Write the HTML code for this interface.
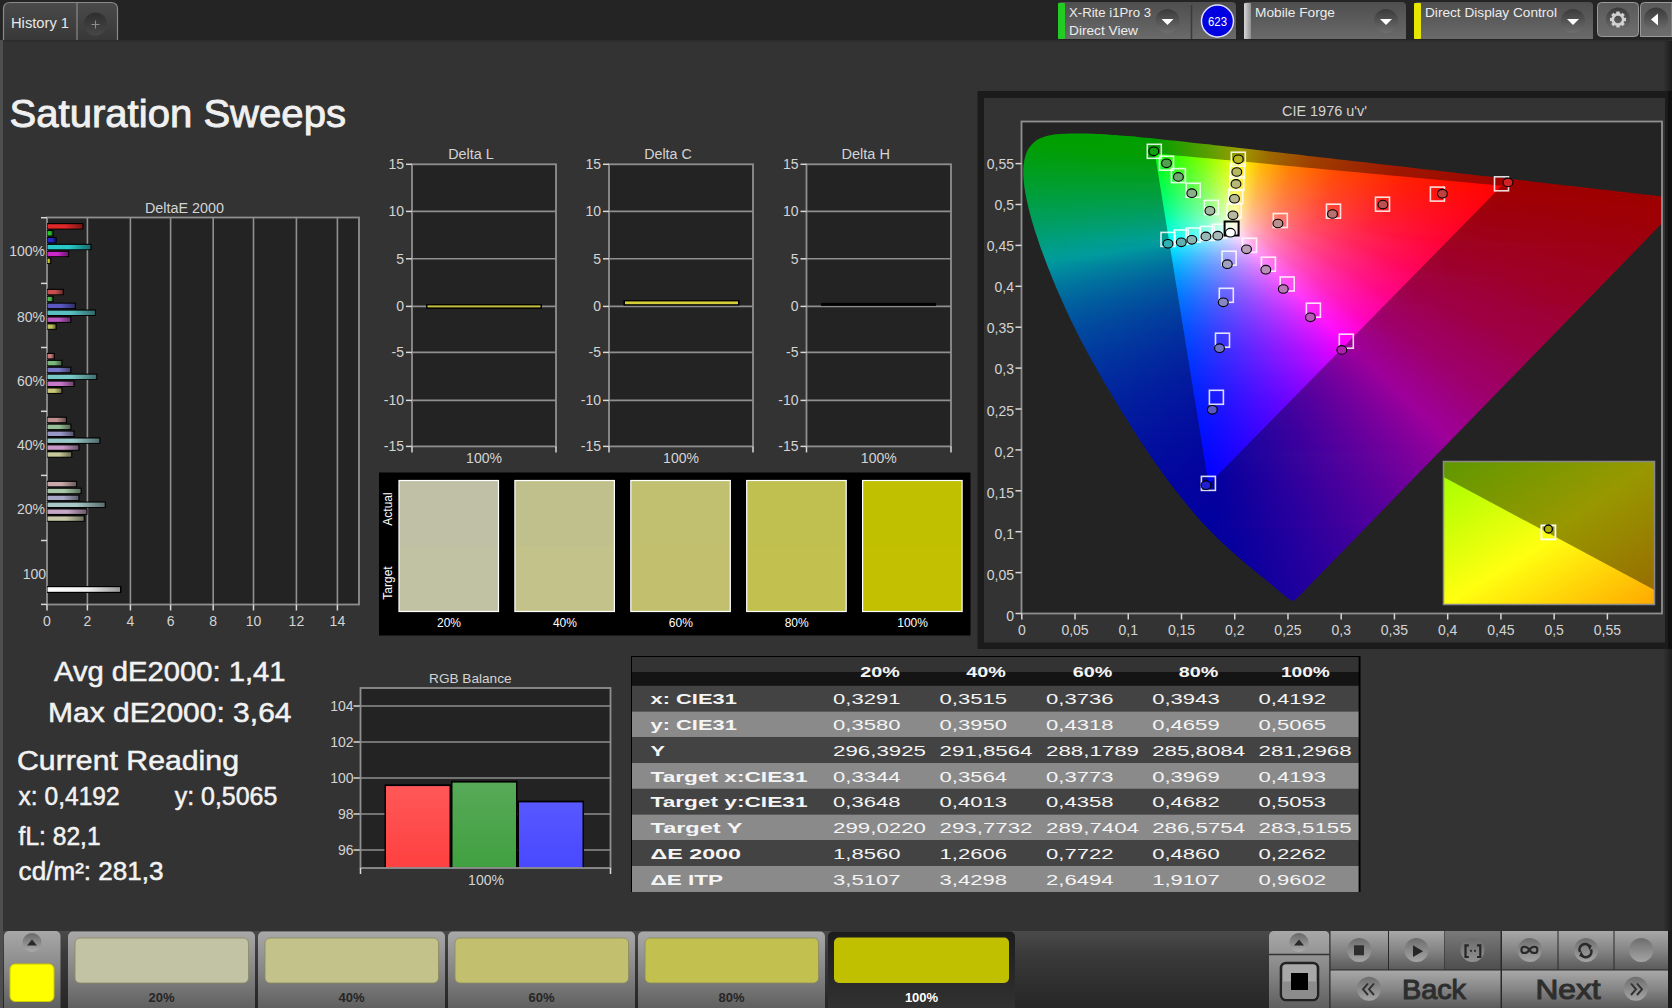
<!DOCTYPE html>
<html><head><meta charset="utf-8"><title>Saturation Sweeps</title>
<style>html,body{margin:0;padding:0;background:#333;overflow:hidden}svg{display:block}text{font-family:"Liberation Sans",sans-serif}</style>
</head><body>
<svg width="1672" height="1008" viewBox="0 0 1672 1008">
<defs><linearGradient id="tabg" x1="0" y1="0" x2="0" y2="1"><stop offset="0" stop-color="#4a4a4a"/><stop offset="1" stop-color="#383838"/></linearGradient><linearGradient id="plusg" x1="0" y1="0" x2="0" y2="1"><stop offset="0" stop-color="#2e2e2e"/><stop offset="1" stop-color="#474747"/></linearGradient><linearGradient id="wg" x1="0" y1="0" x2="0" y2="1"><stop offset="0" stop-color="#4e4e4e"/><stop offset="1" stop-color="#6a6a6a"/></linearGradient><linearGradient id="ddg" x1="0" y1="0" x2="0" y2="1"><stop offset="0" stop-color="#3a3a3a"/><stop offset="1" stop-color="#6e6e6e"/></linearGradient><linearGradient id="wbar" x1="0" y1="0" x2="1" y2="0"><stop offset="0" stop-color="#d8d8d8"/><stop offset="1" stop-color="#909090"/></linearGradient><linearGradient id="btg" x1="0" y1="0" x2="0" y2="1"><stop offset="0" stop-color="#5a5a5a"/><stop offset="1" stop-color="#6e6e6e"/></linearGradient><linearGradient id="db00" x1="0" y1="0" x2="1" y2="0"><stop offset="0" stop-color="#e02828"/><stop offset="0.5" stop-color="#e02828"/><stop offset="1" stop-color="#e02828" stop-opacity="0.55"/></linearGradient><linearGradient id="db01" x1="0" y1="0" x2="1" y2="0"><stop offset="0" stop-color="#28c828"/><stop offset="0.5" stop-color="#28c828"/><stop offset="1" stop-color="#28c828" stop-opacity="0.55"/></linearGradient><linearGradient id="db02" x1="0" y1="0" x2="1" y2="0"><stop offset="0" stop-color="#2828c8"/><stop offset="0.5" stop-color="#2828c8"/><stop offset="1" stop-color="#2828c8" stop-opacity="0.55"/></linearGradient><linearGradient id="db03" x1="0" y1="0" x2="1" y2="0"><stop offset="0" stop-color="#28c8c8"/><stop offset="0.5" stop-color="#28c8c8"/><stop offset="1" stop-color="#28c8c8" stop-opacity="0.55"/></linearGradient><linearGradient id="db04" x1="0" y1="0" x2="1" y2="0"><stop offset="0" stop-color="#c828c8"/><stop offset="0.5" stop-color="#c828c8"/><stop offset="1" stop-color="#c828c8" stop-opacity="0.55"/></linearGradient><linearGradient id="db05" x1="0" y1="0" x2="1" y2="0"><stop offset="0" stop-color="#c8c828"/><stop offset="0.5" stop-color="#c8c828"/><stop offset="1" stop-color="#c8c828" stop-opacity="0.55"/></linearGradient><linearGradient id="db10" x1="0" y1="0" x2="1" y2="0"><stop offset="0" stop-color="#c85050"/><stop offset="0.5" stop-color="#c85050"/><stop offset="1" stop-color="#c85050" stop-opacity="0.55"/></linearGradient><linearGradient id="db11" x1="0" y1="0" x2="1" y2="0"><stop offset="0" stop-color="#50b850"/><stop offset="0.5" stop-color="#50b850"/><stop offset="1" stop-color="#50b850" stop-opacity="0.55"/></linearGradient><linearGradient id="db12" x1="0" y1="0" x2="1" y2="0"><stop offset="0" stop-color="#5858c0"/><stop offset="0.5" stop-color="#5858c0"/><stop offset="1" stop-color="#5858c0" stop-opacity="0.55"/></linearGradient><linearGradient id="db13" x1="0" y1="0" x2="1" y2="0"><stop offset="0" stop-color="#58c0c0"/><stop offset="0.5" stop-color="#58c0c0"/><stop offset="1" stop-color="#58c0c0" stop-opacity="0.55"/></linearGradient><linearGradient id="db14" x1="0" y1="0" x2="1" y2="0"><stop offset="0" stop-color="#b858c0"/><stop offset="0.5" stop-color="#b858c0"/><stop offset="1" stop-color="#b858c0" stop-opacity="0.55"/></linearGradient><linearGradient id="db15" x1="0" y1="0" x2="1" y2="0"><stop offset="0" stop-color="#c0c058"/><stop offset="0.5" stop-color="#c0c058"/><stop offset="1" stop-color="#c0c058" stop-opacity="0.55"/></linearGradient><linearGradient id="db20" x1="0" y1="0" x2="1" y2="0"><stop offset="0" stop-color="#c87878"/><stop offset="0.5" stop-color="#c87878"/><stop offset="1" stop-color="#c87878" stop-opacity="0.55"/></linearGradient><linearGradient id="db21" x1="0" y1="0" x2="1" y2="0"><stop offset="0" stop-color="#78b878"/><stop offset="0.5" stop-color="#78b878"/><stop offset="1" stop-color="#78b878" stop-opacity="0.55"/></linearGradient><linearGradient id="db22" x1="0" y1="0" x2="1" y2="0"><stop offset="0" stop-color="#7878c8"/><stop offset="0.5" stop-color="#7878c8"/><stop offset="1" stop-color="#7878c8" stop-opacity="0.55"/></linearGradient><linearGradient id="db23" x1="0" y1="0" x2="1" y2="0"><stop offset="0" stop-color="#78c8c8"/><stop offset="0.5" stop-color="#78c8c8"/><stop offset="1" stop-color="#78c8c8" stop-opacity="0.55"/></linearGradient><linearGradient id="db24" x1="0" y1="0" x2="1" y2="0"><stop offset="0" stop-color="#c878c8"/><stop offset="0.5" stop-color="#c878c8"/><stop offset="1" stop-color="#c878c8" stop-opacity="0.55"/></linearGradient><linearGradient id="db25" x1="0" y1="0" x2="1" y2="0"><stop offset="0" stop-color="#c8c878"/><stop offset="0.5" stop-color="#c8c878"/><stop offset="1" stop-color="#c8c878" stop-opacity="0.55"/></linearGradient><linearGradient id="db30" x1="0" y1="0" x2="1" y2="0"><stop offset="0" stop-color="#c09090"/><stop offset="0.5" stop-color="#c09090"/><stop offset="1" stop-color="#c09090" stop-opacity="0.55"/></linearGradient><linearGradient id="db31" x1="0" y1="0" x2="1" y2="0"><stop offset="0" stop-color="#98c098"/><stop offset="0.5" stop-color="#98c098"/><stop offset="1" stop-color="#98c098" stop-opacity="0.55"/></linearGradient><linearGradient id="db32" x1="0" y1="0" x2="1" y2="0"><stop offset="0" stop-color="#9898c8"/><stop offset="0.5" stop-color="#9898c8"/><stop offset="1" stop-color="#9898c8" stop-opacity="0.55"/></linearGradient><linearGradient id="db33" x1="0" y1="0" x2="1" y2="0"><stop offset="0" stop-color="#98c8c8"/><stop offset="0.5" stop-color="#98c8c8"/><stop offset="1" stop-color="#98c8c8" stop-opacity="0.55"/></linearGradient><linearGradient id="db34" x1="0" y1="0" x2="1" y2="0"><stop offset="0" stop-color="#c898c8"/><stop offset="0.5" stop-color="#c898c8"/><stop offset="1" stop-color="#c898c8" stop-opacity="0.55"/></linearGradient><linearGradient id="db35" x1="0" y1="0" x2="1" y2="0"><stop offset="0" stop-color="#c8c898"/><stop offset="0.5" stop-color="#c8c898"/><stop offset="1" stop-color="#c8c898" stop-opacity="0.55"/></linearGradient><linearGradient id="db40" x1="0" y1="0" x2="1" y2="0"><stop offset="0" stop-color="#c8a8a8"/><stop offset="0.5" stop-color="#c8a8a8"/><stop offset="1" stop-color="#c8a8a8" stop-opacity="0.55"/></linearGradient><linearGradient id="db41" x1="0" y1="0" x2="1" y2="0"><stop offset="0" stop-color="#a8c8a8"/><stop offset="0.5" stop-color="#a8c8a8"/><stop offset="1" stop-color="#a8c8a8" stop-opacity="0.55"/></linearGradient><linearGradient id="db42" x1="0" y1="0" x2="1" y2="0"><stop offset="0" stop-color="#a8a8c8"/><stop offset="0.5" stop-color="#a8a8c8"/><stop offset="1" stop-color="#a8a8c8" stop-opacity="0.55"/></linearGradient><linearGradient id="db43" x1="0" y1="0" x2="1" y2="0"><stop offset="0" stop-color="#a8c8c8"/><stop offset="0.5" stop-color="#a8c8c8"/><stop offset="1" stop-color="#a8c8c8" stop-opacity="0.55"/></linearGradient><linearGradient id="db44" x1="0" y1="0" x2="1" y2="0"><stop offset="0" stop-color="#c8a8c8"/><stop offset="0.5" stop-color="#c8a8c8"/><stop offset="1" stop-color="#c8a8c8" stop-opacity="0.55"/></linearGradient><linearGradient id="db45" x1="0" y1="0" x2="1" y2="0"><stop offset="0" stop-color="#c8c8a8"/><stop offset="0.5" stop-color="#c8c8a8"/><stop offset="1" stop-color="#c8c8a8" stop-opacity="0.55"/></linearGradient><linearGradient id="dbw" x1="0" y1="0" x2="1" y2="0"><stop offset="0" stop-color="#ffffff"/><stop offset="0.55" stop-color="#f0f0f0"/><stop offset="1" stop-color="#9a9a9a"/></linearGradient><clipPath id="hsclip"><path d="M1295.2,599.9 L1295.2,600.0 L1295.1,600.0 L1295.0,600.1 L1294.9,600.1 L1294.8,600.2 L1294.7,600.3 L1294.6,600.3 L1294.4,600.4 L1294.2,600.4 L1294.0,600.5 L1293.8,600.5 L1293.6,600.5 L1293.4,600.5 L1293.1,600.5 L1292.8,600.5 L1292.4,600.4 L1291.9,600.3 L1291.4,600.1 L1290.9,599.9 L1290.3,599.7 L1289.8,599.4 L1289.3,599.1 L1288.8,598.7 L1288.2,598.3 L1287.6,597.9 L1286.9,597.4 L1286.2,596.9 L1285.5,596.3 L1284.7,595.7 L1283.8,595.0 L1282.9,594.2 L1281.9,593.4 L1280.8,592.6 L1279.7,591.6 L1278.5,590.6 L1277.2,589.6 L1275.9,588.5 L1274.6,587.3 L1273.2,586.1 L1271.7,584.9 L1270.1,583.6 L1268.5,582.2 L1266.8,580.8 L1265.0,579.3 L1263.1,577.8 L1261.0,576.1 L1258.9,574.3 L1256.6,572.5 L1254.3,570.6 L1251.8,568.6 L1249.3,566.5 L1246.7,564.4 L1244.0,562.1 L1241.2,559.8 L1238.3,557.2 L1235.2,554.6 L1232.0,551.8 L1228.7,548.8 L1225.3,545.6 L1221.7,542.2 L1218.0,538.7 L1214.2,535.1 L1210.3,531.1 L1206.2,526.8 L1201.7,521.9 L1196.9,516.5 L1191.8,510.6 L1186.5,504.2 L1180.9,497.3 L1175.2,490.0 L1169.3,482.2 L1163.2,473.9 L1156.8,465.1 L1150.4,455.9 L1143.9,446.3 L1137.3,436.2 L1130.5,425.6 L1123.6,414.5 L1116.7,403.3 L1110.0,392.0 L1103.2,380.5 L1096.5,368.7 L1089.8,356.7 L1083.4,344.9 L1077.3,333.2 L1071.6,321.6 L1066.2,310.0 L1061.1,298.6 L1056.2,287.4 L1051.8,276.7 L1047.7,266.5 L1043.9,256.5 L1040.4,246.9 L1037.3,237.8 L1034.5,229.2 L1032.0,221.1 L1029.9,213.6 L1028.2,206.6 L1026.7,200.0 L1025.5,193.8 L1024.5,188.1 L1023.9,182.8 L1023.5,178.0 L1023.3,173.5 L1023.3,169.2 L1023.6,165.2 L1024.1,161.6 L1024.8,158.2 L1025.7,155.1 L1026.7,152.3 L1028.0,149.6 L1029.5,147.3 L1031.2,145.2 L1033.0,143.3 L1034.9,141.5 L1036.9,140.1 L1039.1,138.8 L1041.5,137.8 L1043.9,136.9 L1046.4,136.1 L1049.0,135.4 L1051.7,134.9 L1054.5,134.6 L1057.3,134.3 L1060.1,134.0 L1063.0,133.8 L1066.0,133.7 L1069.0,133.6 L1072.1,133.6 L1075.1,133.5 L1078.1,133.5 L1081.1,133.5 L1084.2,133.6 L1087.2,133.6 L1090.3,133.7 L1093.4,133.8 L1096.5,134.0 L1099.7,134.1 L1102.9,134.3 L1106.2,134.5 L1109.5,134.7 L1112.8,134.9 L1116.2,135.1 L1119.7,135.4 L1123.2,135.7 L1126.8,136.0 L1130.5,136.3 L1134.2,136.6 L1137.9,137.0 L1141.8,137.4 L1145.7,137.7 L1149.7,138.1 L1153.8,138.6 L1157.9,139.0 L1162.2,139.4 L1166.5,139.9 L1171.0,140.4 L1175.5,140.8 L1180.1,141.3 L1184.8,141.8 L1189.6,142.4 L1194.5,142.9 L1199.5,143.5 L1204.6,144.1 L1209.8,144.6 L1215.1,145.2 L1220.6,145.8 L1226.1,146.5 L1231.7,147.1 L1237.5,147.8 L1243.4,148.4 L1249.3,149.1 L1255.4,149.8 L1261.6,150.5 L1267.9,151.2 L1274.3,152.0 L1280.9,152.7 L1287.5,153.5 L1294.3,154.3 L1301.1,155.1 L1308.1,155.9 L1315.1,156.7 L1322.3,157.5 L1329.6,158.3 L1336.9,159.2 L1344.3,160.0 L1351.9,160.9 L1359.5,161.8 L1367.1,162.6 L1374.8,163.5 L1382.5,164.4 L1390.3,165.3 L1398.2,166.2 L1406.0,167.1 L1413.7,168.0 L1421.3,168.9 L1428.9,169.7 L1436.4,170.6 L1443.9,171.5 L1451.4,172.3 L1458.8,173.2 L1466.3,174.0 L1473.7,174.9 L1481.0,175.7 L1488.1,176.5 L1495.0,177.3 L1501.8,178.1 L1508.5,178.9 L1515.0,179.6 L1521.3,180.3 L1527.5,181.0 L1533.6,181.7 L1539.5,182.4 L1545.2,183.1 L1550.7,183.7 L1556.1,184.3 L1561.2,184.9 L1566.2,185.5 L1571.0,186.1 L1575.7,186.6 L1580.2,187.1 L1584.5,187.6 L1588.7,188.1 L1592.7,188.5 L1596.7,189.0 L1600.4,189.4 L1604.1,189.8 L1607.6,190.2 L1611.0,190.6 L1614.3,191.0 L1617.6,191.4 L1620.7,191.8 L1623.8,192.1 L1626.7,192.4 L1629.6,192.8 L1632.3,193.1 L1634.7,193.4 L1637.1,193.6 L1639.6,193.9 L1642.6,194.3 L1646.0,194.7 L1649.9,195.1 L1654.0,195.6 L1657.8,196.0 L1661.1,196.4 L1663.9,196.7 L1666.2,197.0 L1668.2,197.2 L1670.2,197.4 L1672.2,197.7 L1674.3,197.9 L1676.4,198.1 L1678.5,198.4 L1680.3,198.6 L1681.8,198.8 L1683.0,198.9 L1683.9,199.0 L1684.6,199.1 L1685.1,199.1 L1685.5,199.2 Z"/></clipPath><clipPath id="hstclip"><path d="M1501.7,185.8 L1154.9,153.4 L1208.6,484.3 Z"/></clipPath><linearGradient id="hso0" gradientUnits="userSpaceOnUse" x1="1021" y1="0" x2="1662" y2="0"><stop offset="0.000" stop-color="#009e00"/><stop offset="0.206" stop-color="#049e00"/><stop offset="0.300" stop-color="#639e00"/><stop offset="0.346" stop-color="#9e9d00"/><stop offset="0.393" stop-color="#9e6c00"/><stop offset="0.473" stop-color="#9e3f00"/><stop offset="0.613" stop-color="#9e1a00"/><stop offset="0.866" stop-color="#9e0000"/><stop offset="0.997" stop-color="#9e0000"/></linearGradient><linearGradient id="hso1" gradientUnits="userSpaceOnUse" x1="1021" y1="0" x2="1662" y2="0"><stop offset="0.000" stop-color="#009e00"/><stop offset="0.206" stop-color="#049e00"/><stop offset="0.300" stop-color="#639e00"/><stop offset="0.346" stop-color="#9e9d00"/><stop offset="0.393" stop-color="#9e6b00"/><stop offset="0.473" stop-color="#9e3e00"/><stop offset="0.613" stop-color="#9e1a00"/><stop offset="0.866" stop-color="#9e0000"/><stop offset="0.997" stop-color="#9e0000"/></linearGradient><linearGradient id="hso2" gradientUnits="userSpaceOnUse" x1="1021" y1="0" x2="1662" y2="0"><stop offset="0.000" stop-color="#009e00"/><stop offset="0.206" stop-color="#039e00"/><stop offset="0.300" stop-color="#639e00"/><stop offset="0.346" stop-color="#9e9c00"/><stop offset="0.393" stop-color="#9e6b00"/><stop offset="0.473" stop-color="#9e3e00"/><stop offset="0.613" stop-color="#9e1900"/><stop offset="0.861" stop-color="#9e0000"/><stop offset="0.997" stop-color="#9e0000"/></linearGradient><linearGradient id="hso3" gradientUnits="userSpaceOnUse" x1="1021" y1="0" x2="1662" y2="0"><stop offset="0.000" stop-color="#009e00"/><stop offset="0.206" stop-color="#039e00"/><stop offset="0.300" stop-color="#639e00"/><stop offset="0.346" stop-color="#9e9c00"/><stop offset="0.393" stop-color="#9e6a00"/><stop offset="0.473" stop-color="#9e3e00"/><stop offset="0.613" stop-color="#9e1900"/><stop offset="0.861" stop-color="#9e0000"/><stop offset="0.997" stop-color="#9e0000"/></linearGradient><linearGradient id="hso4" gradientUnits="userSpaceOnUse" x1="1021" y1="0" x2="1662" y2="0"><stop offset="0.000" stop-color="#009e00"/><stop offset="0.206" stop-color="#029e00"/><stop offset="0.300" stop-color="#639e00"/><stop offset="0.346" stop-color="#9e9b00"/><stop offset="0.393" stop-color="#9e6a00"/><stop offset="0.473" stop-color="#9e3d00"/><stop offset="0.613" stop-color="#9e1900"/><stop offset="0.856" stop-color="#9e0000"/><stop offset="0.997" stop-color="#9e0000"/></linearGradient><linearGradient id="hso5" gradientUnits="userSpaceOnUse" x1="1021" y1="0" x2="1662" y2="0"><stop offset="0.000" stop-color="#009e00"/><stop offset="0.206" stop-color="#029e00"/><stop offset="0.300" stop-color="#639e00"/><stop offset="0.346" stop-color="#9e9b00"/><stop offset="0.393" stop-color="#9e6900"/><stop offset="0.473" stop-color="#9e3d00"/><stop offset="0.613" stop-color="#9e1800"/><stop offset="0.856" stop-color="#9e0000"/><stop offset="0.997" stop-color="#9e0000"/></linearGradient><linearGradient id="hso6" gradientUnits="userSpaceOnUse" x1="1021" y1="0" x2="1662" y2="0"><stop offset="0.000" stop-color="#009e00"/><stop offset="0.206" stop-color="#029e00"/><stop offset="0.300" stop-color="#639e00"/><stop offset="0.346" stop-color="#9e9b00"/><stop offset="0.393" stop-color="#9e6900"/><stop offset="0.473" stop-color="#9e3c00"/><stop offset="0.618" stop-color="#9e1700"/><stop offset="0.856" stop-color="#9e0000"/><stop offset="0.997" stop-color="#9e0000"/></linearGradient><linearGradient id="hso7" gradientUnits="userSpaceOnUse" x1="1021" y1="0" x2="1662" y2="0"><stop offset="0.000" stop-color="#009e00"/><stop offset="0.206" stop-color="#019e00"/><stop offset="0.295" stop-color="#5d9e00"/><stop offset="0.346" stop-color="#9e9a00"/><stop offset="0.393" stop-color="#9e6800"/><stop offset="0.473" stop-color="#9e3c00"/><stop offset="0.618" stop-color="#9e1700"/><stop offset="0.856" stop-color="#9e0000"/><stop offset="0.997" stop-color="#9e0000"/></linearGradient><linearGradient id="hso8" gradientUnits="userSpaceOnUse" x1="1021" y1="0" x2="1662" y2="0"><stop offset="0.000" stop-color="#009e00"/><stop offset="0.206" stop-color="#019e00"/><stop offset="0.295" stop-color="#5d9e00"/><stop offset="0.342" stop-color="#9c9e00"/><stop offset="0.398" stop-color="#9e6400"/><stop offset="0.477" stop-color="#9e3a00"/><stop offset="0.622" stop-color="#9e1600"/><stop offset="0.856" stop-color="#9e0000"/><stop offset="0.997" stop-color="#9e0000"/></linearGradient><linearGradient id="hso9" gradientUnits="userSpaceOnUse" x1="1021" y1="0" x2="1662" y2="0"><stop offset="0.000" stop-color="#009e00"/><stop offset="0.206" stop-color="#009e00"/><stop offset="0.295" stop-color="#5d9e00"/><stop offset="0.342" stop-color="#9c9e00"/><stop offset="0.393" stop-color="#9e6800"/><stop offset="0.473" stop-color="#9e3b00"/><stop offset="0.618" stop-color="#9e1600"/><stop offset="0.852" stop-color="#9e0000"/><stop offset="0.997" stop-color="#9e0000"/></linearGradient><linearGradient id="hso10" gradientUnits="userSpaceOnUse" x1="1021" y1="0" x2="1662" y2="0"><stop offset="0.000" stop-color="#009e02"/><stop offset="0.211" stop-color="#049e00"/><stop offset="0.300" stop-color="#639e00"/><stop offset="0.342" stop-color="#9d9e00"/><stop offset="0.393" stop-color="#9e6700"/><stop offset="0.473" stop-color="#9e3b00"/><stop offset="0.618" stop-color="#9e1600"/><stop offset="0.847" stop-color="#9e0000"/><stop offset="0.997" stop-color="#9e0000"/></linearGradient><linearGradient id="hso11" gradientUnits="userSpaceOnUse" x1="1021" y1="0" x2="1662" y2="0"><stop offset="0.000" stop-color="#009e04"/><stop offset="0.211" stop-color="#049e00"/><stop offset="0.300" stop-color="#639e00"/><stop offset="0.342" stop-color="#9d9e00"/><stop offset="0.393" stop-color="#9e6700"/><stop offset="0.473" stop-color="#9e3a00"/><stop offset="0.618" stop-color="#9e1600"/><stop offset="0.847" stop-color="#9e0000"/><stop offset="0.997" stop-color="#9e0000"/></linearGradient><linearGradient id="hso12" gradientUnits="userSpaceOnUse" x1="1021" y1="0" x2="1662" y2="0"><stop offset="0.000" stop-color="#009e06"/><stop offset="0.211" stop-color="#039e00"/><stop offset="0.300" stop-color="#639e00"/><stop offset="0.342" stop-color="#9d9e00"/><stop offset="0.388" stop-color="#9e6a00"/><stop offset="0.463" stop-color="#9e3e00"/><stop offset="0.599" stop-color="#9e1800"/><stop offset="0.833" stop-color="#9e0000"/><stop offset="0.997" stop-color="#9e0000"/></linearGradient><linearGradient id="hso13" gradientUnits="userSpaceOnUse" x1="1021" y1="0" x2="1662" y2="0"><stop offset="0.000" stop-color="#009e08"/><stop offset="0.211" stop-color="#039e00"/><stop offset="0.300" stop-color="#639e00"/><stop offset="0.342" stop-color="#9e9e00"/><stop offset="0.388" stop-color="#9e6900"/><stop offset="0.463" stop-color="#9e3d00"/><stop offset="0.599" stop-color="#9e1800"/><stop offset="0.833" stop-color="#9e0000"/><stop offset="0.997" stop-color="#9e0000"/></linearGradient><linearGradient id="hso14" gradientUnits="userSpaceOnUse" x1="1021" y1="0" x2="1662" y2="0"><stop offset="0.000" stop-color="#009e0a"/><stop offset="0.211" stop-color="#029e00"/><stop offset="0.300" stop-color="#639e00"/><stop offset="0.342" stop-color="#9e9e00"/><stop offset="0.388" stop-color="#9e6900"/><stop offset="0.463" stop-color="#9e3d00"/><stop offset="0.599" stop-color="#9e1800"/><stop offset="0.828" stop-color="#9e0000"/><stop offset="0.997" stop-color="#9e0000"/></linearGradient><linearGradient id="hso15" gradientUnits="userSpaceOnUse" x1="1021" y1="0" x2="1662" y2="0"><stop offset="0.000" stop-color="#009e0c"/><stop offset="0.211" stop-color="#029e00"/><stop offset="0.300" stop-color="#639e00"/><stop offset="0.342" stop-color="#9e9d00"/><stop offset="0.388" stop-color="#9e6900"/><stop offset="0.463" stop-color="#9e3c00"/><stop offset="0.599" stop-color="#9e1800"/><stop offset="0.828" stop-color="#9e0000"/><stop offset="0.997" stop-color="#9e0000"/></linearGradient><linearGradient id="hso16" gradientUnits="userSpaceOnUse" x1="1021" y1="0" x2="1662" y2="0"><stop offset="0.000" stop-color="#009e0e"/><stop offset="0.211" stop-color="#019e02"/><stop offset="0.295" stop-color="#5d9e00"/><stop offset="0.342" stop-color="#9e9d00"/><stop offset="0.388" stop-color="#9e6800"/><stop offset="0.463" stop-color="#9e3c00"/><stop offset="0.599" stop-color="#9e1700"/><stop offset="0.824" stop-color="#9e0000"/><stop offset="0.997" stop-color="#9e0000"/></linearGradient><linearGradient id="hso17" gradientUnits="userSpaceOnUse" x1="1021" y1="0" x2="1662" y2="0"><stop offset="0.000" stop-color="#009e10"/><stop offset="0.211" stop-color="#019e05"/><stop offset="0.295" stop-color="#5d9e00"/><stop offset="0.342" stop-color="#9e9c00"/><stop offset="0.388" stop-color="#9e6800"/><stop offset="0.463" stop-color="#9e3c00"/><stop offset="0.599" stop-color="#9e1700"/><stop offset="0.824" stop-color="#9e0000"/><stop offset="0.997" stop-color="#9e0000"/></linearGradient><linearGradient id="hso18" gradientUnits="userSpaceOnUse" x1="1021" y1="0" x2="1662" y2="0"><stop offset="0.000" stop-color="#009e12"/><stop offset="0.211" stop-color="#009e08"/><stop offset="0.295" stop-color="#5d9e01"/><stop offset="0.342" stop-color="#9e9c00"/><stop offset="0.384" stop-color="#9e6b00"/><stop offset="0.454" stop-color="#9e3f00"/><stop offset="0.580" stop-color="#9e1a00"/><stop offset="0.810" stop-color="#9e0000"/><stop offset="0.997" stop-color="#9e0000"/></linearGradient><linearGradient id="hso19" gradientUnits="userSpaceOnUse" x1="1021" y1="0" x2="1662" y2="0"><stop offset="0.000" stop-color="#009e14"/><stop offset="0.211" stop-color="#009e0a"/><stop offset="0.295" stop-color="#5d9e04"/><stop offset="0.342" stop-color="#9e9c00"/><stop offset="0.384" stop-color="#9e6b00"/><stop offset="0.454" stop-color="#9e3f00"/><stop offset="0.580" stop-color="#9e1a00"/><stop offset="0.805" stop-color="#9e0000"/><stop offset="0.997" stop-color="#9e0000"/></linearGradient><linearGradient id="hso20" gradientUnits="userSpaceOnUse" x1="1021" y1="0" x2="1662" y2="0"><stop offset="0.000" stop-color="#009e16"/><stop offset="0.215" stop-color="#049e0d"/><stop offset="0.300" stop-color="#649e07"/><stop offset="0.342" stop-color="#9e9b03"/><stop offset="0.384" stop-color="#9e6a00"/><stop offset="0.454" stop-color="#9e3e00"/><stop offset="0.580" stop-color="#9e1900"/><stop offset="0.805" stop-color="#9e0000"/><stop offset="0.997" stop-color="#9e0000"/></linearGradient><linearGradient id="hso21" gradientUnits="userSpaceOnUse" x1="1021" y1="0" x2="1662" y2="0"><stop offset="0.000" stop-color="#009e19"/><stop offset="0.215" stop-color="#039e10"/><stop offset="0.300" stop-color="#649e0a"/><stop offset="0.342" stop-color="#9e9b07"/><stop offset="0.384" stop-color="#9e6a02"/><stop offset="0.454" stop-color="#9e3e00"/><stop offset="0.580" stop-color="#9e1900"/><stop offset="0.800" stop-color="#9e0000"/><stop offset="0.997" stop-color="#9e0000"/></linearGradient><linearGradient id="hso22" gradientUnits="userSpaceOnUse" x1="1021" y1="0" x2="1662" y2="0"><stop offset="0.000" stop-color="#009e1b"/><stop offset="0.215" stop-color="#039e13"/><stop offset="0.300" stop-color="#649e0e"/><stop offset="0.342" stop-color="#9e9a0a"/><stop offset="0.384" stop-color="#9e6904"/><stop offset="0.454" stop-color="#9e3d00"/><stop offset="0.580" stop-color="#9e1900"/><stop offset="0.800" stop-color="#9e0000"/><stop offset="0.997" stop-color="#9e0000"/></linearGradient><linearGradient id="hso23" gradientUnits="userSpaceOnUse" x1="1021" y1="0" x2="1662" y2="0"><stop offset="0.000" stop-color="#009e1d"/><stop offset="0.215" stop-color="#029e16"/><stop offset="0.300" stop-color="#649e11"/><stop offset="0.342" stop-color="#9e9a0e"/><stop offset="0.384" stop-color="#9e6907"/><stop offset="0.454" stop-color="#9e3d01"/><stop offset="0.580" stop-color="#9e1800"/><stop offset="0.800" stop-color="#9e0000"/><stop offset="0.997" stop-color="#9e0000"/></linearGradient><linearGradient id="hso24" gradientUnits="userSpaceOnUse" x1="1021" y1="0" x2="1662" y2="0"><stop offset="0.000" stop-color="#009e1f"/><stop offset="0.215" stop-color="#029e19"/><stop offset="0.295" stop-color="#5d9e15"/><stop offset="0.337" stop-color="#9c9e12"/><stop offset="0.388" stop-color="#9e6409"/><stop offset="0.463" stop-color="#9e3802"/><stop offset="0.599" stop-color="#9e1500"/><stop offset="0.805" stop-color="#9e0000"/><stop offset="0.997" stop-color="#9e0000"/></linearGradient><linearGradient id="hso25" gradientUnits="userSpaceOnUse" x1="1021" y1="0" x2="1662" y2="0"><stop offset="0.000" stop-color="#009e21"/><stop offset="0.215" stop-color="#019e1c"/><stop offset="0.295" stop-color="#5e9e18"/><stop offset="0.337" stop-color="#9c9e16"/><stop offset="0.384" stop-color="#9e680c"/><stop offset="0.454" stop-color="#9e3c05"/><stop offset="0.580" stop-color="#9e1800"/><stop offset="0.796" stop-color="#9e0000"/><stop offset="0.997" stop-color="#9e0000"/></linearGradient><linearGradient id="hso26" gradientUnits="userSpaceOnUse" x1="1021" y1="0" x2="1662" y2="0"><stop offset="0.000" stop-color="#009e23"/><stop offset="0.215" stop-color="#019e1f"/><stop offset="0.295" stop-color="#5e9e1c"/><stop offset="0.337" stop-color="#9c9e1a"/><stop offset="0.384" stop-color="#9e670f"/><stop offset="0.454" stop-color="#9e3b07"/><stop offset="0.580" stop-color="#9e1700"/><stop offset="0.791" stop-color="#9e0000"/><stop offset="0.997" stop-color="#9e0000"/></linearGradient><linearGradient id="hso27" gradientUnits="userSpaceOnUse" x1="1021" y1="0" x2="1662" y2="0"><stop offset="0.000" stop-color="#009e26"/><stop offset="0.215" stop-color="#009e22"/><stop offset="0.295" stop-color="#5e9e1f"/><stop offset="0.337" stop-color="#9d9e1e"/><stop offset="0.384" stop-color="#9e6712"/><stop offset="0.454" stop-color="#9e3b09"/><stop offset="0.580" stop-color="#9e1701"/><stop offset="0.791" stop-color="#9e0000"/><stop offset="0.997" stop-color="#9e0000"/></linearGradient><linearGradient id="hso28" gradientUnits="userSpaceOnUse" x1="1021" y1="0" x2="1662" y2="0"><stop offset="0.000" stop-color="#009e28"/><stop offset="0.215" stop-color="#009e25"/><stop offset="0.295" stop-color="#5e9e23"/><stop offset="0.337" stop-color="#9d9e22"/><stop offset="0.379" stop-color="#9e6a16"/><stop offset="0.445" stop-color="#9e3f0c"/><stop offset="0.566" stop-color="#9e1903"/><stop offset="0.777" stop-color="#9e0000"/><stop offset="0.997" stop-color="#9e0000"/></linearGradient><linearGradient id="hso29" gradientUnits="userSpaceOnUse" x1="1021" y1="0" x2="1662" y2="0"><stop offset="0.000" stop-color="#009e2a"/><stop offset="0.215" stop-color="#009e28"/><stop offset="0.290" stop-color="#579e27"/><stop offset="0.337" stop-color="#9e9e26"/><stop offset="0.379" stop-color="#9e6a19"/><stop offset="0.445" stop-color="#9e3e0e"/><stop offset="0.566" stop-color="#9e1904"/><stop offset="0.777" stop-color="#9e0000"/><stop offset="0.997" stop-color="#9e0000"/></linearGradient><linearGradient id="hso30" gradientUnits="userSpaceOnUse" x1="1021" y1="0" x2="1662" y2="0"><stop offset="0.000" stop-color="#009e2d"/><stop offset="0.220" stop-color="#049e2b"/><stop offset="0.300" stop-color="#649e2a"/><stop offset="0.337" stop-color="#9e9e2a"/><stop offset="0.379" stop-color="#9e691b"/><stop offset="0.445" stop-color="#9e3e10"/><stop offset="0.566" stop-color="#9e1905"/><stop offset="0.777" stop-color="#9e0000"/><stop offset="0.997" stop-color="#9e0000"/></linearGradient><linearGradient id="hso31" gradientUnits="userSpaceOnUse" x1="1021" y1="0" x2="1662" y2="0"><stop offset="0.000" stop-color="#009e2f"/><stop offset="0.220" stop-color="#039e2e"/><stop offset="0.300" stop-color="#649e2e"/><stop offset="0.337" stop-color="#9e9d2e"/><stop offset="0.379" stop-color="#9e691e"/><stop offset="0.445" stop-color="#9e3d12"/><stop offset="0.566" stop-color="#9e1807"/><stop offset="0.772" stop-color="#9e0000"/><stop offset="0.997" stop-color="#9e0000"/></linearGradient><linearGradient id="hso32" gradientUnits="userSpaceOnUse" x1="1021" y1="0" x2="1662" y2="0"><stop offset="0.000" stop-color="#009e31"/><stop offset="0.220" stop-color="#039e32"/><stop offset="0.300" stop-color="#649e32"/><stop offset="0.337" stop-color="#9e9d32"/><stop offset="0.379" stop-color="#9e6821"/><stop offset="0.445" stop-color="#9e3d14"/><stop offset="0.566" stop-color="#9e1808"/><stop offset="0.772" stop-color="#9e0000"/><stop offset="0.997" stop-color="#9e0000"/></linearGradient><linearGradient id="hso33" gradientUnits="userSpaceOnUse" x1="1021" y1="0" x2="1662" y2="0"><stop offset="0.000" stop-color="#009e33"/><stop offset="0.220" stop-color="#029e35"/><stop offset="0.295" stop-color="#5e9e36"/><stop offset="0.337" stop-color="#9e9c36"/><stop offset="0.379" stop-color="#9e6824"/><stop offset="0.445" stop-color="#9e3c16"/><stop offset="0.566" stop-color="#9e1709"/><stop offset="0.768" stop-color="#9e0001"/><stop offset="0.997" stop-color="#9e0000"/></linearGradient><linearGradient id="hso34" gradientUnits="userSpaceOnUse" x1="1021" y1="0" x2="1662" y2="0"><stop offset="0.000" stop-color="#009e36"/><stop offset="0.220" stop-color="#029e38"/><stop offset="0.295" stop-color="#5e9e3a"/><stop offset="0.337" stop-color="#9e9c3a"/><stop offset="0.379" stop-color="#9e6727"/><stop offset="0.445" stop-color="#9e3c18"/><stop offset="0.566" stop-color="#9e170b"/><stop offset="0.768" stop-color="#9e0002"/><stop offset="0.997" stop-color="#9e0000"/></linearGradient><linearGradient id="hso35" gradientUnits="userSpaceOnUse" x1="1021" y1="0" x2="1662" y2="0"><stop offset="0.000" stop-color="#009e38"/><stop offset="0.220" stop-color="#019e3c"/><stop offset="0.295" stop-color="#5e9e3e"/><stop offset="0.337" stop-color="#9e9b3e"/><stop offset="0.374" stop-color="#9e6b2c"/><stop offset="0.440" stop-color="#9e3e1b"/><stop offset="0.557" stop-color="#9e190d"/><stop offset="0.758" stop-color="#9e0003"/><stop offset="0.997" stop-color="#9e0000"/></linearGradient><linearGradient id="hso36" gradientUnits="userSpaceOnUse" x1="1021" y1="0" x2="1662" y2="0"><stop offset="0.000" stop-color="#009e3b"/><stop offset="0.220" stop-color="#019e3f"/><stop offset="0.295" stop-color="#5e9e42"/><stop offset="0.337" stop-color="#9e9b42"/><stop offset="0.374" stop-color="#9e6a2f"/><stop offset="0.440" stop-color="#9e3d1d"/><stop offset="0.557" stop-color="#9e180e"/><stop offset="0.758" stop-color="#9e0004"/><stop offset="0.997" stop-color="#9e0000"/></linearGradient><linearGradient id="hso37" gradientUnits="userSpaceOnUse" x1="1021" y1="0" x2="1662" y2="0"><stop offset="0.000" stop-color="#009e3d"/><stop offset="0.220" stop-color="#009e43"/><stop offset="0.295" stop-color="#5e9e46"/><stop offset="0.337" stop-color="#9e9a47"/><stop offset="0.374" stop-color="#9e6a32"/><stop offset="0.440" stop-color="#9e3d1f"/><stop offset="0.557" stop-color="#9e1810"/><stop offset="0.754" stop-color="#9e0005"/><stop offset="0.997" stop-color="#9e0000"/></linearGradient><linearGradient id="hso38" gradientUnits="userSpaceOnUse" x1="1021" y1="0" x2="1662" y2="0"><stop offset="0.000" stop-color="#009e3f"/><stop offset="0.220" stop-color="#009e46"/><stop offset="0.295" stop-color="#5e9e4a"/><stop offset="0.337" stop-color="#9e9a4b"/><stop offset="0.374" stop-color="#9e6935"/><stop offset="0.440" stop-color="#9e3c21"/><stop offset="0.557" stop-color="#9e1711"/><stop offset="0.754" stop-color="#9e0006"/><stop offset="0.997" stop-color="#9e0000"/></linearGradient><linearGradient id="hso39" gradientUnits="userSpaceOnUse" x1="1021" y1="0" x2="1662" y2="0"><stop offset="0.000" stop-color="#009e42"/><stop offset="0.225" stop-color="#049e4a"/><stop offset="0.300" stop-color="#659e4f"/><stop offset="0.332" stop-color="#9b9e51"/><stop offset="0.379" stop-color="#9e6436"/><stop offset="0.445" stop-color="#9e3a22"/><stop offset="0.566" stop-color="#9e1511"/><stop offset="0.758" stop-color="#9e0006"/><stop offset="0.997" stop-color="#9e0000"/></linearGradient><linearGradient id="hso40" gradientUnits="userSpaceOnUse" x1="1021" y1="0" x2="1662" y2="0"><stop offset="0.000" stop-color="#009e44"/><stop offset="0.225" stop-color="#049e4e"/><stop offset="0.300" stop-color="#659e53"/><stop offset="0.332" stop-color="#9b9e56"/><stop offset="0.379" stop-color="#9e6439"/><stop offset="0.445" stop-color="#9e3925"/><stop offset="0.566" stop-color="#9e1513"/><stop offset="0.754" stop-color="#9e0007"/><stop offset="0.997" stop-color="#9e0001"/></linearGradient><linearGradient id="hso41" gradientUnits="userSpaceOnUse" x1="1021" y1="0" x2="1662" y2="0"><stop offset="0.000" stop-color="#009e47"/><stop offset="0.225" stop-color="#039e51"/><stop offset="0.295" stop-color="#5e9e57"/><stop offset="0.332" stop-color="#9c9e5b"/><stop offset="0.374" stop-color="#9e683f"/><stop offset="0.440" stop-color="#9e3b28"/><stop offset="0.557" stop-color="#9e1615"/><stop offset="0.744" stop-color="#9e0009"/><stop offset="0.997" stop-color="#9e0001"/></linearGradient><linearGradient id="hso42" gradientUnits="userSpaceOnUse" x1="1021" y1="0" x2="1662" y2="0"><stop offset="0.000" stop-color="#009e49"/><stop offset="0.225" stop-color="#029e55"/><stop offset="0.295" stop-color="#5e9e5b"/><stop offset="0.332" stop-color="#9c9e60"/><stop offset="0.374" stop-color="#9e6742"/><stop offset="0.440" stop-color="#9e3a2a"/><stop offset="0.557" stop-color="#9e1617"/><stop offset="0.744" stop-color="#9e000a"/><stop offset="0.997" stop-color="#9e0002"/></linearGradient><linearGradient id="hso43" gradientUnits="userSpaceOnUse" x1="1021" y1="0" x2="1662" y2="0"><stop offset="0.000" stop-color="#009e4c"/><stop offset="0.225" stop-color="#029e59"/><stop offset="0.295" stop-color="#5e9e60"/><stop offset="0.332" stop-color="#9d9e65"/><stop offset="0.374" stop-color="#9e6645"/><stop offset="0.440" stop-color="#9e3a2c"/><stop offset="0.557" stop-color="#9e1618"/><stop offset="0.744" stop-color="#9e000a"/><stop offset="0.997" stop-color="#9e0003"/></linearGradient><linearGradient id="hso44" gradientUnits="userSpaceOnUse" x1="1021" y1="0" x2="1662" y2="0"><stop offset="0.000" stop-color="#009e4f"/><stop offset="0.225" stop-color="#019e5d"/><stop offset="0.295" stop-color="#5e9e64"/><stop offset="0.332" stop-color="#9d9e6a"/><stop offset="0.370" stop-color="#9e6b4b"/><stop offset="0.431" stop-color="#9e3e31"/><stop offset="0.538" stop-color="#9e191c"/><stop offset="0.730" stop-color="#9e000c"/><stop offset="0.997" stop-color="#9e0003"/></linearGradient><linearGradient id="hso45" gradientUnits="userSpaceOnUse" x1="1021" y1="0" x2="1662" y2="0"><stop offset="0.000" stop-color="#009e51"/><stop offset="0.225" stop-color="#019e61"/><stop offset="0.295" stop-color="#5e9e69"/><stop offset="0.332" stop-color="#9e9e6f"/><stop offset="0.370" stop-color="#9e6a4f"/><stop offset="0.431" stop-color="#9e3d34"/><stop offset="0.538" stop-color="#9e191d"/><stop offset="0.725" stop-color="#9e000d"/><stop offset="0.997" stop-color="#9e0004"/></linearGradient><linearGradient id="hso46" gradientUnits="userSpaceOnUse" x1="1021" y1="0" x2="1662" y2="0"><stop offset="0.000" stop-color="#009e54"/><stop offset="0.225" stop-color="#009e65"/><stop offset="0.295" stop-color="#5e9e6e"/><stop offset="0.332" stop-color="#9e9e74"/><stop offset="0.370" stop-color="#9e6952"/><stop offset="0.431" stop-color="#9e3d36"/><stop offset="0.538" stop-color="#9e181f"/><stop offset="0.725" stop-color="#9e000e"/><stop offset="0.997" stop-color="#9e0004"/></linearGradient><linearGradient id="hso47" gradientUnits="userSpaceOnUse" x1="1021" y1="0" x2="1662" y2="0"><stop offset="0.000" stop-color="#009e56"/><stop offset="0.225" stop-color="#009e69"/><stop offset="0.295" stop-color="#5e9e72"/><stop offset="0.332" stop-color="#9e9d78"/><stop offset="0.370" stop-color="#9e6956"/><stop offset="0.431" stop-color="#9e3c38"/><stop offset="0.538" stop-color="#9e1820"/><stop offset="0.721" stop-color="#9e000f"/><stop offset="0.997" stop-color="#9e0005"/></linearGradient><linearGradient id="hso48" gradientUnits="userSpaceOnUse" x1="1021" y1="0" x2="1662" y2="0"><stop offset="0.000" stop-color="#009e59"/><stop offset="0.225" stop-color="#009e6d"/><stop offset="0.290" stop-color="#579e76"/><stop offset="0.332" stop-color="#9e9d7d"/><stop offset="0.370" stop-color="#9e6859"/><stop offset="0.431" stop-color="#9e3c3b"/><stop offset="0.538" stop-color="#9e1722"/><stop offset="0.721" stop-color="#9e0010"/><stop offset="0.997" stop-color="#9e0005"/></linearGradient><linearGradient id="hso49" gradientUnits="userSpaceOnUse" x1="1021" y1="0" x2="1662" y2="0"><stop offset="0.000" stop-color="#009e5c"/><stop offset="0.229" stop-color="#049e71"/><stop offset="0.300" stop-color="#669e7d"/><stop offset="0.332" stop-color="#9e9c82"/><stop offset="0.370" stop-color="#9e685d"/><stop offset="0.431" stop-color="#9e3b3d"/><stop offset="0.538" stop-color="#9e1723"/><stop offset="0.716" stop-color="#9e0011"/><stop offset="0.997" stop-color="#9e0006"/></linearGradient><linearGradient id="hso50" gradientUnits="userSpaceOnUse" x1="1021" y1="0" x2="1662" y2="0"><stop offset="0.000" stop-color="#009e5e"/><stop offset="0.229" stop-color="#039e76"/><stop offset="0.295" stop-color="#5e9e81"/><stop offset="0.332" stop-color="#9e9c87"/><stop offset="0.370" stop-color="#9e6760"/><stop offset="0.431" stop-color="#9e3b3f"/><stop offset="0.538" stop-color="#9e1725"/><stop offset="0.716" stop-color="#9e0012"/><stop offset="0.997" stop-color="#9e0007"/></linearGradient><linearGradient id="hso51" gradientUnits="userSpaceOnUse" x1="1021" y1="0" x2="1662" y2="0"><stop offset="0.000" stop-color="#009e61"/><stop offset="0.229" stop-color="#039e7a"/><stop offset="0.295" stop-color="#5e9e86"/><stop offset="0.332" stop-color="#9e9b8c"/><stop offset="0.370" stop-color="#9e6664"/><stop offset="0.431" stop-color="#9e3a42"/><stop offset="0.538" stop-color="#9e1626"/><stop offset="0.716" stop-color="#9e0013"/><stop offset="0.997" stop-color="#9e0007"/></linearGradient><linearGradient id="hso52" gradientUnits="userSpaceOnUse" x1="1021" y1="0" x2="1662" y2="0"><stop offset="0.000" stop-color="#009e64"/><stop offset="0.229" stop-color="#029e7e"/><stop offset="0.295" stop-color="#5e9e8b"/><stop offset="0.332" stop-color="#9e9a91"/><stop offset="0.370" stop-color="#9e6667"/><stop offset="0.431" stop-color="#9e3a44"/><stop offset="0.538" stop-color="#9e1628"/><stop offset="0.711" stop-color="#9e0015"/><stop offset="0.997" stop-color="#9e0008"/></linearGradient><linearGradient id="hso53" gradientUnits="userSpaceOnUse" x1="1021" y1="0" x2="1662" y2="0"><stop offset="0.000" stop-color="#009e67"/><stop offset="0.229" stop-color="#029e82"/><stop offset="0.295" stop-color="#5e9e90"/><stop offset="0.332" stop-color="#9e9a96"/><stop offset="0.365" stop-color="#9e6a6f"/><stop offset="0.421" stop-color="#9e3e4b"/><stop offset="0.524" stop-color="#9e192c"/><stop offset="0.702" stop-color="#9e0016"/><stop offset="0.997" stop-color="#9e0009"/></linearGradient><linearGradient id="hso54" gradientUnits="userSpaceOnUse" x1="1021" y1="0" x2="1662" y2="0"><stop offset="0.000" stop-color="#009e6a"/><stop offset="0.229" stop-color="#019e87"/><stop offset="0.295" stop-color="#5e9e96"/><stop offset="0.332" stop-color="#9e999c"/><stop offset="0.365" stop-color="#9e6973"/><stop offset="0.421" stop-color="#9e3d4d"/><stop offset="0.524" stop-color="#9e182e"/><stop offset="0.697" stop-color="#9e0018"/><stop offset="0.997" stop-color="#9e0009"/></linearGradient><linearGradient id="hso55" gradientUnits="userSpaceOnUse" x1="1021" y1="0" x2="1662" y2="0"><stop offset="0.000" stop-color="#009e6c"/><stop offset="0.229" stop-color="#009e8b"/><stop offset="0.295" stop-color="#5e9e9b"/><stop offset="0.332" stop-color="#9b969e"/><stop offset="0.374" stop-color="#9e5f6e"/><stop offset="0.435" stop-color="#9e364a"/><stop offset="0.548" stop-color="#9e132b"/><stop offset="0.711" stop-color="#9e0018"/><stop offset="0.997" stop-color="#9e000a"/></linearGradient><linearGradient id="hso56" gradientUnits="userSpaceOnUse" x1="1021" y1="0" x2="1662" y2="0"><stop offset="0.000" stop-color="#009e6f"/><stop offset="0.229" stop-color="#009e90"/><stop offset="0.304" stop-color="#6b999e"/><stop offset="0.337" stop-color="#9e8f9e"/><stop offset="0.374" stop-color="#9e5f72"/><stop offset="0.435" stop-color="#9e354c"/><stop offset="0.548" stop-color="#9e122c"/><stop offset="0.707" stop-color="#9e0019"/><stop offset="0.997" stop-color="#9e000a"/></linearGradient><linearGradient id="hso57" gradientUnits="userSpaceOnUse" x1="1021" y1="0" x2="1662" y2="0"><stop offset="0.000" stop-color="#009e72"/><stop offset="0.229" stop-color="#009e94"/><stop offset="0.290" stop-color="#53989e"/><stop offset="0.342" stop-color="#9e879c"/><stop offset="0.384" stop-color="#9e556d"/><stop offset="0.454" stop-color="#9e2c47"/><stop offset="0.585" stop-color="#9e0b28"/><stop offset="0.721" stop-color="#9e0019"/><stop offset="0.997" stop-color="#9e000b"/></linearGradient><linearGradient id="hso58" gradientUnits="userSpaceOnUse" x1="1021" y1="0" x2="1662" y2="0"><stop offset="0.000" stop-color="#009e75"/><stop offset="0.229" stop-color="#009e99"/><stop offset="0.314" stop-color="#728c9e"/><stop offset="0.346" stop-color="#9e7f9a"/><stop offset="0.388" stop-color="#9e516d"/><stop offset="0.463" stop-color="#9e2846"/><stop offset="0.608" stop-color="#9e0726"/><stop offset="0.739" stop-color="#9e0018"/><stop offset="0.997" stop-color="#9e000c"/></linearGradient><linearGradient id="hso59" gradientUnits="userSpaceOnUse" x1="1021" y1="0" x2="1662" y2="0"><stop offset="0.000" stop-color="#009e78"/><stop offset="0.234" stop-color="#049d9e"/><stop offset="0.346" stop-color="#9e7e9e"/><stop offset="0.388" stop-color="#9e5070"/><stop offset="0.463" stop-color="#9e2848"/><stop offset="0.608" stop-color="#9e0727"/><stop offset="0.744" stop-color="#9e0019"/><stop offset="0.997" stop-color="#9e000c"/></linearGradient><linearGradient id="hso60" gradientUnits="userSpaceOnUse" x1="1021" y1="0" x2="1662" y2="0"><stop offset="0.000" stop-color="#009e7b"/><stop offset="0.225" stop-color="#009b9e"/><stop offset="0.239" stop-color="#09979e"/><stop offset="0.351" stop-color="#9e779c"/><stop offset="0.398" stop-color="#9e496c"/><stop offset="0.477" stop-color="#9e2245"/><stop offset="0.632" stop-color="#9e0325"/><stop offset="0.997" stop-color="#9e000d"/></linearGradient><linearGradient id="hso61" gradientUnits="userSpaceOnUse" x1="1021" y1="0" x2="1662" y2="0"><stop offset="0.000" stop-color="#009e7e"/><stop offset="0.211" stop-color="#009a9e"/><stop offset="0.234" stop-color="#02949e"/><stop offset="0.356" stop-color="#9e709a"/><stop offset="0.402" stop-color="#9e456c"/><stop offset="0.482" stop-color="#9e2045"/><stop offset="0.641" stop-color="#9e0225"/><stop offset="0.997" stop-color="#9e000d"/></linearGradient><linearGradient id="hso62" gradientUnits="userSpaceOnUse" x1="1021" y1="0" x2="1662" y2="0"><stop offset="0.000" stop-color="#009e81"/><stop offset="0.192" stop-color="#009a9e"/><stop offset="0.234" stop-color="#02909e"/><stop offset="0.356" stop-color="#9e6f9e"/><stop offset="0.402" stop-color="#9e446f"/><stop offset="0.482" stop-color="#9e2047"/><stop offset="0.637" stop-color="#9e0227"/><stop offset="0.997" stop-color="#9e000e"/></linearGradient><linearGradient id="hso63" gradientUnits="userSpaceOnUse" x1="1021" y1="0" x2="1662" y2="0"><stop offset="0.000" stop-color="#009e84"/><stop offset="0.173" stop-color="#009a9e"/><stop offset="0.234" stop-color="#018c9e"/><stop offset="0.360" stop-color="#9e699c"/><stop offset="0.407" stop-color="#9e406f"/><stop offset="0.491" stop-color="#9e1d46"/><stop offset="0.655" stop-color="#9e0026"/><stop offset="0.997" stop-color="#9e000f"/></linearGradient><linearGradient id="hso64" gradientUnits="userSpaceOnUse" x1="1021" y1="0" x2="1662" y2="0"><stop offset="0.000" stop-color="#009e87"/><stop offset="0.154" stop-color="#009a9e"/><stop offset="0.234" stop-color="#00889e"/><stop offset="0.365" stop-color="#9e639a"/><stop offset="0.417" stop-color="#9e3a6b"/><stop offset="0.505" stop-color="#9e1844"/><stop offset="0.665" stop-color="#9e0026"/><stop offset="0.997" stop-color="#9e000f"/></linearGradient><linearGradient id="hso65" gradientUnits="userSpaceOnUse" x1="1021" y1="0" x2="1662" y2="0"><stop offset="0.000" stop-color="#009e8a"/><stop offset="0.136" stop-color="#009a9e"/><stop offset="0.234" stop-color="#00849e"/><stop offset="0.365" stop-color="#9e629e"/><stop offset="0.417" stop-color="#9e3a6e"/><stop offset="0.505" stop-color="#9e1845"/><stop offset="0.665" stop-color="#9e0027"/><stop offset="0.997" stop-color="#9e0010"/></linearGradient><linearGradient id="hso66" gradientUnits="userSpaceOnUse" x1="1021" y1="0" x2="1662" y2="0"><stop offset="0.000" stop-color="#009e8d"/><stop offset="0.122" stop-color="#00999e"/><stop offset="0.234" stop-color="#00809e"/><stop offset="0.370" stop-color="#9e5d9d"/><stop offset="0.421" stop-color="#9e366e"/><stop offset="0.510" stop-color="#9e1646"/><stop offset="0.665" stop-color="#9e0028"/><stop offset="0.997" stop-color="#9e0010"/></linearGradient><linearGradient id="hso67" gradientUnits="userSpaceOnUse" x1="1021" y1="0" x2="1662" y2="0"><stop offset="0.000" stop-color="#009e90"/><stop offset="0.103" stop-color="#00999e"/><stop offset="0.239" stop-color="#047c9e"/><stop offset="0.374" stop-color="#9e579b"/><stop offset="0.426" stop-color="#9e336d"/><stop offset="0.515" stop-color="#9e1546"/><stop offset="0.665" stop-color="#9e0029"/><stop offset="0.997" stop-color="#9e0011"/></linearGradient><linearGradient id="hso68" gradientUnits="userSpaceOnUse" x1="1021" y1="0" x2="1662" y2="0"><stop offset="0.000" stop-color="#009e94"/><stop offset="0.089" stop-color="#00999e"/><stop offset="0.239" stop-color="#03799e"/><stop offset="0.374" stop-color="#9e569e"/><stop offset="0.431" stop-color="#9e306d"/><stop offset="0.524" stop-color="#9e1245"/><stop offset="0.669" stop-color="#9e0029"/><stop offset="0.997" stop-color="#9e0012"/></linearGradient><linearGradient id="hso69" gradientUnits="userSpaceOnUse" x1="1021" y1="0" x2="1662" y2="0"><stop offset="0.000" stop-color="#009e97"/><stop offset="0.084" stop-color="#00969e"/><stop offset="0.239" stop-color="#03759e"/><stop offset="0.379" stop-color="#9e529d"/><stop offset="0.435" stop-color="#9e2e6d"/><stop offset="0.529" stop-color="#9e1145"/><stop offset="0.665" stop-color="#9e002b"/><stop offset="0.997" stop-color="#9e0012"/></linearGradient><linearGradient id="hso70" gradientUnits="userSpaceOnUse" x1="1021" y1="0" x2="1662" y2="0"><stop offset="0.000" stop-color="#009e9a"/><stop offset="0.187" stop-color="#007e9e"/><stop offset="0.239" stop-color="#02729e"/><stop offset="0.384" stop-color="#9e4d9b"/><stop offset="0.440" stop-color="#9e2b6c"/><stop offset="0.538" stop-color="#9e0e45"/><stop offset="0.665" stop-color="#9e002c"/><stop offset="0.997" stop-color="#9e0013"/></linearGradient><linearGradient id="hso71" gradientUnits="userSpaceOnUse" x1="1021" y1="0" x2="1662" y2="0"><stop offset="0.000" stop-color="#009e9d"/><stop offset="0.239" stop-color="#026f9e"/><stop offset="0.384" stop-color="#9e4c9e"/><stop offset="0.440" stop-color="#9e2a6f"/><stop offset="0.538" stop-color="#9e0e46"/><stop offset="0.665" stop-color="#9e002d"/><stop offset="0.997" stop-color="#9e0013"/></linearGradient><linearGradient id="hso72" gradientUnits="userSpaceOnUse" x1="1021" y1="0" x2="1662" y2="0"><stop offset="0.000" stop-color="#009c9e"/><stop offset="0.239" stop-color="#016d9e"/><stop offset="0.388" stop-color="#9e489d"/><stop offset="0.445" stop-color="#9e286f"/><stop offset="0.543" stop-color="#9e0c47"/><stop offset="0.665" stop-color="#9e002e"/><stop offset="0.997" stop-color="#9e0014"/></linearGradient><linearGradient id="hso73" gradientUnits="userSpaceOnUse" x1="1021" y1="0" x2="1662" y2="0"><stop offset="0.000" stop-color="#00989e"/><stop offset="0.239" stop-color="#016a9e"/><stop offset="0.393" stop-color="#9e449b"/><stop offset="0.454" stop-color="#9e246c"/><stop offset="0.557" stop-color="#9e0944"/><stop offset="0.669" stop-color="#9e002f"/><stop offset="0.997" stop-color="#9e0015"/></linearGradient><linearGradient id="hso74" gradientUnits="userSpaceOnUse" x1="1021" y1="0" x2="1662" y2="0"><stop offset="0.000" stop-color="#00959e"/><stop offset="0.239" stop-color="#00679e"/><stop offset="0.393" stop-color="#9e439e"/><stop offset="0.454" stop-color="#9e236e"/><stop offset="0.557" stop-color="#9e0946"/><stop offset="0.669" stop-color="#9e0030"/><stop offset="0.997" stop-color="#9e0015"/></linearGradient><linearGradient id="hso75" gradientUnits="userSpaceOnUse" x1="1021" y1="0" x2="1662" y2="0"><stop offset="0.000" stop-color="#00929e"/><stop offset="0.243" stop-color="#04649e"/><stop offset="0.398" stop-color="#9e3f9d"/><stop offset="0.459" stop-color="#9e216e"/><stop offset="0.562" stop-color="#9e0846"/><stop offset="0.674" stop-color="#9e0031"/><stop offset="0.997" stop-color="#9e0016"/></linearGradient><linearGradient id="hso76" gradientUnits="userSpaceOnUse" x1="1021" y1="0" x2="1662" y2="0"><stop offset="0.000" stop-color="#008f9e"/><stop offset="0.243" stop-color="#03619e"/><stop offset="0.402" stop-color="#9e3b9b"/><stop offset="0.463" stop-color="#9e1f6d"/><stop offset="0.571" stop-color="#9e0645"/><stop offset="0.707" stop-color="#9e002d"/><stop offset="0.997" stop-color="#9e0017"/></linearGradient><linearGradient id="hso77" gradientUnits="userSpaceOnUse" x1="1021" y1="0" x2="1662" y2="0"><stop offset="0.000" stop-color="#008d9e"/><stop offset="0.243" stop-color="#035f9e"/><stop offset="0.402" stop-color="#9e3a9e"/><stop offset="0.468" stop-color="#9e1c6d"/><stop offset="0.576" stop-color="#9e0546"/><stop offset="0.786" stop-color="#9e0025"/><stop offset="0.997" stop-color="#9e0017"/></linearGradient><linearGradient id="hso78" gradientUnits="userSpaceOnUse" x1="1021" y1="0" x2="1662" y2="0"><stop offset="0.000" stop-color="#008a9e"/><stop offset="0.243" stop-color="#025c9e"/><stop offset="0.407" stop-color="#9e379d"/><stop offset="0.473" stop-color="#9e1a6d"/><stop offset="0.585" stop-color="#9e0345"/><stop offset="0.805" stop-color="#9e0025"/><stop offset="0.997" stop-color="#9e0018"/></linearGradient><linearGradient id="hso79" gradientUnits="userSpaceOnUse" x1="1021" y1="0" x2="1662" y2="0"><stop offset="0.000" stop-color="#00879e"/><stop offset="0.243" stop-color="#025a9e"/><stop offset="0.412" stop-color="#9e339c"/><stop offset="0.477" stop-color="#9e186d"/><stop offset="0.590" stop-color="#9e0245"/><stop offset="0.810" stop-color="#9e0025"/><stop offset="0.997" stop-color="#9e0018"/></linearGradient><linearGradient id="hso80" gradientUnits="userSpaceOnUse" x1="1021" y1="0" x2="1662" y2="0"><stop offset="0.000" stop-color="#00859e"/><stop offset="0.243" stop-color="#01589e"/><stop offset="0.417" stop-color="#9e309a"/><stop offset="0.482" stop-color="#9e176c"/><stop offset="0.599" stop-color="#9e0044"/><stop offset="0.828" stop-color="#9e0024"/><stop offset="0.997" stop-color="#9e0019"/></linearGradient><linearGradient id="hso81" gradientUnits="userSpaceOnUse" x1="1021" y1="0" x2="1662" y2="0"><stop offset="0.000" stop-color="#00829e"/><stop offset="0.243" stop-color="#01569e"/><stop offset="0.417" stop-color="#9e2f9d"/><stop offset="0.482" stop-color="#9e166e"/><stop offset="0.594" stop-color="#9e0047"/><stop offset="0.814" stop-color="#9e0026"/><stop offset="0.997" stop-color="#9e001a"/></linearGradient><linearGradient id="hso82" gradientUnits="userSpaceOnUse" x1="1021" y1="0" x2="1662" y2="0"><stop offset="0.000" stop-color="#00809e"/><stop offset="0.243" stop-color="#01549e"/><stop offset="0.421" stop-color="#9e2c9c"/><stop offset="0.491" stop-color="#9e136c"/><stop offset="0.613" stop-color="#9e0044"/><stop offset="0.852" stop-color="#9e0024"/><stop offset="0.997" stop-color="#9e001a"/></linearGradient><linearGradient id="hso83" gradientUnits="userSpaceOnUse" x1="1021" y1="0" x2="1662" y2="0"><stop offset="0.000" stop-color="#007d9e"/><stop offset="0.248" stop-color="#04519e"/><stop offset="0.426" stop-color="#9e299a"/><stop offset="0.496" stop-color="#9e116c"/><stop offset="0.618" stop-color="#9e0044"/><stop offset="0.856" stop-color="#9e0024"/><stop offset="0.997" stop-color="#9e001b"/></linearGradient><linearGradient id="hso84" gradientUnits="userSpaceOnUse" x1="1021" y1="0" x2="1662" y2="0"><stop offset="0.000" stop-color="#007b9e"/><stop offset="0.248" stop-color="#034f9e"/><stop offset="0.426" stop-color="#9e299d"/><stop offset="0.496" stop-color="#9e116e"/><stop offset="0.613" stop-color="#9e0047"/><stop offset="0.847" stop-color="#9e0026"/><stop offset="0.997" stop-color="#9e001c"/></linearGradient><linearGradient id="hso85" gradientUnits="userSpaceOnUse" x1="1021" y1="0" x2="1662" y2="0"><stop offset="0.000" stop-color="#00799e"/><stop offset="0.248" stop-color="#034d9e"/><stop offset="0.431" stop-color="#9e269c"/><stop offset="0.501" stop-color="#9e0f6d"/><stop offset="0.613" stop-color="#9e0048"/><stop offset="0.842" stop-color="#9e0027"/><stop offset="0.997" stop-color="#9e001c"/></linearGradient><linearGradient id="hso86" gradientUnits="userSpaceOnUse" x1="1021" y1="0" x2="1662" y2="0"><stop offset="0.000" stop-color="#00779e"/><stop offset="0.248" stop-color="#034b9e"/><stop offset="0.435" stop-color="#9e239b"/><stop offset="0.510" stop-color="#9e0c6b"/><stop offset="0.613" stop-color="#9e0049"/><stop offset="0.838" stop-color="#9e0028"/><stop offset="0.997" stop-color="#9e001d"/></linearGradient><linearGradient id="hso87" gradientUnits="userSpaceOnUse" x1="1021" y1="0" x2="1662" y2="0"><stop offset="0.000" stop-color="#00749e"/><stop offset="0.248" stop-color="#024a9e"/><stop offset="0.435" stop-color="#9e239d"/><stop offset="0.505" stop-color="#9e0d6f"/><stop offset="0.613" stop-color="#9e004b"/><stop offset="0.838" stop-color="#9e0029"/><stop offset="0.997" stop-color="#9e001d"/></linearGradient><linearGradient id="hso88" gradientUnits="userSpaceOnUse" x1="1021" y1="0" x2="1662" y2="0"><stop offset="0.000" stop-color="#00729e"/><stop offset="0.248" stop-color="#02489e"/><stop offset="0.440" stop-color="#9e209c"/><stop offset="0.515" stop-color="#9e0a6d"/><stop offset="0.613" stop-color="#9e004c"/><stop offset="0.833" stop-color="#9e002a"/><stop offset="0.997" stop-color="#9e001e"/></linearGradient><linearGradient id="hso89" gradientUnits="userSpaceOnUse" x1="1021" y1="0" x2="1662" y2="0"><stop offset="0.000" stop-color="#00709e"/><stop offset="0.248" stop-color="#01469e"/><stop offset="0.445" stop-color="#9e1e9b"/><stop offset="0.520" stop-color="#9e096d"/><stop offset="0.618" stop-color="#9e004c"/><stop offset="0.842" stop-color="#9e002a"/><stop offset="0.997" stop-color="#9e001f"/></linearGradient><linearGradient id="hso90" gradientUnits="userSpaceOnUse" x1="1021" y1="0" x2="1662" y2="0"><stop offset="0.000" stop-color="#006e9e"/><stop offset="0.248" stop-color="#01459e"/><stop offset="0.445" stop-color="#9e1d9d"/><stop offset="0.520" stop-color="#9e096e"/><stop offset="0.613" stop-color="#9e004f"/><stop offset="0.828" stop-color="#9e002c"/><stop offset="0.997" stop-color="#9e001f"/></linearGradient><linearGradient id="hso91" gradientUnits="userSpaceOnUse" x1="1021" y1="0" x2="1662" y2="0"><stop offset="0.000" stop-color="#006c9e"/><stop offset="0.253" stop-color="#04429e"/><stop offset="0.449" stop-color="#9e1b9c"/><stop offset="0.529" stop-color="#9e066c"/><stop offset="0.637" stop-color="#9e004a"/><stop offset="0.875" stop-color="#9e0029"/><stop offset="0.997" stop-color="#9e0020"/></linearGradient><linearGradient id="hso92" gradientUnits="userSpaceOnUse" x1="1021" y1="0" x2="1662" y2="0"><stop offset="0.000" stop-color="#006b9e"/><stop offset="0.253" stop-color="#04419e"/><stop offset="0.454" stop-color="#9e189b"/><stop offset="0.534" stop-color="#9e056c"/><stop offset="0.674" stop-color="#9e0044"/><stop offset="0.950" stop-color="#9e0024"/><stop offset="0.997" stop-color="#9e0021"/></linearGradient><linearGradient id="hso93" gradientUnits="userSpaceOnUse" x1="1021" y1="0" x2="1662" y2="0"><stop offset="0.000" stop-color="#00699e"/><stop offset="0.253" stop-color="#033f9e"/><stop offset="0.454" stop-color="#9e189e"/><stop offset="0.534" stop-color="#9e046e"/><stop offset="0.669" stop-color="#9e0046"/><stop offset="0.936" stop-color="#9e0025"/><stop offset="0.997" stop-color="#9e0021"/></linearGradient><linearGradient id="hso94" gradientUnits="userSpaceOnUse" x1="1021" y1="0" x2="1662" y2="0"><stop offset="0.000" stop-color="#00679e"/><stop offset="0.253" stop-color="#033e9e"/><stop offset="0.459" stop-color="#9e169c"/><stop offset="0.538" stop-color="#9e036e"/><stop offset="0.679" stop-color="#9e0045"/><stop offset="0.950" stop-color="#9e0025"/><stop offset="0.997" stop-color="#9e0022"/></linearGradient><linearGradient id="hso95" gradientUnits="userSpaceOnUse" x1="1021" y1="0" x2="1662" y2="0"><stop offset="0.000" stop-color="#00659e"/><stop offset="0.253" stop-color="#023c9e"/><stop offset="0.463" stop-color="#9e149b"/><stop offset="0.548" stop-color="#9e016b"/><stop offset="0.693" stop-color="#9e0044"/><stop offset="0.978" stop-color="#9e0024"/><stop offset="0.997" stop-color="#9e0023"/></linearGradient><linearGradient id="hso96" gradientUnits="userSpaceOnUse" x1="1021" y1="0" x2="1662" y2="0"><stop offset="0.000" stop-color="#00639e"/><stop offset="0.253" stop-color="#023b9e"/><stop offset="0.463" stop-color="#9e139e"/><stop offset="0.543" stop-color="#9e016f"/><stop offset="0.683" stop-color="#9e0047"/><stop offset="0.955" stop-color="#9e0026"/><stop offset="0.997" stop-color="#9e0023"/></linearGradient><linearGradient id="hso97" gradientUnits="userSpaceOnUse" x1="1021" y1="0" x2="1662" y2="0"><stop offset="0.000" stop-color="#00629e"/><stop offset="0.253" stop-color="#023a9e"/><stop offset="0.468" stop-color="#9e119c"/><stop offset="0.552" stop-color="#9e006d"/><stop offset="0.697" stop-color="#9e0045"/><stop offset="0.983" stop-color="#9e0025"/><stop offset="0.997" stop-color="#9e0024"/></linearGradient><linearGradient id="hso98" gradientUnits="userSpaceOnUse" x1="1021" y1="0" x2="1662" y2="0"><stop offset="0.000" stop-color="#00609e"/><stop offset="0.253" stop-color="#01389e"/><stop offset="0.473" stop-color="#9e0f9b"/><stop offset="0.557" stop-color="#9e006d"/><stop offset="0.707" stop-color="#9e0044"/><stop offset="0.997" stop-color="#9e0024"/></linearGradient><linearGradient id="hso99" gradientUnits="userSpaceOnUse" x1="1021" y1="0" x2="1662" y2="0"><stop offset="0.000" stop-color="#005f9e"/><stop offset="0.257" stop-color="#04369e"/><stop offset="0.477" stop-color="#9e0d9a"/><stop offset="0.566" stop-color="#9e006b"/><stop offset="0.721" stop-color="#9e0043"/><stop offset="0.997" stop-color="#9e0025"/></linearGradient><linearGradient id="hso100" gradientUnits="userSpaceOnUse" x1="1021" y1="0" x2="1662" y2="0"><stop offset="0.000" stop-color="#005d9e"/><stop offset="0.257" stop-color="#04359e"/><stop offset="0.477" stop-color="#9e0d9c"/><stop offset="0.566" stop-color="#9e006c"/><stop offset="0.716" stop-color="#9e0045"/><stop offset="0.997" stop-color="#9e0026"/></linearGradient><linearGradient id="hso101" gradientUnits="userSpaceOnUse" x1="1021" y1="0" x2="1662" y2="0"><stop offset="0.000" stop-color="#005b9e"/><stop offset="0.257" stop-color="#03349e"/><stop offset="0.482" stop-color="#9e0b9b"/><stop offset="0.566" stop-color="#9e006e"/><stop offset="0.716" stop-color="#9e0046"/><stop offset="0.997" stop-color="#9e0026"/></linearGradient><linearGradient id="hso102" gradientUnits="userSpaceOnUse" x1="1021" y1="0" x2="1662" y2="0"><stop offset="0.000" stop-color="#005a9e"/><stop offset="0.257" stop-color="#03339e"/><stop offset="0.487" stop-color="#9e099a"/><stop offset="0.566" stop-color="#9e0070"/><stop offset="0.716" stop-color="#9e0047"/><stop offset="0.997" stop-color="#9e0027"/></linearGradient><linearGradient id="hso103" gradientUnits="userSpaceOnUse" x1="1021" y1="0" x2="1662" y2="0"><stop offset="0.000" stop-color="#00589e"/><stop offset="0.257" stop-color="#03329e"/><stop offset="0.487" stop-color="#9e099d"/><stop offset="0.571" stop-color="#9e006f"/><stop offset="0.721" stop-color="#9e0047"/><stop offset="0.997" stop-color="#9e0028"/></linearGradient><linearGradient id="hso104" gradientUnits="userSpaceOnUse" x1="1021" y1="0" x2="1662" y2="0"><stop offset="0.000" stop-color="#00579e"/><stop offset="0.257" stop-color="#02309e"/><stop offset="0.491" stop-color="#9e079c"/><stop offset="0.576" stop-color="#9e006f"/><stop offset="0.730" stop-color="#9e0047"/><stop offset="0.997" stop-color="#9e0028"/></linearGradient><linearGradient id="hso105" gradientUnits="userSpaceOnUse" x1="1021" y1="0" x2="1662" y2="0"><stop offset="0.000" stop-color="#00569e"/><stop offset="0.257" stop-color="#022f9e"/><stop offset="0.496" stop-color="#9e059a"/><stop offset="0.590" stop-color="#9e006c"/><stop offset="0.754" stop-color="#9e0044"/><stop offset="0.997" stop-color="#9e0029"/></linearGradient><linearGradient id="hso106" gradientUnits="userSpaceOnUse" x1="1021" y1="0" x2="1662" y2="0"><stop offset="0.000" stop-color="#00549e"/><stop offset="0.257" stop-color="#022e9e"/><stop offset="0.496" stop-color="#9e059d"/><stop offset="0.590" stop-color="#9e006d"/><stop offset="0.749" stop-color="#9e0045"/><stop offset="0.997" stop-color="#9e002a"/></linearGradient><linearGradient id="hso107" gradientUnits="userSpaceOnUse" x1="1021" y1="0" x2="1662" y2="0"><stop offset="0.000" stop-color="#00539e"/><stop offset="0.262" stop-color="#042d9e"/><stop offset="0.501" stop-color="#9e039c"/><stop offset="0.594" stop-color="#9e006d"/><stop offset="0.758" stop-color="#9e0045"/><stop offset="0.997" stop-color="#9e002a"/></linearGradient><linearGradient id="hso108" gradientUnits="userSpaceOnUse" x1="1021" y1="0" x2="1662" y2="0"><stop offset="0.000" stop-color="#00529e"/><stop offset="0.262" stop-color="#042c9e"/><stop offset="0.505" stop-color="#9e029b"/><stop offset="0.604" stop-color="#9e006b"/><stop offset="0.772" stop-color="#9e0044"/><stop offset="0.997" stop-color="#9e002b"/></linearGradient><linearGradient id="hso109" gradientUnits="userSpaceOnUse" x1="1021" y1="0" x2="1662" y2="0"><stop offset="0.000" stop-color="#00509e"/><stop offset="0.262" stop-color="#032b9e"/><stop offset="0.505" stop-color="#9e019d"/><stop offset="0.604" stop-color="#9e006d"/><stop offset="0.772" stop-color="#9e0045"/><stop offset="0.997" stop-color="#9e002c"/></linearGradient><linearGradient id="hso110" gradientUnits="userSpaceOnUse" x1="1021" y1="0" x2="1662" y2="0"><stop offset="0.000" stop-color="#004f9e"/><stop offset="0.262" stop-color="#032a9e"/><stop offset="0.510" stop-color="#9e009c"/><stop offset="0.608" stop-color="#9e006c"/><stop offset="0.777" stop-color="#9e0045"/><stop offset="0.997" stop-color="#9e002c"/></linearGradient><linearGradient id="hso111" gradientUnits="userSpaceOnUse" x1="1021" y1="0" x2="1662" y2="0"><stop offset="0.000" stop-color="#004e9e"/><stop offset="0.262" stop-color="#03299e"/><stop offset="0.515" stop-color="#9e009b"/><stop offset="0.613" stop-color="#9e006c"/><stop offset="0.786" stop-color="#9e0044"/><stop offset="0.997" stop-color="#9e002d"/></linearGradient><linearGradient id="hso112" gradientUnits="userSpaceOnUse" x1="1021" y1="0" x2="1662" y2="0"><stop offset="0.000" stop-color="#004d9e"/><stop offset="0.262" stop-color="#02289e"/><stop offset="0.515" stop-color="#9e009d"/><stop offset="0.613" stop-color="#9e006e"/><stop offset="0.782" stop-color="#9e0046"/><stop offset="0.997" stop-color="#9e002e"/></linearGradient><linearGradient id="hso113" gradientUnits="userSpaceOnUse" x1="1021" y1="0" x2="1662" y2="0"><stop offset="0.000" stop-color="#004b9e"/><stop offset="0.262" stop-color="#02279e"/><stop offset="0.520" stop-color="#9e009c"/><stop offset="0.622" stop-color="#9e006c"/><stop offset="0.800" stop-color="#9e0044"/><stop offset="0.997" stop-color="#9e002e"/></linearGradient><linearGradient id="hso114" gradientUnits="userSpaceOnUse" x1="1021" y1="0" x2="1662" y2="0"><stop offset="0.000" stop-color="#004a9e"/><stop offset="0.262" stop-color="#02269e"/><stop offset="0.524" stop-color="#9e009b"/><stop offset="0.627" stop-color="#9e006c"/><stop offset="0.805" stop-color="#9e0044"/><stop offset="0.997" stop-color="#9e002f"/></linearGradient><linearGradient id="hso115" gradientUnits="userSpaceOnUse" x1="1021" y1="0" x2="1662" y2="0"><stop offset="0.000" stop-color="#00499e"/><stop offset="0.267" stop-color="#04249e"/><stop offset="0.520" stop-color="#9c009e"/><stop offset="0.637" stop-color="#9e006a"/><stop offset="0.824" stop-color="#9e0042"/><stop offset="0.997" stop-color="#9e0030"/></linearGradient><linearGradient id="hso116" gradientUnits="userSpaceOnUse" x1="1021" y1="0" x2="1662" y2="0"><stop offset="0.000" stop-color="#00489e"/><stop offset="0.267" stop-color="#04239e"/><stop offset="0.520" stop-color="#9a009e"/><stop offset="0.651" stop-color="#9e0067"/><stop offset="0.847" stop-color="#9e0040"/><stop offset="0.997" stop-color="#9e0030"/></linearGradient><linearGradient id="hso117" gradientUnits="userSpaceOnUse" x1="1021" y1="0" x2="1662" y2="0"><stop offset="0.000" stop-color="#00479e"/><stop offset="0.267" stop-color="#03239e"/><stop offset="0.515" stop-color="#95009e"/><stop offset="0.538" stop-color="#9e0098"/><stop offset="0.646" stop-color="#9e006a"/><stop offset="0.833" stop-color="#9e0043"/><stop offset="0.997" stop-color="#9e0031"/></linearGradient><linearGradient id="hso118" gradientUnits="userSpaceOnUse" x1="1021" y1="0" x2="1662" y2="0"><stop offset="0.000" stop-color="#00469e"/><stop offset="0.267" stop-color="#03229e"/><stop offset="0.510" stop-color="#90009e"/><stop offset="0.543" stop-color="#9e0097"/><stop offset="0.655" stop-color="#9e0068"/><stop offset="0.852" stop-color="#9e0041"/><stop offset="0.997" stop-color="#9e0031"/></linearGradient><linearGradient id="hso119" gradientUnits="userSpaceOnUse" x1="1021" y1="0" x2="1662" y2="0"><stop offset="0.000" stop-color="#00459e"/><stop offset="0.267" stop-color="#03219e"/><stop offset="0.510" stop-color="#8f009e"/><stop offset="0.543" stop-color="#9e0099"/><stop offset="0.655" stop-color="#9e006a"/><stop offset="0.847" stop-color="#9e0042"/><stop offset="0.997" stop-color="#9e0032"/></linearGradient><linearGradient id="hso120" gradientUnits="userSpaceOnUse" x1="1021" y1="0" x2="1662" y2="0"><stop offset="0.000" stop-color="#00449e"/><stop offset="0.267" stop-color="#03209e"/><stop offset="0.505" stop-color="#8a009e"/><stop offset="0.543" stop-color="#9e009b"/><stop offset="0.651" stop-color="#9e006c"/><stop offset="0.838" stop-color="#9e0045"/><stop offset="0.997" stop-color="#9e0033"/></linearGradient><linearGradient id="hso121" gradientUnits="userSpaceOnUse" x1="1021" y1="0" x2="1662" y2="0"><stop offset="0.000" stop-color="#00439e"/><stop offset="0.267" stop-color="#021f9e"/><stop offset="0.505" stop-color="#88009e"/><stop offset="0.548" stop-color="#9e009a"/><stop offset="0.660" stop-color="#9e006b"/><stop offset="0.856" stop-color="#9e0043"/><stop offset="0.997" stop-color="#9e0033"/></linearGradient><linearGradient id="hso122" gradientUnits="userSpaceOnUse" x1="1021" y1="0" x2="1662" y2="0"><stop offset="0.000" stop-color="#00429e"/><stop offset="0.267" stop-color="#021f9e"/><stop offset="0.501" stop-color="#84009e"/><stop offset="0.552" stop-color="#9e0099"/><stop offset="0.665" stop-color="#9e006b"/><stop offset="0.861" stop-color="#9e0043"/><stop offset="0.997" stop-color="#9e0034"/></linearGradient><linearGradient id="hso123" gradientUnits="userSpaceOnUse" x1="1021" y1="0" x2="1662" y2="0"><stop offset="0.000" stop-color="#00419e"/><stop offset="0.271" stop-color="#041d9e"/><stop offset="0.501" stop-color="#82009e"/><stop offset="0.552" stop-color="#9e009b"/><stop offset="0.665" stop-color="#9e006c"/><stop offset="0.861" stop-color="#9e0044"/><stop offset="0.997" stop-color="#9e0035"/></linearGradient><linearGradient id="hso124" gradientUnits="userSpaceOnUse" x1="1021" y1="0" x2="1662" y2="0"><stop offset="0.000" stop-color="#00409e"/><stop offset="0.271" stop-color="#041d9e"/><stop offset="0.496" stop-color="#7e009e"/><stop offset="0.557" stop-color="#9e009a"/><stop offset="0.669" stop-color="#9e006c"/><stop offset="0.866" stop-color="#9e0044"/><stop offset="0.997" stop-color="#9e0035"/></linearGradient><linearGradient id="hso125" gradientUnits="userSpaceOnUse" x1="1021" y1="0" x2="1662" y2="0"><stop offset="0.000" stop-color="#003f9e"/><stop offset="0.271" stop-color="#041c9e"/><stop offset="0.491" stop-color="#7a009e"/><stop offset="0.562" stop-color="#9e009a"/><stop offset="0.679" stop-color="#9e006a"/><stop offset="0.880" stop-color="#9e0043"/><stop offset="0.997" stop-color="#9e0036"/></linearGradient><linearGradient id="hso126" gradientUnits="userSpaceOnUse" x1="1021" y1="0" x2="1662" y2="0"><stop offset="0.000" stop-color="#003e9e"/><stop offset="0.271" stop-color="#031b9e"/><stop offset="0.491" stop-color="#78009e"/><stop offset="0.562" stop-color="#9e009b"/><stop offset="0.679" stop-color="#9e006c"/><stop offset="0.880" stop-color="#9e0044"/><stop offset="0.997" stop-color="#9e0037"/></linearGradient><linearGradient id="hso127" gradientUnits="userSpaceOnUse" x1="1021" y1="0" x2="1662" y2="0"><stop offset="0.000" stop-color="#003d9e"/><stop offset="0.271" stop-color="#031a9e"/><stop offset="0.487" stop-color="#74009e"/><stop offset="0.566" stop-color="#9e009b"/><stop offset="0.683" stop-color="#9e006b"/><stop offset="0.889" stop-color="#9e0043"/><stop offset="0.997" stop-color="#9e0037"/></linearGradient><linearGradient id="hso128" gradientUnits="userSpaceOnUse" x1="1021" y1="0" x2="1662" y2="0"><stop offset="0.000" stop-color="#003c9e"/><stop offset="0.271" stop-color="#031a9e"/><stop offset="0.487" stop-color="#73009e"/><stop offset="0.571" stop-color="#9e009a"/><stop offset="0.693" stop-color="#9e006a"/><stop offset="0.903" stop-color="#9e0042"/><stop offset="0.997" stop-color="#9e0038"/></linearGradient><linearGradient id="hso129" gradientUnits="userSpaceOnUse" x1="1021" y1="0" x2="1662" y2="0"><stop offset="0.000" stop-color="#003b9e"/><stop offset="0.271" stop-color="#02199e"/><stop offset="0.482" stop-color="#6f009e"/><stop offset="0.571" stop-color="#9e009b"/><stop offset="0.688" stop-color="#9e006d"/><stop offset="0.894" stop-color="#9e0044"/><stop offset="0.997" stop-color="#9e0039"/></linearGradient><linearGradient id="hso130" gradientUnits="userSpaceOnUse" x1="1021" y1="0" x2="1662" y2="0"><stop offset="0.000" stop-color="#003a9e"/><stop offset="0.271" stop-color="#02199e"/><stop offset="0.482" stop-color="#6e009e"/><stop offset="0.576" stop-color="#9e009b"/><stop offset="0.697" stop-color="#9e006b"/><stop offset="0.908" stop-color="#9e0043"/><stop offset="0.997" stop-color="#9e0039"/></linearGradient><linearGradient id="hso131" gradientUnits="userSpaceOnUse" x1="1021" y1="0" x2="1662" y2="0"><stop offset="0.000" stop-color="#00399e"/><stop offset="0.276" stop-color="#04179e"/><stop offset="0.477" stop-color="#6a009e"/><stop offset="0.580" stop-color="#9e009a"/><stop offset="0.702" stop-color="#9e006b"/><stop offset="0.913" stop-color="#9e0044"/><stop offset="0.997" stop-color="#9e003a"/></linearGradient><linearGradient id="hso132" gradientUnits="userSpaceOnUse" x1="1021" y1="0" x2="1662" y2="0"><stop offset="0.000" stop-color="#00389e"/><stop offset="0.276" stop-color="#04179e"/><stop offset="0.477" stop-color="#69009e"/><stop offset="0.580" stop-color="#9e009c"/><stop offset="0.702" stop-color="#9e006c"/><stop offset="0.913" stop-color="#9e0044"/><stop offset="0.997" stop-color="#9e003b"/></linearGradient><linearGradient id="hso133" gradientUnits="userSpaceOnUse" x1="1021" y1="0" x2="1662" y2="0"><stop offset="0.000" stop-color="#00379e"/><stop offset="0.276" stop-color="#04169e"/><stop offset="0.473" stop-color="#65009e"/><stop offset="0.585" stop-color="#9e009b"/><stop offset="0.707" stop-color="#9e006c"/><stop offset="0.922" stop-color="#9e0044"/><stop offset="0.997" stop-color="#9e003b"/></linearGradient><linearGradient id="hso134" gradientUnits="userSpaceOnUse" x1="1021" y1="0" x2="1662" y2="0"><stop offset="0.000" stop-color="#00379e"/><stop offset="0.276" stop-color="#03159e"/><stop offset="0.468" stop-color="#61009e"/><stop offset="0.590" stop-color="#9e009a"/><stop offset="0.716" stop-color="#9e006b"/><stop offset="0.936" stop-color="#9e0043"/><stop offset="0.997" stop-color="#9e003c"/></linearGradient><linearGradient id="hso135" gradientUnits="userSpaceOnUse" x1="1021" y1="0" x2="1662" y2="0"><stop offset="0.000" stop-color="#00369e"/><stop offset="0.276" stop-color="#03159e"/><stop offset="0.468" stop-color="#60009e"/><stop offset="0.590" stop-color="#9e009c"/><stop offset="0.716" stop-color="#9e006c"/><stop offset="0.931" stop-color="#9e0044"/><stop offset="0.997" stop-color="#9e003d"/></linearGradient><linearGradient id="hso136" gradientUnits="userSpaceOnUse" x1="1021" y1="0" x2="1662" y2="0"><stop offset="0.000" stop-color="#00359e"/><stop offset="0.276" stop-color="#03149e"/><stop offset="0.468" stop-color="#5f009e"/><stop offset="0.594" stop-color="#9e009b"/><stop offset="0.721" stop-color="#9e006c"/><stop offset="0.941" stop-color="#9e0044"/><stop offset="0.997" stop-color="#9e003d"/></linearGradient><linearGradient id="hso137" gradientUnits="userSpaceOnUse" x1="1021" y1="0" x2="1662" y2="0"><stop offset="0.000" stop-color="#00349e"/><stop offset="0.276" stop-color="#03149e"/><stop offset="0.463" stop-color="#5c009e"/><stop offset="0.599" stop-color="#9e009a"/><stop offset="0.725" stop-color="#9e006b"/><stop offset="0.945" stop-color="#9e0044"/><stop offset="0.997" stop-color="#9e003e"/></linearGradient><linearGradient id="hso138" gradientUnits="userSpaceOnUse" x1="1021" y1="0" x2="1662" y2="0"><stop offset="0.000" stop-color="#00339e"/><stop offset="0.276" stop-color="#02139e"/><stop offset="0.459" stop-color="#58009e"/><stop offset="0.599" stop-color="#9e009c"/><stop offset="0.725" stop-color="#9e006d"/><stop offset="0.945" stop-color="#9e0045"/><stop offset="0.997" stop-color="#9e003f"/></linearGradient><linearGradient id="hso139" gradientUnits="userSpaceOnUse" x1="1021" y1="0" x2="1662" y2="0"><stop offset="0.000" stop-color="#00339e"/><stop offset="0.281" stop-color="#04129e"/><stop offset="0.459" stop-color="#57009e"/><stop offset="0.604" stop-color="#9e009b"/><stop offset="0.735" stop-color="#9e006b"/><stop offset="0.959" stop-color="#9e0044"/><stop offset="0.997" stop-color="#9e0040"/></linearGradient><linearGradient id="hso140" gradientUnits="userSpaceOnUse" x1="1021" y1="0" x2="1662" y2="0"><stop offset="0.000" stop-color="#00329e"/><stop offset="0.281" stop-color="#04119e"/><stop offset="0.454" stop-color="#54009e"/><stop offset="0.608" stop-color="#9e009a"/><stop offset="0.739" stop-color="#9e006b"/><stop offset="0.969" stop-color="#9e0043"/><stop offset="0.997" stop-color="#9e0040"/></linearGradient><linearGradient id="hso141" gradientUnits="userSpaceOnUse" x1="1021" y1="0" x2="1662" y2="0"><stop offset="0.000" stop-color="#00319e"/><stop offset="0.281" stop-color="#04119e"/><stop offset="0.454" stop-color="#53009e"/><stop offset="0.608" stop-color="#9e009c"/><stop offset="0.739" stop-color="#9e006c"/><stop offset="0.964" stop-color="#9e0045"/><stop offset="0.997" stop-color="#9e0041"/></linearGradient><linearGradient id="hso142" gradientUnits="userSpaceOnUse" x1="1021" y1="0" x2="1662" y2="0"><stop offset="0.000" stop-color="#00309e"/><stop offset="0.281" stop-color="#03109e"/><stop offset="0.454" stop-color="#52009e"/><stop offset="0.613" stop-color="#9e009b"/><stop offset="0.744" stop-color="#9e006c"/><stop offset="0.973" stop-color="#9e0044"/><stop offset="0.997" stop-color="#9e0042"/></linearGradient><linearGradient id="hso143" gradientUnits="userSpaceOnUse" x1="1021" y1="0" x2="1662" y2="0"><stop offset="0.000" stop-color="#00309e"/><stop offset="0.281" stop-color="#03109e"/><stop offset="0.449" stop-color="#4f009e"/><stop offset="0.618" stop-color="#9e009a"/><stop offset="0.754" stop-color="#9e006b"/><stop offset="0.988" stop-color="#9e0043"/><stop offset="0.997" stop-color="#9e0042"/></linearGradient><linearGradient id="hso144" gradientUnits="userSpaceOnUse" x1="1021" y1="0" x2="1662" y2="0"><stop offset="0.000" stop-color="#002f9e"/><stop offset="0.281" stop-color="#030f9e"/><stop offset="0.449" stop-color="#4e009e"/><stop offset="0.618" stop-color="#9e009c"/><stop offset="0.754" stop-color="#9e006c"/><stop offset="0.988" stop-color="#9e0044"/><stop offset="0.997" stop-color="#9e0043"/></linearGradient><linearGradient id="hso145" gradientUnits="userSpaceOnUse" x1="1021" y1="0" x2="1662" y2="0"><stop offset="0.000" stop-color="#002e9e"/><stop offset="0.281" stop-color="#030f9e"/><stop offset="0.445" stop-color="#4b009e"/><stop offset="0.622" stop-color="#9e009b"/><stop offset="0.758" stop-color="#9e006c"/><stop offset="0.992" stop-color="#9e0044"/><stop offset="0.997" stop-color="#9e0044"/></linearGradient><linearGradient id="hso146" gradientUnits="userSpaceOnUse" x1="1021" y1="0" x2="1662" y2="0"><stop offset="0.000" stop-color="#002e9e"/><stop offset="0.281" stop-color="#020e9e"/><stop offset="0.445" stop-color="#4a009e"/><stop offset="0.627" stop-color="#9e009a"/><stop offset="0.763" stop-color="#9e006c"/><stop offset="0.997" stop-color="#9e0044"/></linearGradient><linearGradient id="hso147" gradientUnits="userSpaceOnUse" x1="1021" y1="0" x2="1662" y2="0"><stop offset="0.000" stop-color="#002d9e"/><stop offset="0.285" stop-color="#040d9e"/><stop offset="0.445" stop-color="#4a009e"/><stop offset="0.627" stop-color="#9e009c"/><stop offset="0.763" stop-color="#9e006d"/><stop offset="0.997" stop-color="#9e0045"/></linearGradient><linearGradient id="hso148" gradientUnits="userSpaceOnUse" x1="1021" y1="0" x2="1662" y2="0"><stop offset="0.000" stop-color="#002c9e"/><stop offset="0.285" stop-color="#040d9e"/><stop offset="0.440" stop-color="#47009e"/><stop offset="0.632" stop-color="#9e009b"/><stop offset="0.772" stop-color="#9e006b"/><stop offset="0.997" stop-color="#9e0046"/></linearGradient><linearGradient id="hso149" gradientUnits="userSpaceOnUse" x1="1021" y1="0" x2="1662" y2="0"><stop offset="0.000" stop-color="#002c9e"/><stop offset="0.285" stop-color="#040c9e"/><stop offset="0.440" stop-color="#46009e"/><stop offset="0.637" stop-color="#9e009b"/><stop offset="0.777" stop-color="#9e006b"/><stop offset="0.997" stop-color="#9e0046"/></linearGradient><linearGradient id="hso150" gradientUnits="userSpaceOnUse" x1="1021" y1="0" x2="1662" y2="0"><stop offset="0.000" stop-color="#002b9e"/><stop offset="0.285" stop-color="#030c9e"/><stop offset="0.435" stop-color="#43009e"/><stop offset="0.641" stop-color="#9e009a"/><stop offset="0.786" stop-color="#9e006a"/><stop offset="0.997" stop-color="#9e0047"/></linearGradient><linearGradient id="hso151" gradientUnits="userSpaceOnUse" x1="1021" y1="0" x2="1662" y2="0"><stop offset="0.000" stop-color="#002a9e"/><stop offset="0.285" stop-color="#030c9e"/><stop offset="0.435" stop-color="#42009e"/><stop offset="0.641" stop-color="#9e009b"/><stop offset="0.782" stop-color="#9e006c"/><stop offset="0.997" stop-color="#9e0048"/></linearGradient><linearGradient id="hso152" gradientUnits="userSpaceOnUse" x1="1021" y1="0" x2="1662" y2="0"><stop offset="0.000" stop-color="#002a9e"/><stop offset="0.285" stop-color="#030b9e"/><stop offset="0.435" stop-color="#42009e"/><stop offset="0.646" stop-color="#9e009b"/><stop offset="0.791" stop-color="#9e006b"/><stop offset="0.997" stop-color="#9e0048"/></linearGradient><linearGradient id="hso153" gradientUnits="userSpaceOnUse" x1="1021" y1="0" x2="1662" y2="0"><stop offset="0.000" stop-color="#00299e"/><stop offset="0.285" stop-color="#030b9e"/><stop offset="0.435" stop-color="#41009e"/><stop offset="0.651" stop-color="#9e009a"/><stop offset="0.796" stop-color="#9e006b"/><stop offset="0.997" stop-color="#9e0049"/></linearGradient><linearGradient id="hso154" gradientUnits="userSpaceOnUse" x1="1021" y1="0" x2="1662" y2="0"><stop offset="0.000" stop-color="#00289e"/><stop offset="0.285" stop-color="#030a9e"/><stop offset="0.431" stop-color="#3e009e"/><stop offset="0.651" stop-color="#9e009b"/><stop offset="0.796" stop-color="#9e006c"/><stop offset="0.997" stop-color="#9e004a"/></linearGradient><linearGradient id="hso155" gradientUnits="userSpaceOnUse" x1="1021" y1="0" x2="1662" y2="0"><stop offset="0.000" stop-color="#00289e"/><stop offset="0.290" stop-color="#04099e"/><stop offset="0.431" stop-color="#3e009e"/><stop offset="0.655" stop-color="#9e009b"/><stop offset="0.800" stop-color="#9e006c"/><stop offset="0.997" stop-color="#9e004b"/></linearGradient><linearGradient id="hso156" gradientUnits="userSpaceOnUse" x1="1021" y1="0" x2="1662" y2="0"><stop offset="0.000" stop-color="#00279e"/><stop offset="0.290" stop-color="#04099e"/><stop offset="0.435" stop-color="#3f009e"/><stop offset="0.660" stop-color="#9e009a"/><stop offset="0.810" stop-color="#9e006b"/><stop offset="0.997" stop-color="#9e004b"/></linearGradient><linearGradient id="hso157" gradientUnits="userSpaceOnUse" x1="1021" y1="0" x2="1662" y2="0"><stop offset="0.000" stop-color="#00279e"/><stop offset="0.290" stop-color="#04089e"/><stop offset="0.431" stop-color="#3c009e"/><stop offset="0.660" stop-color="#9e009c"/><stop offset="0.810" stop-color="#9e006c"/><stop offset="0.997" stop-color="#9e004c"/></linearGradient><linearGradient id="hso158" gradientUnits="userSpaceOnUse" x1="1021" y1="0" x2="1662" y2="0"><stop offset="0.000" stop-color="#00269e"/><stop offset="0.290" stop-color="#03089e"/><stop offset="0.435" stop-color="#3e009e"/><stop offset="0.665" stop-color="#9e009b"/><stop offset="0.814" stop-color="#9e006c"/><stop offset="0.997" stop-color="#9e004d"/></linearGradient><linearGradient id="hso159" gradientUnits="userSpaceOnUse" x1="1021" y1="0" x2="1662" y2="0"><stop offset="0.000" stop-color="#00269e"/><stop offset="0.290" stop-color="#03089e"/><stop offset="0.435" stop-color="#3d009e"/><stop offset="0.669" stop-color="#9e009a"/><stop offset="0.819" stop-color="#9e006b"/><stop offset="0.997" stop-color="#9e004d"/></linearGradient><linearGradient id="hso160" gradientUnits="userSpaceOnUse" x1="1021" y1="0" x2="1662" y2="0"><stop offset="0.000" stop-color="#00259e"/><stop offset="0.290" stop-color="#03079e"/><stop offset="0.435" stop-color="#3c009e"/><stop offset="0.669" stop-color="#9e009c"/><stop offset="0.819" stop-color="#9e006c"/><stop offset="0.997" stop-color="#9e004e"/></linearGradient><linearGradient id="hso161" gradientUnits="userSpaceOnUse" x1="1021" y1="0" x2="1662" y2="0"><stop offset="0.000" stop-color="#00249e"/><stop offset="0.290" stop-color="#03079e"/><stop offset="0.445" stop-color="#3f009e"/><stop offset="0.674" stop-color="#9e009b"/><stop offset="0.828" stop-color="#9e006b"/><stop offset="0.997" stop-color="#9e004f"/></linearGradient><linearGradient id="hso162" gradientUnits="userSpaceOnUse" x1="1021" y1="0" x2="1662" y2="0"><stop offset="0.000" stop-color="#00249e"/><stop offset="0.290" stop-color="#03069e"/><stop offset="0.445" stop-color="#3f009e"/><stop offset="0.679" stop-color="#9e009a"/><stop offset="0.833" stop-color="#9e006b"/><stop offset="0.997" stop-color="#9e004f"/></linearGradient><linearGradient id="hso163" gradientUnits="userSpaceOnUse" x1="1021" y1="0" x2="1662" y2="0"><stop offset="0.000" stop-color="#00239e"/><stop offset="0.295" stop-color="#04069e"/><stop offset="0.477" stop-color="#4b009e"/><stop offset="0.679" stop-color="#9e009c"/><stop offset="0.833" stop-color="#9e006c"/><stop offset="0.997" stop-color="#9e0050"/></linearGradient><linearGradient id="hso164" gradientUnits="userSpaceOnUse" x1="1021" y1="0" x2="1662" y2="0"><stop offset="0.000" stop-color="#00239e"/><stop offset="0.295" stop-color="#04059e"/><stop offset="0.510" stop-color="#58009e"/><stop offset="0.683" stop-color="#9e009b"/><stop offset="0.838" stop-color="#9e006c"/><stop offset="0.997" stop-color="#9e0051"/></linearGradient><linearGradient id="hso165" gradientUnits="userSpaceOnUse" x1="1021" y1="0" x2="1662" y2="0"><stop offset="0.000" stop-color="#00229e"/><stop offset="0.295" stop-color="#04059e"/><stop offset="0.552" stop-color="#68009e"/><stop offset="0.688" stop-color="#9e009a"/><stop offset="0.847" stop-color="#9e006b"/><stop offset="0.997" stop-color="#9e0051"/></linearGradient><linearGradient id="hso166" gradientUnits="userSpaceOnUse" x1="1021" y1="0" x2="1662" y2="0"><stop offset="0.000" stop-color="#00229e"/><stop offset="0.295" stop-color="#04059e"/><stop offset="0.688" stop-color="#9e009c"/><stop offset="0.847" stop-color="#9e006c"/><stop offset="0.997" stop-color="#9e0052"/></linearGradient><linearGradient id="hso167" gradientUnits="userSpaceOnUse" x1="1021" y1="0" x2="1662" y2="0"><stop offset="0.000" stop-color="#00219e"/><stop offset="0.295" stop-color="#03049e"/><stop offset="0.693" stop-color="#9e009b"/><stop offset="0.852" stop-color="#9e006c"/><stop offset="0.997" stop-color="#9e0053"/></linearGradient><linearGradient id="hso168" gradientUnits="userSpaceOnUse" x1="1021" y1="0" x2="1662" y2="0"><stop offset="0.000" stop-color="#00219e"/><stop offset="0.295" stop-color="#03049e"/><stop offset="0.697" stop-color="#9e009b"/><stop offset="0.856" stop-color="#9e006c"/><stop offset="0.997" stop-color="#9e0054"/></linearGradient><linearGradient id="hso169" gradientUnits="userSpaceOnUse" x1="1021" y1="0" x2="1662" y2="0"><stop offset="0.000" stop-color="#00209e"/><stop offset="0.295" stop-color="#03039e"/><stop offset="0.697" stop-color="#9e009c"/><stop offset="0.856" stop-color="#9e006c"/><stop offset="0.997" stop-color="#9e0054"/></linearGradient><linearGradient id="hso170" gradientUnits="userSpaceOnUse" x1="1021" y1="0" x2="1662" y2="0"><stop offset="0.000" stop-color="#00209e"/><stop offset="0.295" stop-color="#03039e"/><stop offset="0.702" stop-color="#9e009b"/><stop offset="0.866" stop-color="#9e006b"/><stop offset="0.997" stop-color="#9e0055"/></linearGradient><linearGradient id="hso171" gradientUnits="userSpaceOnUse" x1="1021" y1="0" x2="1662" y2="0"><stop offset="0.000" stop-color="#001f9e"/><stop offset="0.300" stop-color="#04029e"/><stop offset="0.707" stop-color="#9e009b"/><stop offset="0.871" stop-color="#9e006b"/><stop offset="0.997" stop-color="#9e0056"/></linearGradient><linearGradient id="hso172" gradientUnits="userSpaceOnUse" x1="1021" y1="0" x2="1662" y2="0"><stop offset="0.000" stop-color="#001f9e"/><stop offset="0.300" stop-color="#04029e"/><stop offset="0.711" stop-color="#9e009a"/><stop offset="0.880" stop-color="#9e006a"/><stop offset="0.997" stop-color="#9e0056"/></linearGradient><linearGradient id="hso173" gradientUnits="userSpaceOnUse" x1="1021" y1="0" x2="1662" y2="0"><stop offset="0.000" stop-color="#001e9e"/><stop offset="0.300" stop-color="#04029e"/><stop offset="0.711" stop-color="#9e009b"/><stop offset="0.875" stop-color="#9e006c"/><stop offset="0.997" stop-color="#9e0057"/></linearGradient><linearGradient id="hso174" gradientUnits="userSpaceOnUse" x1="1021" y1="0" x2="1662" y2="0"><stop offset="0.000" stop-color="#001e9e"/><stop offset="0.300" stop-color="#04019e"/><stop offset="0.716" stop-color="#9e009b"/><stop offset="0.885" stop-color="#9e006b"/><stop offset="0.997" stop-color="#9e0058"/></linearGradient><linearGradient id="hso175" gradientUnits="userSpaceOnUse" x1="1021" y1="0" x2="1662" y2="0"><stop offset="0.000" stop-color="#001d9e"/><stop offset="0.300" stop-color="#03019e"/><stop offset="0.721" stop-color="#9e009a"/><stop offset="0.889" stop-color="#9e006b"/><stop offset="0.997" stop-color="#9e0059"/></linearGradient><linearGradient id="hso176" gradientUnits="userSpaceOnUse" x1="1021" y1="0" x2="1662" y2="0"><stop offset="0.000" stop-color="#001d9e"/><stop offset="0.300" stop-color="#03019e"/><stop offset="0.721" stop-color="#9e009b"/><stop offset="0.889" stop-color="#9e006c"/><stop offset="0.997" stop-color="#9e0059"/></linearGradient><linearGradient id="hso177" gradientUnits="userSpaceOnUse" x1="1021" y1="0" x2="1662" y2="0"><stop offset="0.000" stop-color="#001c9e"/><stop offset="0.300" stop-color="#03009e"/><stop offset="0.725" stop-color="#9e009b"/><stop offset="0.894" stop-color="#9e006c"/><stop offset="0.997" stop-color="#9e005a"/></linearGradient><linearGradient id="hso178" gradientUnits="userSpaceOnUse" x1="1021" y1="0" x2="1662" y2="0"><stop offset="0.000" stop-color="#001c9e"/><stop offset="0.300" stop-color="#03009e"/><stop offset="0.730" stop-color="#9e009a"/><stop offset="0.903" stop-color="#9e006b"/><stop offset="0.997" stop-color="#9e005b"/></linearGradient><linearGradient id="hso179" gradientUnits="userSpaceOnUse" x1="1021" y1="0" x2="1662" y2="0"><stop offset="0.000" stop-color="#001b9e"/><stop offset="0.304" stop-color="#04009e"/><stop offset="0.730" stop-color="#9e009b"/><stop offset="0.903" stop-color="#9e006c"/><stop offset="0.997" stop-color="#9e005b"/></linearGradient><linearGradient id="hso180" gradientUnits="userSpaceOnUse" x1="1021" y1="0" x2="1662" y2="0"><stop offset="0.000" stop-color="#001b9e"/><stop offset="0.304" stop-color="#04009e"/><stop offset="0.735" stop-color="#9e009b"/><stop offset="0.908" stop-color="#9e006b"/><stop offset="0.997" stop-color="#9e005c"/></linearGradient><linearGradient id="hso181" gradientUnits="userSpaceOnUse" x1="1021" y1="0" x2="1662" y2="0"><stop offset="0.000" stop-color="#001b9e"/><stop offset="0.304" stop-color="#04009e"/><stop offset="0.739" stop-color="#9e009a"/><stop offset="0.913" stop-color="#9e006b"/><stop offset="0.997" stop-color="#9e005d"/></linearGradient><linearGradient id="hso182" gradientUnits="userSpaceOnUse" x1="1021" y1="0" x2="1662" y2="0"><stop offset="0.000" stop-color="#001a9e"/><stop offset="0.304" stop-color="#04009e"/><stop offset="0.739" stop-color="#9e009c"/><stop offset="0.913" stop-color="#9e006c"/><stop offset="0.997" stop-color="#9e005e"/></linearGradient><linearGradient id="hso183" gradientUnits="userSpaceOnUse" x1="1021" y1="0" x2="1662" y2="0"><stop offset="0.000" stop-color="#001a9e"/><stop offset="0.304" stop-color="#03009e"/><stop offset="0.744" stop-color="#9e009b"/><stop offset="0.922" stop-color="#9e006b"/><stop offset="0.997" stop-color="#9e005e"/></linearGradient><linearGradient id="hso184" gradientUnits="userSpaceOnUse" x1="1021" y1="0" x2="1662" y2="0"><stop offset="0.000" stop-color="#00199e"/><stop offset="0.304" stop-color="#03009e"/><stop offset="0.749" stop-color="#9e009a"/><stop offset="0.927" stop-color="#9e006b"/><stop offset="0.997" stop-color="#9e005f"/></linearGradient><linearGradient id="hso185" gradientUnits="userSpaceOnUse" x1="1021" y1="0" x2="1662" y2="0"><stop offset="0.000" stop-color="#00199e"/><stop offset="0.304" stop-color="#03009e"/><stop offset="0.749" stop-color="#9e009c"/><stop offset="0.927" stop-color="#9e006c"/><stop offset="0.997" stop-color="#9e0060"/></linearGradient><linearGradient id="hso186" gradientUnits="userSpaceOnUse" x1="1021" y1="0" x2="1662" y2="0"><stop offset="0.000" stop-color="#00189e"/><stop offset="0.304" stop-color="#03009e"/><stop offset="0.754" stop-color="#9e009b"/><stop offset="0.931" stop-color="#9e006c"/><stop offset="0.997" stop-color="#9e0060"/></linearGradient><linearGradient id="hso187" gradientUnits="userSpaceOnUse" x1="1021" y1="0" x2="1662" y2="0"><stop offset="0.000" stop-color="#00189e"/><stop offset="0.304" stop-color="#03009e"/><stop offset="0.758" stop-color="#9e009b"/><stop offset="0.941" stop-color="#9e006b"/><stop offset="0.997" stop-color="#9e0061"/></linearGradient><linearGradient id="hso188" gradientUnits="userSpaceOnUse" x1="1021" y1="0" x2="1662" y2="0"><stop offset="0.000" stop-color="#00189e"/><stop offset="0.309" stop-color="#04009e"/><stop offset="0.763" stop-color="#9e009a"/><stop offset="0.945" stop-color="#9e006b"/><stop offset="0.997" stop-color="#9e0062"/></linearGradient><linearGradient id="hso189" gradientUnits="userSpaceOnUse" x1="1021" y1="0" x2="1662" y2="0"><stop offset="0.000" stop-color="#00179e"/><stop offset="0.309" stop-color="#04009e"/><stop offset="0.763" stop-color="#9e009b"/><stop offset="0.945" stop-color="#9e006c"/><stop offset="0.997" stop-color="#9e0063"/></linearGradient><linearGradient id="hso190" gradientUnits="userSpaceOnUse" x1="1021" y1="0" x2="1662" y2="0"><stop offset="0.000" stop-color="#00179e"/><stop offset="0.309" stop-color="#04009e"/><stop offset="0.768" stop-color="#9e009b"/><stop offset="0.950" stop-color="#9e006c"/><stop offset="0.997" stop-color="#9e0063"/></linearGradient><linearGradient id="hso191" gradientUnits="userSpaceOnUse" x1="1021" y1="0" x2="1662" y2="0"><stop offset="0.000" stop-color="#00169e"/><stop offset="0.309" stop-color="#03009e"/><stop offset="0.772" stop-color="#9e009a"/><stop offset="0.959" stop-color="#9e006b"/><stop offset="0.997" stop-color="#9e0064"/></linearGradient><linearGradient id="hso192" gradientUnits="userSpaceOnUse" x1="1021" y1="0" x2="1662" y2="0"><stop offset="0.000" stop-color="#00169e"/><stop offset="0.309" stop-color="#03009e"/><stop offset="0.772" stop-color="#9e009b"/><stop offset="0.959" stop-color="#9e006b"/><stop offset="0.997" stop-color="#9e0065"/></linearGradient><linearGradient id="hso193" gradientUnits="userSpaceOnUse" x1="1021" y1="0" x2="1662" y2="0"><stop offset="0.000" stop-color="#00169e"/><stop offset="0.309" stop-color="#03009e"/><stop offset="0.777" stop-color="#9e009b"/><stop offset="0.964" stop-color="#9e006b"/><stop offset="0.997" stop-color="#9e0066"/></linearGradient><linearGradient id="hso194" gradientUnits="userSpaceOnUse" x1="1021" y1="0" x2="1662" y2="0"><stop offset="0.000" stop-color="#00159e"/><stop offset="0.309" stop-color="#03009e"/><stop offset="0.782" stop-color="#9e009a"/><stop offset="0.973" stop-color="#9e006a"/><stop offset="0.997" stop-color="#9e0066"/></linearGradient><linearGradient id="hso195" gradientUnits="userSpaceOnUse" x1="1021" y1="0" x2="1662" y2="0"><stop offset="0.000" stop-color="#00159e"/><stop offset="0.304" stop-color="#01009e"/><stop offset="0.782" stop-color="#9e009b"/><stop offset="0.969" stop-color="#9e006c"/><stop offset="0.997" stop-color="#9e0067"/></linearGradient><linearGradient id="hso196" gradientUnits="userSpaceOnUse" x1="1021" y1="0" x2="1662" y2="0"><stop offset="0.000" stop-color="#00159e"/><stop offset="0.304" stop-color="#01009e"/><stop offset="0.786" stop-color="#9e009b"/><stop offset="0.978" stop-color="#9e006b"/><stop offset="0.997" stop-color="#9e0068"/></linearGradient><linearGradient id="hso197" gradientUnits="userSpaceOnUse" x1="1021" y1="0" x2="1662" y2="0"><stop offset="0.000" stop-color="#00149e"/><stop offset="0.300" stop-color="#00009e"/><stop offset="0.791" stop-color="#9e009a"/><stop offset="0.983" stop-color="#9e006b"/><stop offset="0.997" stop-color="#9e0069"/></linearGradient><linearGradient id="hso198" gradientUnits="userSpaceOnUse" x1="1021" y1="0" x2="1662" y2="0"><stop offset="0.000" stop-color="#00149e"/><stop offset="0.300" stop-color="#00009e"/><stop offset="0.791" stop-color="#9e009b"/><stop offset="0.983" stop-color="#9e006c"/><stop offset="0.997" stop-color="#9e0069"/></linearGradient><linearGradient id="hso199" gradientUnits="userSpaceOnUse" x1="1021" y1="0" x2="1662" y2="0"><stop offset="0.000" stop-color="#00149e"/><stop offset="0.295" stop-color="#00009e"/><stop offset="0.744" stop-color="#8f009e"/><stop offset="0.800" stop-color="#9e0099"/><stop offset="0.997" stop-color="#9e006a"/></linearGradient><linearGradient id="hso200" gradientUnits="userSpaceOnUse" x1="1021" y1="0" x2="1662" y2="0"><stop offset="0.000" stop-color="#00139e"/><stop offset="0.295" stop-color="#00009e"/><stop offset="0.739" stop-color="#8d009e"/><stop offset="0.805" stop-color="#9e0099"/><stop offset="0.997" stop-color="#9e006b"/></linearGradient><linearGradient id="hso201" gradientUnits="userSpaceOnUse" x1="1021" y1="0" x2="1662" y2="0"><stop offset="0.000" stop-color="#00139e"/><stop offset="0.290" stop-color="#00009e"/><stop offset="0.627" stop-color="#66009e"/><stop offset="0.805" stop-color="#9e009a"/><stop offset="0.997" stop-color="#9e006b"/></linearGradient><linearGradient id="hso202" gradientUnits="userSpaceOnUse" x1="1021" y1="0" x2="1662" y2="0"><stop offset="0.000" stop-color="#00129e"/><stop offset="0.290" stop-color="#00009e"/><stop offset="0.608" stop-color="#5f009e"/><stop offset="0.805" stop-color="#9e009b"/><stop offset="0.997" stop-color="#9e006c"/></linearGradient><linearGradient id="hso203" gradientUnits="userSpaceOnUse" x1="1021" y1="0" x2="1662" y2="0"><stop offset="0.000" stop-color="#00129e"/><stop offset="0.285" stop-color="#00009e"/><stop offset="0.351" stop-color="#0e009e"/><stop offset="0.810" stop-color="#9e009a"/><stop offset="0.997" stop-color="#9e006d"/></linearGradient><linearGradient id="hso204" gradientUnits="userSpaceOnUse" x1="1021" y1="0" x2="1662" y2="0"><stop offset="0.000" stop-color="#00129e"/><stop offset="0.285" stop-color="#00009e"/><stop offset="0.351" stop-color="#0e009e"/><stop offset="0.810" stop-color="#9e009b"/><stop offset="0.997" stop-color="#9e006e"/></linearGradient><linearGradient id="hso205" gradientUnits="userSpaceOnUse" x1="1021" y1="0" x2="1662" y2="0"><stop offset="0.000" stop-color="#00119e"/><stop offset="0.281" stop-color="#00009e"/><stop offset="0.337" stop-color="#09009e"/><stop offset="0.814" stop-color="#9e009b"/><stop offset="0.997" stop-color="#9e006e"/></linearGradient><linearGradient id="hso206" gradientUnits="userSpaceOnUse" x1="1021" y1="0" x2="1662" y2="0"><stop offset="0.000" stop-color="#00119e"/><stop offset="0.281" stop-color="#00009e"/><stop offset="0.337" stop-color="#09009e"/><stop offset="0.819" stop-color="#9e009a"/><stop offset="0.997" stop-color="#9e006f"/></linearGradient><linearGradient id="hso207" gradientUnits="userSpaceOnUse" x1="1021" y1="0" x2="1662" y2="0"><stop offset="0.000" stop-color="#00119e"/><stop offset="0.276" stop-color="#00009e"/><stop offset="0.332" stop-color="#08009e"/><stop offset="0.824" stop-color="#9e009a"/><stop offset="0.997" stop-color="#9e0070"/></linearGradient><linearGradient id="hso208" gradientUnits="userSpaceOnUse" x1="1021" y1="0" x2="1662" y2="0"><stop offset="0.000" stop-color="#00109e"/><stop offset="0.276" stop-color="#00009e"/><stop offset="0.332" stop-color="#07009e"/><stop offset="0.824" stop-color="#9e009b"/><stop offset="0.997" stop-color="#9e0071"/></linearGradient><linearGradient id="hso209" gradientUnits="userSpaceOnUse" x1="1021" y1="0" x2="1662" y2="0"><stop offset="0.000" stop-color="#00109e"/><stop offset="0.271" stop-color="#00009e"/><stop offset="0.332" stop-color="#07009e"/><stop offset="0.828" stop-color="#9e009b"/><stop offset="0.997" stop-color="#9e0071"/></linearGradient><linearGradient id="hso210" gradientUnits="userSpaceOnUse" x1="1021" y1="0" x2="1662" y2="0"><stop offset="0.000" stop-color="#00109e"/><stop offset="0.271" stop-color="#00009e"/><stop offset="0.332" stop-color="#07009e"/><stop offset="0.833" stop-color="#9e009a"/><stop offset="0.997" stop-color="#9e0072"/></linearGradient><linearGradient id="hso211" gradientUnits="userSpaceOnUse" x1="1021" y1="0" x2="1662" y2="0"><stop offset="0.000" stop-color="#000f9e"/><stop offset="0.267" stop-color="#00009e"/><stop offset="0.328" stop-color="#06009e"/><stop offset="0.833" stop-color="#9e009b"/><stop offset="0.997" stop-color="#9e0073"/></linearGradient><linearGradient id="hso212" gradientUnits="userSpaceOnUse" x1="1021" y1="0" x2="1662" y2="0"><stop offset="0.000" stop-color="#000f9e"/><stop offset="0.267" stop-color="#00009e"/><stop offset="0.328" stop-color="#05009e"/><stop offset="0.838" stop-color="#9e009b"/><stop offset="0.997" stop-color="#9e0074"/></linearGradient><linearGradient id="hso213" gradientUnits="userSpaceOnUse" x1="1021" y1="0" x2="1662" y2="0"><stop offset="0.000" stop-color="#000f9e"/><stop offset="0.262" stop-color="#00009e"/><stop offset="0.328" stop-color="#05009e"/><stop offset="0.842" stop-color="#9e009a"/><stop offset="0.997" stop-color="#9e0074"/></linearGradient><linearGradient id="hso214" gradientUnits="userSpaceOnUse" x1="1021" y1="0" x2="1662" y2="0"><stop offset="0.000" stop-color="#000f9e"/><stop offset="0.262" stop-color="#00009e"/><stop offset="0.328" stop-color="#05009e"/><stop offset="0.842" stop-color="#9e009b"/><stop offset="0.997" stop-color="#9e0075"/></linearGradient><linearGradient id="hso215" gradientUnits="userSpaceOnUse" x1="1021" y1="0" x2="1662" y2="0"><stop offset="0.000" stop-color="#000e9e"/><stop offset="0.257" stop-color="#00009e"/><stop offset="0.328" stop-color="#05009e"/><stop offset="0.847" stop-color="#9e009b"/><stop offset="0.997" stop-color="#9e0076"/></linearGradient><linearGradient id="hso216" gradientUnits="userSpaceOnUse" x1="1021" y1="0" x2="1662" y2="0"><stop offset="0.000" stop-color="#000e9e"/><stop offset="0.257" stop-color="#00009e"/><stop offset="0.328" stop-color="#05009e"/><stop offset="0.852" stop-color="#9e009a"/><stop offset="0.997" stop-color="#9e0077"/></linearGradient><linearGradient id="hso217" gradientUnits="userSpaceOnUse" x1="1021" y1="0" x2="1662" y2="0"><stop offset="0.000" stop-color="#000e9e"/><stop offset="0.257" stop-color="#00009e"/><stop offset="0.328" stop-color="#05009e"/><stop offset="0.852" stop-color="#9e009b"/><stop offset="0.997" stop-color="#9e0077"/></linearGradient><linearGradient id="hso218" gradientUnits="userSpaceOnUse" x1="1021" y1="0" x2="1662" y2="0"><stop offset="0.000" stop-color="#000d9e"/><stop offset="0.253" stop-color="#00009e"/><stop offset="0.332" stop-color="#06009e"/><stop offset="0.856" stop-color="#9e009b"/><stop offset="0.997" stop-color="#9e0078"/></linearGradient><linearGradient id="hso219" gradientUnits="userSpaceOnUse" x1="1021" y1="0" x2="1662" y2="0"><stop offset="0.000" stop-color="#000d9e"/><stop offset="0.253" stop-color="#00009e"/><stop offset="0.332" stop-color="#05009e"/><stop offset="0.861" stop-color="#9e009a"/><stop offset="0.997" stop-color="#9e0079"/></linearGradient><linearGradient id="hso220" gradientUnits="userSpaceOnUse" x1="1021" y1="0" x2="1662" y2="0"><stop offset="0.000" stop-color="#000d9e"/><stop offset="0.248" stop-color="#00009e"/><stop offset="0.332" stop-color="#05009e"/><stop offset="0.861" stop-color="#9e009b"/><stop offset="0.997" stop-color="#9e007a"/></linearGradient><linearGradient id="hso221" gradientUnits="userSpaceOnUse" x1="1021" y1="0" x2="1662" y2="0"><stop offset="0.000" stop-color="#000d9e"/><stop offset="0.248" stop-color="#00009e"/><stop offset="0.332" stop-color="#05009e"/><stop offset="0.866" stop-color="#9e009b"/><stop offset="0.997" stop-color="#9e007b"/></linearGradient><linearGradient id="hso222" gradientUnits="userSpaceOnUse" x1="1021" y1="0" x2="1662" y2="0"><stop offset="0.000" stop-color="#000c9e"/><stop offset="0.248" stop-color="#00009e"/><stop offset="0.332" stop-color="#05009e"/><stop offset="0.871" stop-color="#9e009a"/><stop offset="0.997" stop-color="#9e007b"/></linearGradient><linearGradient id="hso223" gradientUnits="userSpaceOnUse" x1="1021" y1="0" x2="1662" y2="0"><stop offset="0.000" stop-color="#000c9e"/><stop offset="0.243" stop-color="#00009e"/><stop offset="0.332" stop-color="#05009e"/><stop offset="0.871" stop-color="#9e009b"/><stop offset="0.997" stop-color="#9e007c"/></linearGradient><linearGradient id="hso224" gradientUnits="userSpaceOnUse" x1="1021" y1="0" x2="1662" y2="0"><stop offset="0.000" stop-color="#000c9e"/><stop offset="0.243" stop-color="#00009e"/><stop offset="0.332" stop-color="#05009e"/><stop offset="0.875" stop-color="#9e009b"/><stop offset="0.997" stop-color="#9e007d"/></linearGradient><linearGradient id="hso225" gradientUnits="userSpaceOnUse" x1="1021" y1="0" x2="1662" y2="0"><stop offset="0.000" stop-color="#000b9e"/><stop offset="0.243" stop-color="#00009e"/><stop offset="0.332" stop-color="#05009e"/><stop offset="0.880" stop-color="#9e009a"/><stop offset="0.997" stop-color="#9e007e"/></linearGradient><linearGradient id="hso226" gradientUnits="userSpaceOnUse" x1="1021" y1="0" x2="1662" y2="0"><stop offset="0.000" stop-color="#000b9e"/><stop offset="0.239" stop-color="#00009e"/><stop offset="0.332" stop-color="#04009e"/><stop offset="0.885" stop-color="#9e009a"/><stop offset="0.997" stop-color="#9e007e"/></linearGradient><linearGradient id="hso227" gradientUnits="userSpaceOnUse" x1="1021" y1="0" x2="1662" y2="0"><stop offset="0.000" stop-color="#000b9e"/><stop offset="0.239" stop-color="#00009e"/><stop offset="0.332" stop-color="#04009e"/><stop offset="0.885" stop-color="#9e009b"/><stop offset="0.997" stop-color="#9e007f"/></linearGradient><linearGradient id="hso228" gradientUnits="userSpaceOnUse" x1="1021" y1="0" x2="1662" y2="0"><stop offset="0.000" stop-color="#000b9e"/><stop offset="0.239" stop-color="#00009e"/><stop offset="0.332" stop-color="#04009e"/><stop offset="0.889" stop-color="#9e009b"/><stop offset="0.997" stop-color="#9e0080"/></linearGradient><linearGradient id="hso229" gradientUnits="userSpaceOnUse" x1="1021" y1="0" x2="1662" y2="0"><stop offset="0.000" stop-color="#000a9e"/><stop offset="0.234" stop-color="#00009e"/><stop offset="0.337" stop-color="#05009e"/><stop offset="0.894" stop-color="#9e009a"/><stop offset="0.997" stop-color="#9e0081"/></linearGradient><linearGradient id="hso230" gradientUnits="userSpaceOnUse" x1="1021" y1="0" x2="1662" y2="0"><stop offset="0.000" stop-color="#000a9e"/><stop offset="0.234" stop-color="#00009e"/><stop offset="0.337" stop-color="#05009e"/><stop offset="0.894" stop-color="#9e009b"/><stop offset="0.997" stop-color="#9e0081"/></linearGradient><linearGradient id="hso231" gradientUnits="userSpaceOnUse" x1="1021" y1="0" x2="1662" y2="0"><stop offset="0.000" stop-color="#000a9e"/><stop offset="0.234" stop-color="#00009e"/><stop offset="0.337" stop-color="#05009e"/><stop offset="0.899" stop-color="#9e009b"/><stop offset="0.997" stop-color="#9e0082"/></linearGradient><linearGradient id="hso232" gradientUnits="userSpaceOnUse" x1="1021" y1="0" x2="1662" y2="0"><stop offset="0.000" stop-color="#000a9e"/><stop offset="0.234" stop-color="#00009e"/><stop offset="0.337" stop-color="#05009e"/><stop offset="0.903" stop-color="#9e009a"/><stop offset="0.997" stop-color="#9e0083"/></linearGradient><linearGradient id="hso233" gradientUnits="userSpaceOnUse" x1="1021" y1="0" x2="1662" y2="0"><stop offset="0.000" stop-color="#00099e"/><stop offset="0.234" stop-color="#00009e"/><stop offset="0.337" stop-color="#05009e"/><stop offset="0.903" stop-color="#9e009b"/><stop offset="0.997" stop-color="#9e0084"/></linearGradient><linearGradient id="hso234" gradientUnits="userSpaceOnUse" x1="1021" y1="0" x2="1662" y2="0"><stop offset="0.000" stop-color="#00099e"/><stop offset="0.234" stop-color="#00009e"/><stop offset="0.337" stop-color="#04009e"/><stop offset="0.908" stop-color="#9e009b"/><stop offset="0.997" stop-color="#9e0085"/></linearGradient><linearGradient id="hso235" gradientUnits="userSpaceOnUse" x1="1021" y1="0" x2="1662" y2="0"><stop offset="0.000" stop-color="#00099e"/><stop offset="0.229" stop-color="#00009e"/><stop offset="0.337" stop-color="#04009e"/><stop offset="0.913" stop-color="#9e009a"/><stop offset="0.997" stop-color="#9e0085"/></linearGradient><linearGradient id="hso236" gradientUnits="userSpaceOnUse" x1="1021" y1="0" x2="1662" y2="0"><stop offset="0.000" stop-color="#00099e"/><stop offset="0.234" stop-color="#00009e"/><stop offset="0.337" stop-color="#04009e"/><stop offset="0.913" stop-color="#9e009b"/><stop offset="0.997" stop-color="#9e0086"/></linearGradient><linearGradient id="hso237" gradientUnits="userSpaceOnUse" x1="1021" y1="0" x2="1662" y2="0"><stop offset="0.000" stop-color="#00089e"/><stop offset="0.234" stop-color="#00009e"/><stop offset="0.342" stop-color="#05009e"/><stop offset="0.917" stop-color="#9e009b"/><stop offset="0.997" stop-color="#9e0087"/></linearGradient><linearGradient id="hso238" gradientUnits="userSpaceOnUse" x1="1021" y1="0" x2="1662" y2="0"><stop offset="0.000" stop-color="#00089e"/><stop offset="0.229" stop-color="#00009e"/><stop offset="0.342" stop-color="#05009e"/><stop offset="0.922" stop-color="#9e009a"/><stop offset="0.997" stop-color="#9e0088"/></linearGradient><linearGradient id="hso239" gradientUnits="userSpaceOnUse" x1="1021" y1="0" x2="1662" y2="0"><stop offset="0.000" stop-color="#00089e"/><stop offset="0.234" stop-color="#00009e"/><stop offset="0.342" stop-color="#05009e"/><stop offset="0.922" stop-color="#9e009b"/><stop offset="0.997" stop-color="#9e0088"/></linearGradient><linearGradient id="hso240" gradientUnits="userSpaceOnUse" x1="1021" y1="0" x2="1662" y2="0"><stop offset="0.000" stop-color="#00089e"/><stop offset="0.239" stop-color="#00009e"/><stop offset="0.342" stop-color="#05009e"/><stop offset="0.927" stop-color="#9e009b"/><stop offset="0.997" stop-color="#9e0089"/></linearGradient><linearGradient id="hso241" gradientUnits="userSpaceOnUse" x1="1021" y1="0" x2="1662" y2="0"><stop offset="0.000" stop-color="#00079e"/><stop offset="0.239" stop-color="#00009e"/><stop offset="0.342" stop-color="#05009e"/><stop offset="0.931" stop-color="#9e009a"/><stop offset="0.997" stop-color="#9e008a"/></linearGradient><linearGradient id="hso242" gradientUnits="userSpaceOnUse" x1="1021" y1="0" x2="1662" y2="0"><stop offset="0.000" stop-color="#00079e"/><stop offset="0.243" stop-color="#00009e"/><stop offset="0.342" stop-color="#04009e"/><stop offset="0.931" stop-color="#9e009b"/><stop offset="0.997" stop-color="#9e008b"/></linearGradient><linearGradient id="hso243" gradientUnits="userSpaceOnUse" x1="1021" y1="0" x2="1662" y2="0"><stop offset="0.000" stop-color="#00079e"/><stop offset="0.248" stop-color="#00009e"/><stop offset="0.342" stop-color="#04009e"/><stop offset="0.936" stop-color="#9e009b"/><stop offset="0.997" stop-color="#9e008c"/></linearGradient><linearGradient id="hso244" gradientUnits="userSpaceOnUse" x1="1021" y1="0" x2="1662" y2="0"><stop offset="0.000" stop-color="#00079e"/><stop offset="0.253" stop-color="#00009e"/><stop offset="0.346" stop-color="#05009e"/><stop offset="0.941" stop-color="#9e009a"/><stop offset="0.997" stop-color="#9e008c"/></linearGradient><linearGradient id="hso245" gradientUnits="userSpaceOnUse" x1="1021" y1="0" x2="1662" y2="0"><stop offset="0.000" stop-color="#00069e"/><stop offset="0.253" stop-color="#00009e"/><stop offset="0.346" stop-color="#05009e"/><stop offset="0.941" stop-color="#9e009b"/><stop offset="0.997" stop-color="#9e008d"/></linearGradient><linearGradient id="hsi0" gradientUnits="userSpaceOnUse" x1="1153" y1="0" x2="1503" y2="0"><stop offset="0.000" stop-color="#00ff00"/><stop offset="0.051" stop-color="#27ff00"/><stop offset="0.171" stop-color="#a0ff00"/><stop offset="0.246" stop-color="#fcff00"/><stop offset="0.320" stop-color="#ffb400"/><stop offset="0.411" stop-color="#ff7b00"/><stop offset="0.554" stop-color="#ff4800"/><stop offset="0.794" stop-color="#ff1b00"/><stop offset="1.000" stop-color="#ff0700"/></linearGradient><linearGradient id="hsi1" gradientUnits="userSpaceOnUse" x1="1153" y1="0" x2="1503" y2="0"><stop offset="0.000" stop-color="#00ff04"/><stop offset="0.034" stop-color="#18ff02"/><stop offset="0.160" stop-color="#93ff00"/><stop offset="0.246" stop-color="#fdff00"/><stop offset="0.314" stop-color="#ffb700"/><stop offset="0.406" stop-color="#ff7d00"/><stop offset="0.549" stop-color="#ff4800"/><stop offset="0.783" stop-color="#ff1c00"/><stop offset="1.000" stop-color="#ff0600"/></linearGradient><linearGradient id="hsi2" gradientUnits="userSpaceOnUse" x1="1153" y1="0" x2="1503" y2="0"><stop offset="0.000" stop-color="#00ff08"/><stop offset="0.029" stop-color="#12ff06"/><stop offset="0.154" stop-color="#8dff00"/><stop offset="0.246" stop-color="#feff00"/><stop offset="0.314" stop-color="#ffb700"/><stop offset="0.406" stop-color="#ff7c00"/><stop offset="0.549" stop-color="#ff4800"/><stop offset="0.783" stop-color="#ff1c00"/><stop offset="1.000" stop-color="#ff0600"/></linearGradient><linearGradient id="hsi3" gradientUnits="userSpaceOnUse" x1="1153" y1="0" x2="1503" y2="0"><stop offset="0.000" stop-color="#00ff0d"/><stop offset="0.023" stop-color="#0dff0b"/><stop offset="0.149" stop-color="#87ff02"/><stop offset="0.246" stop-color="#feff00"/><stop offset="0.309" stop-color="#ffbb00"/><stop offset="0.394" stop-color="#ff8100"/><stop offset="0.526" stop-color="#ff4e00"/><stop offset="0.743" stop-color="#ff2100"/><stop offset="1.000" stop-color="#ff0500"/></linearGradient><linearGradient id="hsi4" gradientUnits="userSpaceOnUse" x1="1153" y1="0" x2="1503" y2="0"><stop offset="0.000" stop-color="#00ff11"/><stop offset="0.023" stop-color="#0cff10"/><stop offset="0.149" stop-color="#87ff08"/><stop offset="0.246" stop-color="#ffff00"/><stop offset="0.303" stop-color="#ffbf00"/><stop offset="0.389" stop-color="#ff8300"/><stop offset="0.520" stop-color="#ff4f00"/><stop offset="0.731" stop-color="#ff2200"/><stop offset="1.000" stop-color="#ff0500"/></linearGradient><linearGradient id="hsi5" gradientUnits="userSpaceOnUse" x1="1153" y1="0" x2="1503" y2="0"><stop offset="0.000" stop-color="#00ff16"/><stop offset="0.017" stop-color="#06ff15"/><stop offset="0.143" stop-color="#80ff0d"/><stop offset="0.246" stop-color="#fffe05"/><stop offset="0.303" stop-color="#ffbe00"/><stop offset="0.389" stop-color="#ff8200"/><stop offset="0.520" stop-color="#ff4e00"/><stop offset="0.737" stop-color="#ff2100"/><stop offset="1.000" stop-color="#ff0400"/></linearGradient><linearGradient id="hsi6" gradientUnits="userSpaceOnUse" x1="1153" y1="0" x2="1503" y2="0"><stop offset="0.000" stop-color="#00ff1a"/><stop offset="0.017" stop-color="#05ff1a"/><stop offset="0.143" stop-color="#80ff12"/><stop offset="0.246" stop-color="#fffd0b"/><stop offset="0.303" stop-color="#ffbd04"/><stop offset="0.389" stop-color="#ff8200"/><stop offset="0.520" stop-color="#ff4d00"/><stop offset="0.737" stop-color="#ff2000"/><stop offset="1.000" stop-color="#ff0400"/></linearGradient><linearGradient id="hsi7" gradientUnits="userSpaceOnUse" x1="1153" y1="0" x2="1503" y2="0"><stop offset="0.000" stop-color="#00ff1f"/><stop offset="0.017" stop-color="#05ff1e"/><stop offset="0.143" stop-color="#80ff18"/><stop offset="0.246" stop-color="#fffd11"/><stop offset="0.303" stop-color="#ffbd09"/><stop offset="0.389" stop-color="#ff8102"/><stop offset="0.520" stop-color="#ff4d00"/><stop offset="0.737" stop-color="#ff2000"/><stop offset="1.000" stop-color="#ff0400"/></linearGradient><linearGradient id="hsi8" gradientUnits="userSpaceOnUse" x1="1153" y1="0" x2="1503" y2="0"><stop offset="0.000" stop-color="#00ff24"/><stop offset="0.017" stop-color="#04ff23"/><stop offset="0.137" stop-color="#79ff1d"/><stop offset="0.246" stop-color="#fffc17"/><stop offset="0.303" stop-color="#ffbc0e"/><stop offset="0.389" stop-color="#ff8006"/><stop offset="0.520" stop-color="#ff4c00"/><stop offset="0.737" stop-color="#ff1f00"/><stop offset="1.000" stop-color="#ff0300"/></linearGradient><linearGradient id="hsi9" gradientUnits="userSpaceOnUse" x1="1153" y1="0" x2="1503" y2="0"><stop offset="0.000" stop-color="#00ff28"/><stop offset="0.017" stop-color="#03ff28"/><stop offset="0.137" stop-color="#79ff23"/><stop offset="0.246" stop-color="#fffb1d"/><stop offset="0.303" stop-color="#ffbb13"/><stop offset="0.389" stop-color="#ff7f09"/><stop offset="0.520" stop-color="#ff4b01"/><stop offset="0.737" stop-color="#ff1f00"/><stop offset="1.000" stop-color="#ff0300"/></linearGradient><linearGradient id="hsi10" gradientUnits="userSpaceOnUse" x1="1153" y1="0" x2="1503" y2="0"><stop offset="0.000" stop-color="#00ff2d"/><stop offset="0.023" stop-color="#07ff2c"/><stop offset="0.143" stop-color="#80ff28"/><stop offset="0.240" stop-color="#fcff24"/><stop offset="0.309" stop-color="#ffb516"/><stop offset="0.394" stop-color="#ff7c0c"/><stop offset="0.526" stop-color="#ff4903"/><stop offset="0.743" stop-color="#ff1d00"/><stop offset="1.000" stop-color="#ff0200"/></linearGradient><linearGradient id="hsi11" gradientUnits="userSpaceOnUse" x1="1153" y1="0" x2="1503" y2="0"><stop offset="0.000" stop-color="#00ff32"/><stop offset="0.023" stop-color="#07ff31"/><stop offset="0.143" stop-color="#7fff2e"/><stop offset="0.240" stop-color="#fcff2a"/><stop offset="0.309" stop-color="#ffb41b"/><stop offset="0.394" stop-color="#ff7b10"/><stop offset="0.526" stop-color="#ff4806"/><stop offset="0.743" stop-color="#ff1d00"/><stop offset="1.000" stop-color="#ff0200"/></linearGradient><linearGradient id="hsi12" gradientUnits="userSpaceOnUse" x1="1153" y1="0" x2="1503" y2="0"><stop offset="0.000" stop-color="#00ff37"/><stop offset="0.023" stop-color="#06ff36"/><stop offset="0.143" stop-color="#7fff33"/><stop offset="0.240" stop-color="#fdff30"/><stop offset="0.303" stop-color="#ffb821"/><stop offset="0.389" stop-color="#ff7d14"/><stop offset="0.520" stop-color="#ff4909"/><stop offset="0.737" stop-color="#ff1d00"/><stop offset="1.000" stop-color="#ff0200"/></linearGradient><linearGradient id="hsi13" gradientUnits="userSpaceOnUse" x1="1153" y1="0" x2="1503" y2="0"><stop offset="0.000" stop-color="#00ff3c"/><stop offset="0.023" stop-color="#05ff3b"/><stop offset="0.143" stop-color="#7fff39"/><stop offset="0.240" stop-color="#feff37"/><stop offset="0.303" stop-color="#ffb826"/><stop offset="0.389" stop-color="#ff7c18"/><stop offset="0.520" stop-color="#ff490c"/><stop offset="0.737" stop-color="#ff1c02"/><stop offset="1.000" stop-color="#ff0100"/></linearGradient><linearGradient id="hsi14" gradientUnits="userSpaceOnUse" x1="1153" y1="0" x2="1503" y2="0"><stop offset="0.000" stop-color="#00ff41"/><stop offset="0.023" stop-color="#04ff41"/><stop offset="0.143" stop-color="#7fff3f"/><stop offset="0.240" stop-color="#ffff3d"/><stop offset="0.297" stop-color="#ffbc2c"/><stop offset="0.377" stop-color="#ff821d"/><stop offset="0.503" stop-color="#ff4d10"/><stop offset="0.709" stop-color="#ff2005"/><stop offset="1.000" stop-color="#ff0100"/></linearGradient><linearGradient id="hsi15" gradientUnits="userSpaceOnUse" x1="1153" y1="0" x2="1503" y2="0"><stop offset="0.000" stop-color="#00ff46"/><stop offset="0.023" stop-color="#03ff46"/><stop offset="0.137" stop-color="#78ff45"/><stop offset="0.234" stop-color="#f7ff44"/><stop offset="0.240" stop-color="#ffff44"/><stop offset="0.297" stop-color="#ffbb31"/><stop offset="0.377" stop-color="#ff8121"/><stop offset="0.503" stop-color="#ff4c13"/><stop offset="0.709" stop-color="#ff2007"/><stop offset="1.000" stop-color="#ff0000"/></linearGradient><linearGradient id="hsi16" gradientUnits="userSpaceOnUse" x1="1153" y1="0" x2="1503" y2="0"><stop offset="0.000" stop-color="#00ff4b"/><stop offset="0.023" stop-color="#03ff4b"/><stop offset="0.137" stop-color="#78ff4b"/><stop offset="0.240" stop-color="#fffe4a"/><stop offset="0.297" stop-color="#ffba36"/><stop offset="0.377" stop-color="#ff8025"/><stop offset="0.503" stop-color="#ff4c16"/><stop offset="0.709" stop-color="#ff1f09"/><stop offset="1.000" stop-color="#ff0000"/></linearGradient><linearGradient id="hsi17" gradientUnits="userSpaceOnUse" x1="1153" y1="0" x2="1503" y2="0"><stop offset="0.000" stop-color="#00ff50"/><stop offset="0.023" stop-color="#02ff50"/><stop offset="0.137" stop-color="#78ff51"/><stop offset="0.240" stop-color="#fffd50"/><stop offset="0.297" stop-color="#ffb93b"/><stop offset="0.377" stop-color="#ff7f29"/><stop offset="0.503" stop-color="#ff4b18"/><stop offset="0.709" stop-color="#ff1e0b"/><stop offset="1.000" stop-color="#ff0001"/></linearGradient><linearGradient id="hsi18" gradientUnits="userSpaceOnUse" x1="1153" y1="0" x2="1503" y2="0"><stop offset="0.000" stop-color="#00ff55"/><stop offset="0.023" stop-color="#01ff56"/><stop offset="0.137" stop-color="#78ff57"/><stop offset="0.240" stop-color="#fffc57"/><stop offset="0.297" stop-color="#ffb940"/><stop offset="0.377" stop-color="#ff7e2d"/><stop offset="0.503" stop-color="#ff4a1b"/><stop offset="0.709" stop-color="#ff1e0c"/><stop offset="1.000" stop-color="#ff0002"/></linearGradient><linearGradient id="hsi19" gradientUnits="userSpaceOnUse" x1="1153" y1="0" x2="1503" y2="0"><stop offset="0.000" stop-color="#00ff5b"/><stop offset="0.023" stop-color="#00ff5b"/><stop offset="0.137" stop-color="#78ff5d"/><stop offset="0.240" stop-color="#fffb5e"/><stop offset="0.297" stop-color="#ffb846"/><stop offset="0.377" stop-color="#ff7e31"/><stop offset="0.503" stop-color="#ff491e"/><stop offset="0.709" stop-color="#ff1d0e"/><stop offset="1.000" stop-color="#ff0004"/></linearGradient><linearGradient id="hsi20" gradientUnits="userSpaceOnUse" x1="1153" y1="0" x2="1503" y2="0"><stop offset="0.000" stop-color="#00ff60"/><stop offset="0.029" stop-color="#04ff61"/><stop offset="0.143" stop-color="#7eff63"/><stop offset="0.234" stop-color="#fbff66"/><stop offset="0.303" stop-color="#ffb149"/><stop offset="0.389" stop-color="#ff7732"/><stop offset="0.520" stop-color="#ff441f"/><stop offset="0.737" stop-color="#ff190f"/><stop offset="1.000" stop-color="#ff0005"/></linearGradient><linearGradient id="hsi21" gradientUnits="userSpaceOnUse" x1="1153" y1="0" x2="1503" y2="0"><stop offset="0.000" stop-color="#00ff65"/><stop offset="0.029" stop-color="#04ff66"/><stop offset="0.143" stop-color="#7eff6a"/><stop offset="0.234" stop-color="#fcff6d"/><stop offset="0.297" stop-color="#ffb650"/><stop offset="0.377" stop-color="#ff7c39"/><stop offset="0.503" stop-color="#ff4824"/><stop offset="0.709" stop-color="#ff1c13"/><stop offset="1.000" stop-color="#ff0006"/></linearGradient><linearGradient id="hsi22" gradientUnits="userSpaceOnUse" x1="1153" y1="0" x2="1503" y2="0"><stop offset="0.000" stop-color="#00ff6b"/><stop offset="0.029" stop-color="#03ff6c"/><stop offset="0.137" stop-color="#77ff70"/><stop offset="0.229" stop-color="#f4ff74"/><stop offset="0.240" stop-color="#fff972"/><stop offset="0.297" stop-color="#ffb555"/><stop offset="0.377" stop-color="#ff7b3d"/><stop offset="0.503" stop-color="#ff4727"/><stop offset="0.709" stop-color="#ff1c15"/><stop offset="0.994" stop-color="#ff0008"/><stop offset="1.000" stop-color="#ff0008"/></linearGradient><linearGradient id="hsi23" gradientUnits="userSpaceOnUse" x1="1153" y1="0" x2="1503" y2="0"><stop offset="0.000" stop-color="#00ff70"/><stop offset="0.029" stop-color="#02ff71"/><stop offset="0.137" stop-color="#77ff76"/><stop offset="0.229" stop-color="#f4ff7b"/><stop offset="0.240" stop-color="#fff879"/><stop offset="0.291" stop-color="#ffba5d"/><stop offset="0.371" stop-color="#ff7d42"/><stop offset="0.491" stop-color="#ff4a2b"/><stop offset="0.691" stop-color="#ff1e18"/><stop offset="0.983" stop-color="#ff000a"/><stop offset="1.000" stop-color="#ff0009"/></linearGradient><linearGradient id="hsi24" gradientUnits="userSpaceOnUse" x1="1153" y1="0" x2="1503" y2="0"><stop offset="0.000" stop-color="#00ff76"/><stop offset="0.029" stop-color="#01ff77"/><stop offset="0.137" stop-color="#77ff7d"/><stop offset="0.229" stop-color="#f5ff83"/><stop offset="0.234" stop-color="#feff83"/><stop offset="0.291" stop-color="#ffb962"/><stop offset="0.371" stop-color="#ff7d46"/><stop offset="0.491" stop-color="#ff492e"/><stop offset="0.691" stop-color="#ff1d1a"/><stop offset="0.983" stop-color="#ff000b"/><stop offset="1.000" stop-color="#ff000b"/></linearGradient><linearGradient id="hsi25" gradientUnits="userSpaceOnUse" x1="1153" y1="0" x2="1503" y2="0"><stop offset="0.000" stop-color="#00ff7c"/><stop offset="0.029" stop-color="#00ff7d"/><stop offset="0.137" stop-color="#77ff84"/><stop offset="0.229" stop-color="#f6ff8a"/><stop offset="0.234" stop-color="#ffff8b"/><stop offset="0.286" stop-color="#ffbd6b"/><stop offset="0.360" stop-color="#ff824e"/><stop offset="0.474" stop-color="#ff4e34"/><stop offset="0.663" stop-color="#ff211e"/><stop offset="0.960" stop-color="#ff000d"/><stop offset="1.000" stop-color="#ff000c"/></linearGradient><linearGradient id="hsi26" gradientUnits="userSpaceOnUse" x1="1153" y1="0" x2="1503" y2="0"><stop offset="0.000" stop-color="#00ff81"/><stop offset="0.029" stop-color="#00ff83"/><stop offset="0.131" stop-color="#6fff8a"/><stop offset="0.223" stop-color="#eeff92"/><stop offset="0.234" stop-color="#fffe92"/><stop offset="0.286" stop-color="#ffbc70"/><stop offset="0.360" stop-color="#ff8252"/><stop offset="0.474" stop-color="#ff4d37"/><stop offset="0.663" stop-color="#ff2020"/><stop offset="0.960" stop-color="#ff000f"/><stop offset="1.000" stop-color="#ff000d"/></linearGradient><linearGradient id="hsi27" gradientUnits="userSpaceOnUse" x1="1153" y1="0" x2="1503" y2="0"><stop offset="0.000" stop-color="#00ff87"/><stop offset="0.034" stop-color="#04ff89"/><stop offset="0.143" stop-color="#7dff92"/><stop offset="0.234" stop-color="#fffd9a"/><stop offset="0.286" stop-color="#ffbc76"/><stop offset="0.360" stop-color="#ff8157"/><stop offset="0.474" stop-color="#ff4d3b"/><stop offset="0.663" stop-color="#ff2022"/><stop offset="0.954" stop-color="#ff0011"/><stop offset="1.000" stop-color="#ff000f"/></linearGradient><linearGradient id="hsi28" gradientUnits="userSpaceOnUse" x1="1153" y1="0" x2="1503" y2="0"><stop offset="0.000" stop-color="#00ff8d"/><stop offset="0.034" stop-color="#03ff8f"/><stop offset="0.143" stop-color="#7dff99"/><stop offset="0.234" stop-color="#fffca1"/><stop offset="0.286" stop-color="#ffbb7c"/><stop offset="0.360" stop-color="#ff805b"/><stop offset="0.474" stop-color="#ff4c3e"/><stop offset="0.663" stop-color="#ff1f25"/><stop offset="0.949" stop-color="#ff0012"/><stop offset="1.000" stop-color="#ff0010"/></linearGradient><linearGradient id="hsi29" gradientUnits="userSpaceOnUse" x1="1153" y1="0" x2="1503" y2="0"><stop offset="0.000" stop-color="#00ff93"/><stop offset="0.034" stop-color="#02ff96"/><stop offset="0.143" stop-color="#7dffa0"/><stop offset="0.234" stop-color="#fffca8"/><stop offset="0.286" stop-color="#ffba82"/><stop offset="0.360" stop-color="#ff7f5f"/><stop offset="0.474" stop-color="#ff4b41"/><stop offset="0.663" stop-color="#ff1f27"/><stop offset="0.949" stop-color="#ff0014"/><stop offset="1.000" stop-color="#ff0012"/></linearGradient><linearGradient id="hsi30" gradientUnits="userSpaceOnUse" x1="1153" y1="0" x2="1503" y2="0"><stop offset="0.000" stop-color="#00ff99"/><stop offset="0.034" stop-color="#01ff9c"/><stop offset="0.137" stop-color="#76ffa6"/><stop offset="0.223" stop-color="#f1ffb1"/><stop offset="0.234" stop-color="#fffbb0"/><stop offset="0.286" stop-color="#ffb988"/><stop offset="0.360" stop-color="#ff7e64"/><stop offset="0.474" stop-color="#ff4a44"/><stop offset="0.663" stop-color="#ff1e29"/><stop offset="0.943" stop-color="#ff0016"/><stop offset="1.000" stop-color="#ff0013"/></linearGradient><linearGradient id="hsi31" gradientUnits="userSpaceOnUse" x1="1153" y1="0" x2="1503" y2="0"><stop offset="0.000" stop-color="#00ff9f"/><stop offset="0.034" stop-color="#00ffa2"/><stop offset="0.137" stop-color="#75ffae"/><stop offset="0.223" stop-color="#f1ffba"/><stop offset="0.234" stop-color="#fffab8"/><stop offset="0.286" stop-color="#ffb88e"/><stop offset="0.360" stop-color="#ff7d68"/><stop offset="0.474" stop-color="#ff4a47"/><stop offset="0.663" stop-color="#ff1d2b"/><stop offset="0.937" stop-color="#ff0017"/><stop offset="1.000" stop-color="#ff0014"/></linearGradient><linearGradient id="hsi32" gradientUnits="userSpaceOnUse" x1="1153" y1="0" x2="1503" y2="0"><stop offset="0.000" stop-color="#00ffa5"/><stop offset="0.034" stop-color="#00ffa9"/><stop offset="0.137" stop-color="#75ffb5"/><stop offset="0.223" stop-color="#f2ffc2"/><stop offset="0.234" stop-color="#fff9bf"/><stop offset="0.286" stop-color="#ffb793"/><stop offset="0.360" stop-color="#ff7c6d"/><stop offset="0.474" stop-color="#ff494b"/><stop offset="0.663" stop-color="#ff1d2e"/><stop offset="0.937" stop-color="#ff0019"/><stop offset="1.000" stop-color="#ff0016"/></linearGradient><linearGradient id="hsi33" gradientUnits="userSpaceOnUse" x1="1153" y1="0" x2="1503" y2="0"><stop offset="0.000" stop-color="#00ffab"/><stop offset="0.040" stop-color="#04ffb0"/><stop offset="0.143" stop-color="#7cffbd"/><stop offset="0.229" stop-color="#fdffcb"/><stop offset="0.286" stop-color="#ffb699"/><stop offset="0.360" stop-color="#ff7b71"/><stop offset="0.474" stop-color="#ff484e"/><stop offset="0.663" stop-color="#ff1c30"/><stop offset="0.931" stop-color="#ff001b"/><stop offset="1.000" stop-color="#ff0017"/></linearGradient><linearGradient id="hsi34" gradientUnits="userSpaceOnUse" x1="1153" y1="0" x2="1503" y2="0"><stop offset="0.000" stop-color="#00ffb2"/><stop offset="0.040" stop-color="#03ffb7"/><stop offset="0.143" stop-color="#7cffc5"/><stop offset="0.229" stop-color="#fdffd4"/><stop offset="0.280" stop-color="#ffbba4"/><stop offset="0.349" stop-color="#ff827b"/><stop offset="0.457" stop-color="#ff4d55"/><stop offset="0.634" stop-color="#ff2035"/><stop offset="0.914" stop-color="#ff001d"/><stop offset="1.000" stop-color="#ff0019"/></linearGradient><linearGradient id="hsi35" gradientUnits="userSpaceOnUse" x1="1153" y1="0" x2="1503" y2="0"><stop offset="0.000" stop-color="#00ffb8"/><stop offset="0.040" stop-color="#02ffbd"/><stop offset="0.143" stop-color="#7cffcd"/><stop offset="0.229" stop-color="#feffdd"/><stop offset="0.280" stop-color="#ffbaaa"/><stop offset="0.349" stop-color="#ff8180"/><stop offset="0.457" stop-color="#ff4c59"/><stop offset="0.634" stop-color="#ff2038"/><stop offset="0.909" stop-color="#ff001f"/><stop offset="1.000" stop-color="#ff001a"/></linearGradient><linearGradient id="hsi36" gradientUnits="userSpaceOnUse" x1="1153" y1="0" x2="1503" y2="0"><stop offset="0.000" stop-color="#00ffbf"/><stop offset="0.040" stop-color="#01ffc4"/><stop offset="0.143" stop-color="#7cffd5"/><stop offset="0.229" stop-color="#ffffe6"/><stop offset="0.274" stop-color="#ffbfb5"/><stop offset="0.343" stop-color="#ff8387"/><stop offset="0.446" stop-color="#ff505f"/><stop offset="0.617" stop-color="#ff223d"/><stop offset="0.897" stop-color="#ff0022"/><stop offset="1.000" stop-color="#ff001c"/></linearGradient><linearGradient id="hsi37" gradientUnits="userSpaceOnUse" x1="1153" y1="0" x2="1503" y2="0"><stop offset="0.000" stop-color="#00ffc5"/><stop offset="0.040" stop-color="#00ffcb"/><stop offset="0.137" stop-color="#74ffdb"/><stop offset="0.229" stop-color="#fffeee"/><stop offset="0.274" stop-color="#ffbebc"/><stop offset="0.343" stop-color="#ff828c"/><stop offset="0.446" stop-color="#ff4f63"/><stop offset="0.617" stop-color="#ff223f"/><stop offset="0.891" stop-color="#ff0024"/><stop offset="1.000" stop-color="#ff001d"/></linearGradient><linearGradient id="hsi38" gradientUnits="userSpaceOnUse" x1="1153" y1="0" x2="1503" y2="0"><stop offset="0.000" stop-color="#00ffcc"/><stop offset="0.040" stop-color="#00ffd2"/><stop offset="0.137" stop-color="#74ffe3"/><stop offset="0.217" stop-color="#edfff6"/><stop offset="0.229" stop-color="#fffdf7"/><stop offset="0.274" stop-color="#ffbdc2"/><stop offset="0.343" stop-color="#ff8291"/><stop offset="0.446" stop-color="#ff4e67"/><stop offset="0.617" stop-color="#ff2141"/><stop offset="0.891" stop-color="#ff0025"/><stop offset="1.000" stop-color="#ff001f"/></linearGradient><linearGradient id="hsi39" gradientUnits="userSpaceOnUse" x1="1153" y1="0" x2="1503" y2="0"><stop offset="0.000" stop-color="#00ffd3"/><stop offset="0.040" stop-color="#00ffd9"/><stop offset="0.131" stop-color="#6cffea"/><stop offset="0.229" stop-color="#fffcff"/><stop offset="0.274" stop-color="#ffbcc9"/><stop offset="0.343" stop-color="#ff8196"/><stop offset="0.446" stop-color="#ff4d6a"/><stop offset="0.617" stop-color="#ff2044"/><stop offset="0.886" stop-color="#ff0027"/><stop offset="1.000" stop-color="#ff0020"/></linearGradient><linearGradient id="hsi40" gradientUnits="userSpaceOnUse" x1="1153" y1="0" x2="1503" y2="0"><stop offset="0.000" stop-color="#00ffd9"/><stop offset="0.046" stop-color="#04ffe1"/><stop offset="0.143" stop-color="#7bfff5"/><stop offset="0.206" stop-color="#d6f9ff"/><stop offset="0.234" stop-color="#fff1ff"/><stop offset="0.286" stop-color="#ffafc5"/><stop offset="0.360" stop-color="#ff7591"/><stop offset="0.474" stop-color="#ff4265"/><stop offset="0.663" stop-color="#ff1840"/><stop offset="0.897" stop-color="#ff0028"/><stop offset="1.000" stop-color="#ff0021"/></linearGradient><linearGradient id="hsi41" gradientUnits="userSpaceOnUse" x1="1153" y1="0" x2="1503" y2="0"><stop offset="0.000" stop-color="#00ffe0"/><stop offset="0.046" stop-color="#03ffe9"/><stop offset="0.143" stop-color="#7bfffe"/><stop offset="0.240" stop-color="#ffe7ff"/><stop offset="0.291" stop-color="#ffa8c6"/><stop offset="0.366" stop-color="#ff7093"/><stop offset="0.486" stop-color="#ff3e65"/><stop offset="0.686" stop-color="#ff143f"/><stop offset="0.897" stop-color="#ff002a"/><stop offset="1.000" stop-color="#ff0023"/></linearGradient><linearGradient id="hsi42" gradientUnits="userSpaceOnUse" x1="1153" y1="0" x2="1503" y2="0"><stop offset="0.000" stop-color="#00ffe7"/><stop offset="0.046" stop-color="#02fff0"/><stop offset="0.131" stop-color="#69fbff"/><stop offset="0.246" stop-color="#ffddff"/><stop offset="0.303" stop-color="#ff9cc2"/><stop offset="0.383" stop-color="#ff668f"/><stop offset="0.509" stop-color="#ff3762"/><stop offset="0.726" stop-color="#ff0e3c"/><stop offset="0.903" stop-color="#ff002b"/><stop offset="1.000" stop-color="#ff0024"/></linearGradient><linearGradient id="hsi43" gradientUnits="userSpaceOnUse" x1="1153" y1="0" x2="1503" y2="0"><stop offset="0.000" stop-color="#00ffee"/><stop offset="0.046" stop-color="#01fff8"/><stop offset="0.114" stop-color="#51f7ff"/><stop offset="0.251" stop-color="#ffd4ff"/><stop offset="0.309" stop-color="#ff96c3"/><stop offset="0.394" stop-color="#ff5f8e"/><stop offset="0.531" stop-color="#ff3060"/><stop offset="0.766" stop-color="#ff0839"/><stop offset="0.920" stop-color="#ff002b"/><stop offset="1.000" stop-color="#ff0026"/></linearGradient><linearGradient id="hsi44" gradientUnits="userSpaceOnUse" x1="1153" y1="0" x2="1503" y2="0"><stop offset="0.000" stop-color="#00fff6"/><stop offset="0.046" stop-color="#00ffff"/><stop offset="0.223" stop-color="#d2d4ff"/><stop offset="0.257" stop-color="#ffcbff"/><stop offset="0.320" stop-color="#ff8cc0"/><stop offset="0.411" stop-color="#ff578a"/><stop offset="0.560" stop-color="#ff285c"/><stop offset="0.823" stop-color="#ff0235"/><stop offset="1.000" stop-color="#ff0027"/></linearGradient><linearGradient id="hsi45" gradientUnits="userSpaceOnUse" x1="1153" y1="0" x2="1503" y2="0"><stop offset="0.000" stop-color="#00fffd"/><stop offset="0.046" stop-color="#00f7ff"/><stop offset="0.217" stop-color="#c5cfff"/><stop offset="0.263" stop-color="#ffc3ff"/><stop offset="0.326" stop-color="#ff87c1"/><stop offset="0.417" stop-color="#ff538c"/><stop offset="0.566" stop-color="#ff265d"/><stop offset="0.829" stop-color="#ff0136"/><stop offset="1.000" stop-color="#ff0029"/></linearGradient><linearGradient id="hsi46" gradientUnits="userSpaceOnUse" x1="1153" y1="0" x2="1503" y2="0"><stop offset="0.000" stop-color="#00faff"/><stop offset="0.051" stop-color="#04efff"/><stop offset="0.240" stop-color="#dbc2ff"/><stop offset="0.269" stop-color="#ffbbff"/><stop offset="0.331" stop-color="#ff81c2"/><stop offset="0.423" stop-color="#ff508d"/><stop offset="0.571" stop-color="#ff245f"/><stop offset="0.834" stop-color="#ff0038"/><stop offset="1.000" stop-color="#ff002a"/></linearGradient><linearGradient id="hsi47" gradientUnits="userSpaceOnUse" x1="1153" y1="0" x2="1503" y2="0"><stop offset="0.000" stop-color="#00f3ff"/><stop offset="0.051" stop-color="#03e8ff"/><stop offset="0.246" stop-color="#dcbaff"/><stop offset="0.274" stop-color="#ffb3ff"/><stop offset="0.337" stop-color="#ff7cc3"/><stop offset="0.434" stop-color="#ff4b8c"/><stop offset="0.589" stop-color="#ff205e"/><stop offset="0.840" stop-color="#ff0039"/><stop offset="1.000" stop-color="#ff002c"/></linearGradient><linearGradient id="hsi48" gradientUnits="userSpaceOnUse" x1="1153" y1="0" x2="1503" y2="0"><stop offset="0.000" stop-color="#00ecff"/><stop offset="0.051" stop-color="#02e1ff"/><stop offset="0.251" stop-color="#ddb3ff"/><stop offset="0.280" stop-color="#feacff"/><stop offset="0.349" stop-color="#ff74c0"/><stop offset="0.446" stop-color="#ff458b"/><stop offset="0.606" stop-color="#ff1c5d"/><stop offset="0.840" stop-color="#ff003b"/><stop offset="1.000" stop-color="#ff002d"/></linearGradient><linearGradient id="hsi49" gradientUnits="userSpaceOnUse" x1="1153" y1="0" x2="1503" y2="0"><stop offset="0.000" stop-color="#00e6ff"/><stop offset="0.051" stop-color="#01dbff"/><stop offset="0.257" stop-color="#ddacff"/><stop offset="0.286" stop-color="#fea5ff"/><stop offset="0.354" stop-color="#ff6fc1"/><stop offset="0.457" stop-color="#ff408a"/><stop offset="0.623" stop-color="#ff195c"/><stop offset="0.846" stop-color="#ff003c"/><stop offset="1.000" stop-color="#ff002f"/></linearGradient><linearGradient id="hsi50" gradientUnits="userSpaceOnUse" x1="1153" y1="0" x2="1503" y2="0"><stop offset="0.000" stop-color="#00e0ff"/><stop offset="0.051" stop-color="#00d5ff"/><stop offset="0.257" stop-color="#d7a6ff"/><stop offset="0.291" stop-color="#fe9eff"/><stop offset="0.360" stop-color="#ff6bc2"/><stop offset="0.463" stop-color="#ff3e8c"/><stop offset="0.629" stop-color="#ff175d"/><stop offset="0.840" stop-color="#ff003e"/><stop offset="1.000" stop-color="#ff0030"/></linearGradient><linearGradient id="hsi51" gradientUnits="userSpaceOnUse" x1="1153" y1="0" x2="1503" y2="0"><stop offset="0.000" stop-color="#00daff"/><stop offset="0.057" stop-color="#04ceff"/><stop offset="0.269" stop-color="#de9eff"/><stop offset="0.297" stop-color="#fe98ff"/><stop offset="0.371" stop-color="#ff63bf"/><stop offset="0.480" stop-color="#ff3789"/><stop offset="0.651" stop-color="#ff135b"/><stop offset="0.840" stop-color="#ff0040"/><stop offset="1.000" stop-color="#ff0032"/></linearGradient><linearGradient id="hsi52" gradientUnits="userSpaceOnUse" x1="1153" y1="0" x2="1503" y2="0"><stop offset="0.000" stop-color="#00d4ff"/><stop offset="0.057" stop-color="#03c8ff"/><stop offset="0.274" stop-color="#df98ff"/><stop offset="0.303" stop-color="#fe91ff"/><stop offset="0.377" stop-color="#ff5fc0"/><stop offset="0.486" stop-color="#ff358a"/><stop offset="0.663" stop-color="#ff105c"/><stop offset="0.840" stop-color="#ff0042"/><stop offset="1.000" stop-color="#ff0033"/></linearGradient><linearGradient id="hsi53" gradientUnits="userSpaceOnUse" x1="1153" y1="0" x2="1503" y2="0"><stop offset="0.000" stop-color="#00cfff"/><stop offset="0.057" stop-color="#03c3ff"/><stop offset="0.274" stop-color="#d993ff"/><stop offset="0.309" stop-color="#fe8bff"/><stop offset="0.383" stop-color="#ff5bc1"/><stop offset="0.491" stop-color="#ff328b"/><stop offset="0.669" stop-color="#ff0f5d"/><stop offset="0.834" stop-color="#ff0044"/><stop offset="1.000" stop-color="#ff0034"/></linearGradient><linearGradient id="hsi54" gradientUnits="userSpaceOnUse" x1="1153" y1="0" x2="1503" y2="0"><stop offset="0.000" stop-color="#00c9ff"/><stop offset="0.057" stop-color="#02beff"/><stop offset="0.280" stop-color="#da8eff"/><stop offset="0.314" stop-color="#fe85ff"/><stop offset="0.389" stop-color="#ff58c2"/><stop offset="0.497" stop-color="#ff308d"/><stop offset="0.674" stop-color="#ff0d5e"/><stop offset="0.834" stop-color="#ff0046"/><stop offset="1.000" stop-color="#ff0036"/></linearGradient><linearGradient id="hsi55" gradientUnits="userSpaceOnUse" x1="1153" y1="0" x2="1503" y2="0"><stop offset="0.000" stop-color="#00c4ff"/><stop offset="0.057" stop-color="#01b9ff"/><stop offset="0.286" stop-color="#db88ff"/><stop offset="0.320" stop-color="#fe80ff"/><stop offset="0.400" stop-color="#ff51bf"/><stop offset="0.514" stop-color="#ff2b8a"/><stop offset="0.697" stop-color="#ff095c"/><stop offset="0.840" stop-color="#ff0047"/><stop offset="1.000" stop-color="#ff0037"/></linearGradient><linearGradient id="hsi56" gradientUnits="userSpaceOnUse" x1="1153" y1="0" x2="1503" y2="0"><stop offset="0.000" stop-color="#00bfff"/><stop offset="0.057" stop-color="#00b4ff"/><stop offset="0.291" stop-color="#db82ff"/><stop offset="0.326" stop-color="#fe7aff"/><stop offset="0.406" stop-color="#ff4ec0"/><stop offset="0.520" stop-color="#ff288b"/><stop offset="0.709" stop-color="#ff075c"/><stop offset="0.857" stop-color="#ff0047"/><stop offset="1.000" stop-color="#ff0039"/></linearGradient><linearGradient id="hsi57" gradientUnits="userSpaceOnUse" x1="1153" y1="0" x2="1503" y2="0"><stop offset="0.000" stop-color="#00bbff"/><stop offset="0.063" stop-color="#04aeff"/><stop offset="0.297" stop-color="#dc7dff"/><stop offset="0.331" stop-color="#fe75ff"/><stop offset="0.411" stop-color="#ff4ac1"/><stop offset="0.531" stop-color="#ff258a"/><stop offset="0.720" stop-color="#ff055d"/><stop offset="0.914" stop-color="#ff0043"/><stop offset="1.000" stop-color="#ff003a"/></linearGradient><linearGradient id="hsi58" gradientUnits="userSpaceOnUse" x1="1153" y1="0" x2="1503" y2="0"><stop offset="0.000" stop-color="#00b6ff"/><stop offset="0.063" stop-color="#03aaff"/><stop offset="0.303" stop-color="#dc78ff"/><stop offset="0.337" stop-color="#fe70ff"/><stop offset="0.423" stop-color="#ff45be"/><stop offset="0.543" stop-color="#ff218a"/><stop offset="0.737" stop-color="#ff035c"/><stop offset="1.000" stop-color="#ff003c"/></linearGradient><linearGradient id="hsi59" gradientUnits="userSpaceOnUse" x1="1153" y1="0" x2="1503" y2="0"><stop offset="0.000" stop-color="#00b2ff"/><stop offset="0.063" stop-color="#02a6ff"/><stop offset="0.309" stop-color="#dd73ff"/><stop offset="0.343" stop-color="#fe6bff"/><stop offset="0.429" stop-color="#ff42bf"/><stop offset="0.554" stop-color="#ff1e89"/><stop offset="0.754" stop-color="#ff005b"/><stop offset="1.000" stop-color="#ff003d"/></linearGradient><linearGradient id="hsi60" gradientUnits="userSpaceOnUse" x1="1153" y1="0" x2="1503" y2="0"><stop offset="0.000" stop-color="#00adff"/><stop offset="0.063" stop-color="#02a2ff"/><stop offset="0.314" stop-color="#de6eff"/><stop offset="0.354" stop-color="#ff64fa"/><stop offset="0.440" stop-color="#ff3cbd"/><stop offset="0.566" stop-color="#ff1b88"/><stop offset="0.771" stop-color="#ff005a"/><stop offset="1.000" stop-color="#ff003f"/></linearGradient><linearGradient id="hsi61" gradientUnits="userSpaceOnUse" x1="1153" y1="0" x2="1503" y2="0"><stop offset="0.000" stop-color="#00a9ff"/><stop offset="0.063" stop-color="#019eff"/><stop offset="0.314" stop-color="#d96bff"/><stop offset="0.360" stop-color="#ff5ffb"/><stop offset="0.446" stop-color="#ff3abe"/><stop offset="0.577" stop-color="#ff1888"/><stop offset="0.777" stop-color="#ff005c"/><stop offset="1.000" stop-color="#ff0040"/></linearGradient><linearGradient id="hsi62" gradientUnits="userSpaceOnUse" x1="1153" y1="0" x2="1503" y2="0"><stop offset="0.000" stop-color="#00a5ff"/><stop offset="0.063" stop-color="#009aff"/><stop offset="0.320" stop-color="#d967ff"/><stop offset="0.366" stop-color="#ff5bfb"/><stop offset="0.451" stop-color="#ff37be"/><stop offset="0.583" stop-color="#ff1689"/><stop offset="0.771" stop-color="#ff005e"/><stop offset="1.000" stop-color="#ff0042"/></linearGradient><linearGradient id="hsi63" gradientUnits="userSpaceOnUse" x1="1153" y1="0" x2="1503" y2="0"><stop offset="0.000" stop-color="#00a1ff"/><stop offset="0.069" stop-color="#0495ff"/><stop offset="0.331" stop-color="#df61ff"/><stop offset="0.371" stop-color="#ff57fb"/><stop offset="0.457" stop-color="#ff34bf"/><stop offset="0.589" stop-color="#ff158a"/><stop offset="0.766" stop-color="#ff0061"/><stop offset="1.000" stop-color="#ff0044"/></linearGradient><linearGradient id="hsi64" gradientUnits="userSpaceOnUse" x1="1153" y1="0" x2="1503" y2="0"><stop offset="0.000" stop-color="#009eff"/><stop offset="0.069" stop-color="#0391ff"/><stop offset="0.337" stop-color="#e05dff"/><stop offset="0.377" stop-color="#ff53fb"/><stop offset="0.469" stop-color="#ff2fbd"/><stop offset="0.606" stop-color="#ff1188"/><stop offset="0.766" stop-color="#ff0064"/><stop offset="1.000" stop-color="#ff0045"/></linearGradient><linearGradient id="hsi65" gradientUnits="userSpaceOnUse" x1="1153" y1="0" x2="1503" y2="0"><stop offset="0.000" stop-color="#009aff"/><stop offset="0.069" stop-color="#028eff"/><stop offset="0.337" stop-color="#db5aff"/><stop offset="0.383" stop-color="#ff4ffb"/><stop offset="0.474" stop-color="#ff2dbe"/><stop offset="0.611" stop-color="#ff0f89"/><stop offset="0.760" stop-color="#ff0067"/><stop offset="1.000" stop-color="#ff0047"/></linearGradient><linearGradient id="hsi66" gradientUnits="userSpaceOnUse" x1="1153" y1="0" x2="1503" y2="0"><stop offset="0.000" stop-color="#0097ff"/><stop offset="0.069" stop-color="#028aff"/><stop offset="0.343" stop-color="#db56ff"/><stop offset="0.389" stop-color="#ff4bfb"/><stop offset="0.480" stop-color="#ff2abf"/><stop offset="0.617" stop-color="#ff0d8a"/><stop offset="0.760" stop-color="#ff0069"/><stop offset="1.000" stop-color="#ff0048"/></linearGradient><linearGradient id="hsi67" gradientUnits="userSpaceOnUse" x1="1153" y1="0" x2="1503" y2="0"><stop offset="0.000" stop-color="#0093ff"/><stop offset="0.069" stop-color="#0187ff"/><stop offset="0.349" stop-color="#dc52ff"/><stop offset="0.394" stop-color="#ff48fb"/><stop offset="0.486" stop-color="#ff28bf"/><stop offset="0.629" stop-color="#ff0b89"/><stop offset="0.760" stop-color="#ff006b"/><stop offset="1.000" stop-color="#ff004a"/></linearGradient><linearGradient id="hsi68" gradientUnits="userSpaceOnUse" x1="1153" y1="0" x2="1503" y2="0"><stop offset="0.000" stop-color="#0090ff"/><stop offset="0.074" stop-color="#0483ff"/><stop offset="0.354" stop-color="#dc4eff"/><stop offset="0.400" stop-color="#ff44fb"/><stop offset="0.497" stop-color="#ff24bd"/><stop offset="0.640" stop-color="#ff0988"/><stop offset="0.766" stop-color="#ff006c"/><stop offset="1.000" stop-color="#ff004b"/></linearGradient><linearGradient id="hsi69" gradientUnits="userSpaceOnUse" x1="1153" y1="0" x2="1503" y2="0"><stop offset="0.000" stop-color="#008dff"/><stop offset="0.074" stop-color="#0480ff"/><stop offset="0.360" stop-color="#dd4bff"/><stop offset="0.406" stop-color="#ff41fb"/><stop offset="0.503" stop-color="#ff22be"/><stop offset="0.651" stop-color="#ff0688"/><stop offset="0.789" stop-color="#ff006a"/><stop offset="1.000" stop-color="#ff004d"/></linearGradient><linearGradient id="hsi70" gradientUnits="userSpaceOnUse" x1="1153" y1="0" x2="1503" y2="0"><stop offset="0.000" stop-color="#0089ff"/><stop offset="0.074" stop-color="#037dff"/><stop offset="0.366" stop-color="#dd47ff"/><stop offset="0.411" stop-color="#ff3dfb"/><stop offset="0.509" stop-color="#ff1fbf"/><stop offset="0.657" stop-color="#ff0589"/><stop offset="0.886" stop-color="#ff005c"/><stop offset="1.000" stop-color="#ff004e"/></linearGradient><linearGradient id="hsi71" gradientUnits="userSpaceOnUse" x1="1153" y1="0" x2="1503" y2="0"><stop offset="0.000" stop-color="#0086ff"/><stop offset="0.074" stop-color="#027aff"/><stop offset="0.371" stop-color="#de44ff"/><stop offset="0.417" stop-color="#ff3afb"/><stop offset="0.514" stop-color="#ff1dbf"/><stop offset="0.663" stop-color="#ff038a"/><stop offset="0.903" stop-color="#ff005c"/><stop offset="1.000" stop-color="#ff0050"/></linearGradient><linearGradient id="hsi72" gradientUnits="userSpaceOnUse" x1="1153" y1="0" x2="1503" y2="0"><stop offset="0.000" stop-color="#0083ff"/><stop offset="0.074" stop-color="#0277ff"/><stop offset="0.371" stop-color="#da42ff"/><stop offset="0.423" stop-color="#ff37fc"/><stop offset="0.526" stop-color="#ff1abd"/><stop offset="0.680" stop-color="#ff0188"/><stop offset="0.931" stop-color="#ff005a"/><stop offset="1.000" stop-color="#ff0051"/></linearGradient><linearGradient id="hsi73" gradientUnits="userSpaceOnUse" x1="1153" y1="0" x2="1503" y2="0"><stop offset="0.000" stop-color="#0081ff"/><stop offset="0.074" stop-color="#0174ff"/><stop offset="0.377" stop-color="#da3eff"/><stop offset="0.429" stop-color="#ff34fc"/><stop offset="0.531" stop-color="#ff18be"/><stop offset="0.686" stop-color="#ff0089"/><stop offset="0.937" stop-color="#ff005a"/><stop offset="1.000" stop-color="#ff0053"/></linearGradient><linearGradient id="hsi74" gradientUnits="userSpaceOnUse" x1="1153" y1="0" x2="1503" y2="0"><stop offset="0.000" stop-color="#007eff"/><stop offset="0.080" stop-color="#0471ff"/><stop offset="0.389" stop-color="#df3aff"/><stop offset="0.434" stop-color="#ff31fc"/><stop offset="0.537" stop-color="#ff16bf"/><stop offset="0.691" stop-color="#ff008a"/><stop offset="0.943" stop-color="#ff005b"/><stop offset="1.000" stop-color="#ff0054"/></linearGradient><linearGradient id="hsi75" gradientUnits="userSpaceOnUse" x1="1153" y1="0" x2="1503" y2="0"><stop offset="0.000" stop-color="#007bff"/><stop offset="0.080" stop-color="#036eff"/><stop offset="0.394" stop-color="#df37ff"/><stop offset="0.440" stop-color="#ff2efc"/><stop offset="0.543" stop-color="#ff14c0"/><stop offset="0.697" stop-color="#ff008b"/><stop offset="0.949" stop-color="#ff005c"/><stop offset="1.000" stop-color="#ff0056"/></linearGradient><linearGradient id="hsi76" gradientUnits="userSpaceOnUse" x1="1153" y1="0" x2="1503" y2="0"><stop offset="0.000" stop-color="#0078ff"/><stop offset="0.080" stop-color="#036cff"/><stop offset="0.394" stop-color="#dc35ff"/><stop offset="0.446" stop-color="#ff2bfc"/><stop offset="0.554" stop-color="#ff11be"/><stop offset="0.691" stop-color="#ff008e"/><stop offset="0.937" stop-color="#ff0060"/><stop offset="1.000" stop-color="#ff0058"/></linearGradient><linearGradient id="hsi77" gradientUnits="userSpaceOnUse" x1="1153" y1="0" x2="1503" y2="0"><stop offset="0.000" stop-color="#0076ff"/><stop offset="0.080" stop-color="#0269ff"/><stop offset="0.400" stop-color="#dc32ff"/><stop offset="0.451" stop-color="#ff28fc"/><stop offset="0.560" stop-color="#ff0fbe"/><stop offset="0.691" stop-color="#ff0091"/><stop offset="0.931" stop-color="#ff0062"/><stop offset="1.000" stop-color="#ff0059"/></linearGradient><linearGradient id="hsi78" gradientUnits="userSpaceOnUse" x1="1153" y1="0" x2="1503" y2="0"><stop offset="0.000" stop-color="#0073ff"/><stop offset="0.080" stop-color="#0267ff"/><stop offset="0.406" stop-color="#dc2fff"/><stop offset="0.457" stop-color="#ff26fc"/><stop offset="0.566" stop-color="#ff0dbf"/><stop offset="0.686" stop-color="#ff0095"/><stop offset="0.920" stop-color="#ff0065"/><stop offset="1.000" stop-color="#ff005b"/></linearGradient><linearGradient id="hsi79" gradientUnits="userSpaceOnUse" x1="1153" y1="0" x2="1503" y2="0"><stop offset="0.000" stop-color="#0071ff"/><stop offset="0.086" stop-color="#0464ff"/><stop offset="0.417" stop-color="#e12cff"/><stop offset="0.463" stop-color="#ff23fc"/><stop offset="0.571" stop-color="#ff0bc0"/><stop offset="0.686" stop-color="#ff0097"/><stop offset="0.920" stop-color="#ff0067"/><stop offset="1.000" stop-color="#ff005c"/></linearGradient><linearGradient id="hsi80" gradientUnits="userSpaceOnUse" x1="1153" y1="0" x2="1503" y2="0"><stop offset="0.000" stop-color="#006fff"/><stop offset="0.086" stop-color="#0461ff"/><stop offset="0.417" stop-color="#dd2aff"/><stop offset="0.469" stop-color="#ff20fc"/><stop offset="0.583" stop-color="#ff08be"/><stop offset="0.691" stop-color="#ff0098"/><stop offset="0.926" stop-color="#ff0068"/><stop offset="1.000" stop-color="#ff005e"/></linearGradient><linearGradient id="hsi81" gradientUnits="userSpaceOnUse" x1="1153" y1="0" x2="1503" y2="0"><stop offset="0.000" stop-color="#006cff"/><stop offset="0.086" stop-color="#035fff"/><stop offset="0.423" stop-color="#de27ff"/><stop offset="0.474" stop-color="#ff1efc"/><stop offset="0.589" stop-color="#ff07be"/><stop offset="0.703" stop-color="#ff0097"/><stop offset="0.943" stop-color="#ff0067"/><stop offset="1.000" stop-color="#ff005f"/></linearGradient><linearGradient id="hsi82" gradientUnits="userSpaceOnUse" x1="1153" y1="0" x2="1503" y2="0"><stop offset="0.000" stop-color="#006aff"/><stop offset="0.086" stop-color="#035dff"/><stop offset="0.429" stop-color="#de25ff"/><stop offset="0.480" stop-color="#ff1bfc"/><stop offset="0.594" stop-color="#ff05bf"/><stop offset="0.766" stop-color="#ff008a"/><stop offset="1.000" stop-color="#ff0061"/></linearGradient><linearGradient id="hsi83" gradientUnits="userSpaceOnUse" x1="1153" y1="0" x2="1503" y2="0"><stop offset="0.000" stop-color="#0068ff"/><stop offset="0.086" stop-color="#025bff"/><stop offset="0.434" stop-color="#de22ff"/><stop offset="0.486" stop-color="#ff19fc"/><stop offset="0.600" stop-color="#ff03c0"/><stop offset="0.771" stop-color="#ff008b"/><stop offset="1.000" stop-color="#ff0062"/></linearGradient><linearGradient id="hsi84" gradientUnits="userSpaceOnUse" x1="1153" y1="0" x2="1503" y2="0"><stop offset="0.000" stop-color="#0066ff"/><stop offset="0.086" stop-color="#0259ff"/><stop offset="0.434" stop-color="#db21ff"/><stop offset="0.491" stop-color="#ff17fc"/><stop offset="0.606" stop-color="#ff02c0"/><stop offset="0.783" stop-color="#ff008a"/><stop offset="1.000" stop-color="#ff0064"/></linearGradient><linearGradient id="hsi85" gradientUnits="userSpaceOnUse" x1="1153" y1="0" x2="1503" y2="0"><stop offset="0.000" stop-color="#0063ff"/><stop offset="0.091" stop-color="#0456ff"/><stop offset="0.446" stop-color="#df1eff"/><stop offset="0.497" stop-color="#ff14fc"/><stop offset="0.617" stop-color="#ff00bf"/><stop offset="0.800" stop-color="#ff0088"/><stop offset="1.000" stop-color="#ff0066"/></linearGradient><linearGradient id="hsi86" gradientUnits="userSpaceOnUse" x1="1153" y1="0" x2="1503" y2="0"><stop offset="0.000" stop-color="#0061ff"/><stop offset="0.091" stop-color="#0454ff"/><stop offset="0.451" stop-color="#df1bff"/><stop offset="0.503" stop-color="#ff12fc"/><stop offset="0.623" stop-color="#ff00bf"/><stop offset="0.806" stop-color="#ff0089"/><stop offset="1.000" stop-color="#ff0067"/></linearGradient><linearGradient id="hsi87" gradientUnits="userSpaceOnUse" x1="1153" y1="0" x2="1503" y2="0"><stop offset="0.000" stop-color="#005fff"/><stop offset="0.091" stop-color="#0352ff"/><stop offset="0.451" stop-color="#dc1aff"/><stop offset="0.509" stop-color="#ff10fd"/><stop offset="0.629" stop-color="#ff00c0"/><stop offset="0.811" stop-color="#ff008a"/><stop offset="1.000" stop-color="#ff0069"/></linearGradient><linearGradient id="hsi88" gradientUnits="userSpaceOnUse" x1="1153" y1="0" x2="1503" y2="0"><stop offset="0.000" stop-color="#005dff"/><stop offset="0.091" stop-color="#0350ff"/><stop offset="0.457" stop-color="#dc18ff"/><stop offset="0.514" stop-color="#ff0efd"/><stop offset="0.623" stop-color="#ff00c5"/><stop offset="0.800" stop-color="#ff008e"/><stop offset="1.000" stop-color="#ff006a"/></linearGradient><linearGradient id="hsi89" gradientUnits="userSpaceOnUse" x1="1153" y1="0" x2="1503" y2="0"><stop offset="0.000" stop-color="#005cff"/><stop offset="0.091" stop-color="#024fff"/><stop offset="0.463" stop-color="#dd15ff"/><stop offset="0.520" stop-color="#ff0cfd"/><stop offset="0.623" stop-color="#ff00c8"/><stop offset="0.800" stop-color="#ff0091"/><stop offset="1.000" stop-color="#ff006c"/></linearGradient><linearGradient id="hsi90" gradientUnits="userSpaceOnUse" x1="1153" y1="0" x2="1503" y2="0"><stop offset="0.000" stop-color="#005aff"/><stop offset="0.091" stop-color="#014dff"/><stop offset="0.469" stop-color="#dd13ff"/><stop offset="0.526" stop-color="#ff0afd"/><stop offset="0.623" stop-color="#ff00cb"/><stop offset="0.794" stop-color="#ff0094"/><stop offset="1.000" stop-color="#ff006e"/></linearGradient><linearGradient id="hsi91" gradientUnits="userSpaceOnUse" x1="1153" y1="0" x2="1503" y2="0"><stop offset="0.000" stop-color="#0058ff"/><stop offset="0.097" stop-color="#044aff"/><stop offset="0.474" stop-color="#de11ff"/><stop offset="0.531" stop-color="#ff08fd"/><stop offset="0.629" stop-color="#ff00cb"/><stop offset="0.806" stop-color="#ff0093"/><stop offset="1.000" stop-color="#ff006f"/></linearGradient><linearGradient id="hsi92" gradientUnits="userSpaceOnUse" x1="1153" y1="0" x2="1503" y2="0"><stop offset="0.000" stop-color="#0056ff"/><stop offset="0.097" stop-color="#0349ff"/><stop offset="0.480" stop-color="#de0fff"/><stop offset="0.537" stop-color="#ff06fd"/><stop offset="0.651" stop-color="#ff00c5"/><stop offset="0.840" stop-color="#ff008e"/><stop offset="1.000" stop-color="#ff0071"/></linearGradient><linearGradient id="hsi93" gradientUnits="userSpaceOnUse" x1="1153" y1="0" x2="1503" y2="0"><stop offset="0.000" stop-color="#0054ff"/><stop offset="0.097" stop-color="#0347ff"/><stop offset="0.486" stop-color="#de0dff"/><stop offset="0.543" stop-color="#ff04fd"/><stop offset="0.674" stop-color="#ff00bf"/><stop offset="0.869" stop-color="#ff008a"/><stop offset="1.000" stop-color="#ff0072"/></linearGradient><linearGradient id="hsi94" gradientUnits="userSpaceOnUse" x1="1153" y1="0" x2="1503" y2="0"><stop offset="0.000" stop-color="#0053ff"/><stop offset="0.097" stop-color="#0245ff"/><stop offset="0.491" stop-color="#de0bff"/><stop offset="0.549" stop-color="#ff02fd"/><stop offset="0.680" stop-color="#ff00bf"/><stop offset="0.880" stop-color="#ff0089"/><stop offset="1.000" stop-color="#ff0074"/></linearGradient><linearGradient id="hsi95" gradientUnits="userSpaceOnUse" x1="1153" y1="0" x2="1503" y2="0"><stop offset="0.000" stop-color="#0051ff"/><stop offset="0.097" stop-color="#0244ff"/><stop offset="0.491" stop-color="#db0aff"/><stop offset="0.554" stop-color="#ff00fd"/><stop offset="0.686" stop-color="#ff00c0"/><stop offset="0.886" stop-color="#ff008a"/><stop offset="1.000" stop-color="#ff0076"/></linearGradient><linearGradient id="hsi96" gradientUnits="userSpaceOnUse" x1="1153" y1="0" x2="1503" y2="0"><stop offset="0.000" stop-color="#004fff"/><stop offset="0.103" stop-color="#0442ff"/><stop offset="0.503" stop-color="#df07ff"/><stop offset="0.560" stop-color="#ff00fd"/><stop offset="0.691" stop-color="#ff00c0"/><stop offset="0.891" stop-color="#ff008b"/><stop offset="1.000" stop-color="#ff0077"/></linearGradient><linearGradient id="hsi97" gradientUnits="userSpaceOnUse" x1="1153" y1="0" x2="1503" y2="0"><stop offset="0.000" stop-color="#004eff"/><stop offset="0.103" stop-color="#0440ff"/><stop offset="0.509" stop-color="#df06ff"/><stop offset="0.566" stop-color="#ff00fd"/><stop offset="0.703" stop-color="#ff00bf"/><stop offset="0.909" stop-color="#ff0089"/><stop offset="1.000" stop-color="#ff0079"/></linearGradient><linearGradient id="hsi98" gradientUnits="userSpaceOnUse" x1="1153" y1="0" x2="1503" y2="0"><stop offset="0.000" stop-color="#004cff"/><stop offset="0.103" stop-color="#033fff"/><stop offset="0.514" stop-color="#e004ff"/><stop offset="0.571" stop-color="#ff00fd"/><stop offset="0.709" stop-color="#ff00bf"/><stop offset="0.914" stop-color="#ff008a"/><stop offset="1.000" stop-color="#ff007b"/></linearGradient><linearGradient id="hsi99" gradientUnits="userSpaceOnUse" x1="1153" y1="0" x2="1503" y2="0"><stop offset="0.000" stop-color="#004aff"/><stop offset="0.103" stop-color="#033dff"/><stop offset="0.514" stop-color="#dd03ff"/><stop offset="0.577" stop-color="#ff00fd"/><stop offset="0.714" stop-color="#ff00c0"/><stop offset="0.920" stop-color="#ff008a"/><stop offset="1.000" stop-color="#ff007c"/></linearGradient><linearGradient id="hsi100" gradientUnits="userSpaceOnUse" x1="1153" y1="0" x2="1503" y2="0"><stop offset="0.000" stop-color="#0049ff"/><stop offset="0.103" stop-color="#023cff"/><stop offset="0.520" stop-color="#dd01ff"/><stop offset="0.583" stop-color="#ff00fd"/><stop offset="0.720" stop-color="#ff00c0"/><stop offset="0.931" stop-color="#ff008a"/><stop offset="1.000" stop-color="#ff007e"/></linearGradient><linearGradient id="hsi101" gradientUnits="userSpaceOnUse" x1="1153" y1="0" x2="1503" y2="0"><stop offset="0.000" stop-color="#0047ff"/><stop offset="0.103" stop-color="#023aff"/><stop offset="0.526" stop-color="#dd00ff"/><stop offset="0.589" stop-color="#ff00fd"/><stop offset="0.731" stop-color="#ff00bf"/><stop offset="0.943" stop-color="#ff008a"/><stop offset="1.000" stop-color="#ff007f"/></linearGradient><linearGradient id="hsi102" gradientUnits="userSpaceOnUse" x1="1153" y1="0" x2="1503" y2="0"><stop offset="0.000" stop-color="#0046ff"/><stop offset="0.109" stop-color="#0438ff"/><stop offset="0.531" stop-color="#de00ff"/><stop offset="0.594" stop-color="#ff00fd"/><stop offset="0.737" stop-color="#ff00bf"/><stop offset="0.954" stop-color="#ff0089"/><stop offset="1.000" stop-color="#ff0081"/></linearGradient><linearGradient id="hsi103" gradientUnits="userSpaceOnUse" x1="1153" y1="0" x2="1503" y2="0"><stop offset="0.000" stop-color="#0045ff"/><stop offset="0.109" stop-color="#0437ff"/><stop offset="0.537" stop-color="#de00ff"/><stop offset="0.600" stop-color="#ff00fd"/><stop offset="0.743" stop-color="#ff00c0"/><stop offset="0.960" stop-color="#ff008a"/><stop offset="1.000" stop-color="#ff0083"/></linearGradient><linearGradient id="hsi104" gradientUnits="userSpaceOnUse" x1="1153" y1="0" x2="1503" y2="0"><stop offset="0.000" stop-color="#0043ff"/><stop offset="0.109" stop-color="#0336ff"/><stop offset="0.537" stop-color="#db00ff"/><stop offset="0.606" stop-color="#ff00fd"/><stop offset="0.749" stop-color="#ff00c0"/><stop offset="0.966" stop-color="#ff008a"/><stop offset="1.000" stop-color="#ff0084"/></linearGradient><linearGradient id="hsi105" gradientUnits="userSpaceOnUse" x1="1153" y1="0" x2="1503" y2="0"><stop offset="0.000" stop-color="#0042ff"/><stop offset="0.109" stop-color="#0334ff"/><stop offset="0.531" stop-color="#d500ff"/><stop offset="0.611" stop-color="#ff00fd"/><stop offset="0.760" stop-color="#ff00bf"/><stop offset="0.983" stop-color="#ff0089"/><stop offset="1.000" stop-color="#ff0086"/></linearGradient><linearGradient id="hsi106" gradientUnits="userSpaceOnUse" x1="1153" y1="0" x2="1503" y2="0"><stop offset="0.000" stop-color="#0040ff"/><stop offset="0.109" stop-color="#0233ff"/><stop offset="0.526" stop-color="#d000ff"/><stop offset="0.617" stop-color="#ff00fd"/><stop offset="0.766" stop-color="#ff00c0"/><stop offset="0.989" stop-color="#ff008a"/><stop offset="1.000" stop-color="#ff0088"/></linearGradient><linearGradient id="hsi107" gradientUnits="userSpaceOnUse" x1="1153" y1="0" x2="1503" y2="0"><stop offset="0.000" stop-color="#003fff"/><stop offset="0.109" stop-color="#0232ff"/><stop offset="0.520" stop-color="#ca00ff"/><stop offset="0.623" stop-color="#ff00fd"/><stop offset="0.771" stop-color="#ff00c0"/><stop offset="0.994" stop-color="#ff008a"/><stop offset="1.000" stop-color="#ff0089"/></linearGradient><linearGradient id="hsi108" gradientUnits="userSpaceOnUse" x1="1153" y1="0" x2="1503" y2="0"><stop offset="0.000" stop-color="#003eff"/><stop offset="0.114" stop-color="#0430ff"/><stop offset="0.514" stop-color="#c500ff"/><stop offset="0.629" stop-color="#ff00fd"/><stop offset="0.777" stop-color="#ff00c0"/><stop offset="1.000" stop-color="#ff008b"/></linearGradient><linearGradient id="hsi109" gradientUnits="userSpaceOnUse" x1="1153" y1="0" x2="1503" y2="0"><stop offset="0.000" stop-color="#003cff"/><stop offset="0.114" stop-color="#042fff"/><stop offset="0.509" stop-color="#bf00ff"/><stop offset="0.634" stop-color="#ff00fd"/><stop offset="0.789" stop-color="#ff00bf"/><stop offset="1.000" stop-color="#ff008d"/></linearGradient><linearGradient id="hsi110" gradientUnits="userSpaceOnUse" x1="1153" y1="0" x2="1503" y2="0"><stop offset="0.000" stop-color="#003bff"/><stop offset="0.114" stop-color="#032eff"/><stop offset="0.503" stop-color="#ba00ff"/><stop offset="0.640" stop-color="#ff00fd"/><stop offset="0.794" stop-color="#ff00c0"/><stop offset="1.000" stop-color="#ff008e"/></linearGradient><linearGradient id="hsi111" gradientUnits="userSpaceOnUse" x1="1153" y1="0" x2="1503" y2="0"><stop offset="0.000" stop-color="#003aff"/><stop offset="0.114" stop-color="#032dff"/><stop offset="0.497" stop-color="#b500ff"/><stop offset="0.646" stop-color="#ff00fe"/><stop offset="0.800" stop-color="#ff00c0"/><stop offset="1.000" stop-color="#ff0090"/></linearGradient><linearGradient id="hsi112" gradientUnits="userSpaceOnUse" x1="1153" y1="0" x2="1503" y2="0"><stop offset="0.000" stop-color="#0039ff"/><stop offset="0.114" stop-color="#022bff"/><stop offset="0.491" stop-color="#b000ff"/><stop offset="0.651" stop-color="#ff00fe"/><stop offset="0.806" stop-color="#ff00c0"/><stop offset="1.000" stop-color="#ff0092"/></linearGradient><linearGradient id="hsi113" gradientUnits="userSpaceOnUse" x1="1153" y1="0" x2="1503" y2="0"><stop offset="0.000" stop-color="#0038ff"/><stop offset="0.120" stop-color="#042aff"/><stop offset="0.486" stop-color="#ab00ff"/><stop offset="0.663" stop-color="#ff00fb"/><stop offset="0.823" stop-color="#ff00bd"/><stop offset="1.000" stop-color="#ff0093"/></linearGradient><linearGradient id="hsi114" gradientUnits="userSpaceOnUse" x1="1153" y1="0" x2="1503" y2="0"><stop offset="0.000" stop-color="#0036ff"/><stop offset="0.120" stop-color="#0429ff"/><stop offset="0.480" stop-color="#a700ff"/><stop offset="0.669" stop-color="#ff00fb"/><stop offset="0.829" stop-color="#ff00be"/><stop offset="1.000" stop-color="#ff0095"/></linearGradient><linearGradient id="hsi115" gradientUnits="userSpaceOnUse" x1="1153" y1="0" x2="1503" y2="0"><stop offset="0.000" stop-color="#0035ff"/><stop offset="0.120" stop-color="#0328ff"/><stop offset="0.480" stop-color="#a500ff"/><stop offset="0.674" stop-color="#ff00fb"/><stop offset="0.834" stop-color="#ff00be"/><stop offset="1.000" stop-color="#ff0097"/></linearGradient><linearGradient id="hsi116" gradientUnits="userSpaceOnUse" x1="1153" y1="0" x2="1503" y2="0"><stop offset="0.000" stop-color="#0034ff"/><stop offset="0.120" stop-color="#0326ff"/><stop offset="0.474" stop-color="#a000ff"/><stop offset="0.680" stop-color="#ff00fb"/><stop offset="0.846" stop-color="#ff00bd"/><stop offset="1.000" stop-color="#ff0098"/></linearGradient><linearGradient id="hsi117" gradientUnits="userSpaceOnUse" x1="1153" y1="0" x2="1503" y2="0"><stop offset="0.000" stop-color="#0033ff"/><stop offset="0.120" stop-color="#0325ff"/><stop offset="0.469" stop-color="#9c00ff"/><stop offset="0.686" stop-color="#ff00fb"/><stop offset="0.851" stop-color="#ff00be"/><stop offset="1.000" stop-color="#ff009a"/></linearGradient><linearGradient id="hsi118" gradientUnits="userSpaceOnUse" x1="1153" y1="0" x2="1503" y2="0"><stop offset="0.000" stop-color="#0032ff"/><stop offset="0.120" stop-color="#0224ff"/><stop offset="0.463" stop-color="#9700ff"/><stop offset="0.691" stop-color="#ff00fb"/><stop offset="0.857" stop-color="#ff00be"/><stop offset="1.000" stop-color="#ff009c"/></linearGradient><linearGradient id="hsi119" gradientUnits="userSpaceOnUse" x1="1153" y1="0" x2="1503" y2="0"><stop offset="0.000" stop-color="#0031ff"/><stop offset="0.126" stop-color="#0423ff"/><stop offset="0.457" stop-color="#9300ff"/><stop offset="0.697" stop-color="#ff00fb"/><stop offset="0.863" stop-color="#ff00be"/><stop offset="1.000" stop-color="#ff009d"/></linearGradient><linearGradient id="hsi120" gradientUnits="userSpaceOnUse" x1="1153" y1="0" x2="1503" y2="0"><stop offset="0.000" stop-color="#0030ff"/><stop offset="0.126" stop-color="#0422ff"/><stop offset="0.451" stop-color="#8f00ff"/><stop offset="0.703" stop-color="#ff00fb"/><stop offset="0.874" stop-color="#ff00bd"/><stop offset="1.000" stop-color="#ff009f"/></linearGradient><linearGradient id="hsi121" gradientUnits="userSpaceOnUse" x1="1153" y1="0" x2="1503" y2="0"><stop offset="0.000" stop-color="#002fff"/><stop offset="0.126" stop-color="#0321ff"/><stop offset="0.446" stop-color="#8a00ff"/><stop offset="0.709" stop-color="#ff00fb"/><stop offset="0.880" stop-color="#ff00be"/><stop offset="1.000" stop-color="#ff00a1"/></linearGradient><linearGradient id="hsi122" gradientUnits="userSpaceOnUse" x1="1153" y1="0" x2="1503" y2="0"><stop offset="0.000" stop-color="#002eff"/><stop offset="0.126" stop-color="#0320ff"/><stop offset="0.440" stop-color="#8600ff"/><stop offset="0.714" stop-color="#ff00fb"/><stop offset="0.886" stop-color="#ff00be"/><stop offset="1.000" stop-color="#ff00a3"/></linearGradient><linearGradient id="hsi123" gradientUnits="userSpaceOnUse" x1="1153" y1="0" x2="1503" y2="0"><stop offset="0.000" stop-color="#002dff"/><stop offset="0.126" stop-color="#031fff"/><stop offset="0.434" stop-color="#8200ff"/><stop offset="0.720" stop-color="#ff00fb"/><stop offset="0.891" stop-color="#ff00bf"/><stop offset="1.000" stop-color="#ff00a4"/></linearGradient><linearGradient id="hsi124" gradientUnits="userSpaceOnUse" x1="1153" y1="0" x2="1503" y2="0"><stop offset="0.000" stop-color="#002cff"/><stop offset="0.126" stop-color="#021eff"/><stop offset="0.429" stop-color="#7e00ff"/><stop offset="0.726" stop-color="#ff00fb"/><stop offset="0.903" stop-color="#ff00bd"/><stop offset="1.000" stop-color="#ff00a6"/></linearGradient><linearGradient id="hsi125" gradientUnits="userSpaceOnUse" x1="1153" y1="0" x2="1503" y2="0"><stop offset="0.000" stop-color="#002bff"/><stop offset="0.131" stop-color="#041dff"/><stop offset="0.429" stop-color="#7d00ff"/><stop offset="0.731" stop-color="#ff00fb"/><stop offset="0.909" stop-color="#ff00be"/><stop offset="1.000" stop-color="#ff00a8"/></linearGradient><linearGradient id="hsi126" gradientUnits="userSpaceOnUse" x1="1153" y1="0" x2="1503" y2="0"><stop offset="0.000" stop-color="#002aff"/><stop offset="0.131" stop-color="#041cff"/><stop offset="0.423" stop-color="#7900ff"/><stop offset="0.737" stop-color="#ff00fb"/><stop offset="0.914" stop-color="#ff00be"/><stop offset="1.000" stop-color="#ff00a9"/></linearGradient><linearGradient id="hsi127" gradientUnits="userSpaceOnUse" x1="1153" y1="0" x2="1503" y2="0"><stop offset="0.000" stop-color="#0029ff"/><stop offset="0.131" stop-color="#031bff"/><stop offset="0.417" stop-color="#7500ff"/><stop offset="0.743" stop-color="#ff00fb"/><stop offset="0.920" stop-color="#ff00bf"/><stop offset="1.000" stop-color="#ff00ab"/></linearGradient><linearGradient id="hsi128" gradientUnits="userSpaceOnUse" x1="1153" y1="0" x2="1503" y2="0"><stop offset="0.000" stop-color="#0028ff"/><stop offset="0.131" stop-color="#031aff"/><stop offset="0.411" stop-color="#7200ff"/><stop offset="0.749" stop-color="#ff00fb"/><stop offset="0.931" stop-color="#ff00be"/><stop offset="1.000" stop-color="#ff00ad"/></linearGradient><linearGradient id="hsi129" gradientUnits="userSpaceOnUse" x1="1153" y1="0" x2="1503" y2="0"><stop offset="0.000" stop-color="#0027ff"/><stop offset="0.131" stop-color="#0219ff"/><stop offset="0.406" stop-color="#6e00ff"/><stop offset="0.754" stop-color="#ff00fc"/><stop offset="0.937" stop-color="#ff00be"/><stop offset="1.000" stop-color="#ff00af"/></linearGradient><linearGradient id="hsi130" gradientUnits="userSpaceOnUse" x1="1153" y1="0" x2="1503" y2="0"><stop offset="0.000" stop-color="#0026ff"/><stop offset="0.137" stop-color="#0418ff"/><stop offset="0.400" stop-color="#6a00ff"/><stop offset="0.760" stop-color="#ff00fc"/><stop offset="0.943" stop-color="#ff00be"/><stop offset="1.000" stop-color="#ff00b0"/></linearGradient><linearGradient id="hsi131" gradientUnits="userSpaceOnUse" x1="1153" y1="0" x2="1503" y2="0"><stop offset="0.000" stop-color="#0025ff"/><stop offset="0.137" stop-color="#0417ff"/><stop offset="0.394" stop-color="#6700ff"/><stop offset="0.766" stop-color="#ff00fc"/><stop offset="0.949" stop-color="#ff00bf"/><stop offset="1.000" stop-color="#ff00b2"/></linearGradient><linearGradient id="hsi132" gradientUnits="userSpaceOnUse" x1="1153" y1="0" x2="1503" y2="0"><stop offset="0.000" stop-color="#0024ff"/><stop offset="0.137" stop-color="#0416ff"/><stop offset="0.394" stop-color="#6600ff"/><stop offset="0.771" stop-color="#ff00fc"/><stop offset="0.960" stop-color="#ff00be"/><stop offset="1.000" stop-color="#ff00b4"/></linearGradient><linearGradient id="hsi133" gradientUnits="userSpaceOnUse" x1="1153" y1="0" x2="1503" y2="0"><stop offset="0.000" stop-color="#0024ff"/><stop offset="0.137" stop-color="#0316ff"/><stop offset="0.389" stop-color="#6200ff"/><stop offset="0.777" stop-color="#ff00fc"/><stop offset="0.966" stop-color="#ff00be"/><stop offset="1.000" stop-color="#ff00b6"/></linearGradient><linearGradient id="hsi134" gradientUnits="userSpaceOnUse" x1="1153" y1="0" x2="1503" y2="0"><stop offset="0.000" stop-color="#0023ff"/><stop offset="0.137" stop-color="#0315ff"/><stop offset="0.383" stop-color="#5f00ff"/><stop offset="0.783" stop-color="#ff00fc"/><stop offset="0.971" stop-color="#ff00be"/><stop offset="1.000" stop-color="#ff00b7"/></linearGradient><linearGradient id="hsi135" gradientUnits="userSpaceOnUse" x1="1153" y1="0" x2="1503" y2="0"><stop offset="0.000" stop-color="#0022ff"/><stop offset="0.143" stop-color="#0414ff"/><stop offset="0.377" stop-color="#5c00ff"/><stop offset="0.789" stop-color="#ff00fc"/><stop offset="0.977" stop-color="#ff00bf"/><stop offset="1.000" stop-color="#ff00b9"/></linearGradient><linearGradient id="hsi136" gradientUnits="userSpaceOnUse" x1="1153" y1="0" x2="1503" y2="0"><stop offset="0.000" stop-color="#0021ff"/><stop offset="0.143" stop-color="#0413ff"/><stop offset="0.371" stop-color="#5900ff"/><stop offset="0.794" stop-color="#ff00fc"/><stop offset="0.989" stop-color="#ff00be"/><stop offset="1.000" stop-color="#ff00bb"/></linearGradient><linearGradient id="hsi137" gradientUnits="userSpaceOnUse" x1="1153" y1="0" x2="1503" y2="0"><stop offset="0.000" stop-color="#0020ff"/><stop offset="0.143" stop-color="#0412ff"/><stop offset="0.366" stop-color="#5500ff"/><stop offset="0.800" stop-color="#ff00fc"/><stop offset="0.994" stop-color="#ff00be"/><stop offset="1.000" stop-color="#ff00bd"/></linearGradient><linearGradient id="hsi138" gradientUnits="userSpaceOnUse" x1="1153" y1="0" x2="1503" y2="0"><stop offset="0.000" stop-color="#001fff"/><stop offset="0.143" stop-color="#0311ff"/><stop offset="0.360" stop-color="#5200ff"/><stop offset="0.806" stop-color="#ff00fc"/><stop offset="1.000" stop-color="#ff00be"/></linearGradient><linearGradient id="hsi139" gradientUnits="userSpaceOnUse" x1="1153" y1="0" x2="1503" y2="0"><stop offset="0.000" stop-color="#001fff"/><stop offset="0.143" stop-color="#0311ff"/><stop offset="0.360" stop-color="#5100ff"/><stop offset="0.811" stop-color="#ff00fc"/><stop offset="1.000" stop-color="#ff00c0"/></linearGradient><linearGradient id="hsi140" gradientUnits="userSpaceOnUse" x1="1153" y1="0" x2="1503" y2="0"><stop offset="0.000" stop-color="#001eff"/><stop offset="0.143" stop-color="#0310ff"/><stop offset="0.354" stop-color="#4e00ff"/><stop offset="0.817" stop-color="#ff00fc"/><stop offset="1.000" stop-color="#ff00c2"/></linearGradient><linearGradient id="hsi141" gradientUnits="userSpaceOnUse" x1="1153" y1="0" x2="1503" y2="0"><stop offset="0.000" stop-color="#001dff"/><stop offset="0.149" stop-color="#040fff"/><stop offset="0.349" stop-color="#4b00ff"/><stop offset="0.823" stop-color="#ff00fc"/><stop offset="1.000" stop-color="#ff00c4"/></linearGradient><linearGradient id="hsi142" gradientUnits="userSpaceOnUse" x1="1153" y1="0" x2="1503" y2="0"><stop offset="0.000" stop-color="#001cff"/><stop offset="0.149" stop-color="#040eff"/><stop offset="0.343" stop-color="#4800ff"/><stop offset="0.829" stop-color="#ff00fc"/><stop offset="1.000" stop-color="#ff00c6"/></linearGradient><linearGradient id="hsi143" gradientUnits="userSpaceOnUse" x1="1153" y1="0" x2="1503" y2="0"><stop offset="0.000" stop-color="#001cff"/><stop offset="0.149" stop-color="#040eff"/><stop offset="0.343" stop-color="#4700ff"/><stop offset="0.834" stop-color="#ff00fc"/><stop offset="1.000" stop-color="#ff00c7"/></linearGradient><linearGradient id="hsi144" gradientUnits="userSpaceOnUse" x1="1153" y1="0" x2="1503" y2="0"><stop offset="0.000" stop-color="#001bff"/><stop offset="0.149" stop-color="#030dff"/><stop offset="0.337" stop-color="#4500ff"/><stop offset="0.840" stop-color="#ff00fc"/><stop offset="1.000" stop-color="#ff00c9"/></linearGradient><linearGradient id="hsi145" gradientUnits="userSpaceOnUse" x1="1153" y1="0" x2="1503" y2="0"><stop offset="0.000" stop-color="#001aff"/><stop offset="0.149" stop-color="#030cff"/><stop offset="0.331" stop-color="#4200ff"/><stop offset="0.846" stop-color="#ff00fc"/><stop offset="1.000" stop-color="#ff00cb"/></linearGradient><linearGradient id="hsi146" gradientUnits="userSpaceOnUse" x1="1153" y1="0" x2="1503" y2="0"><stop offset="0.000" stop-color="#0019ff"/><stop offset="0.149" stop-color="#030cff"/><stop offset="0.331" stop-color="#4100ff"/><stop offset="0.851" stop-color="#ff00fc"/><stop offset="1.000" stop-color="#ff00cd"/></linearGradient><linearGradient id="hsi147" gradientUnits="userSpaceOnUse" x1="1153" y1="0" x2="1503" y2="0"><stop offset="0.000" stop-color="#0019ff"/><stop offset="0.154" stop-color="#040aff"/><stop offset="0.331" stop-color="#4000ff"/><stop offset="0.857" stop-color="#ff00fc"/><stop offset="1.000" stop-color="#ff00cf"/></linearGradient><linearGradient id="hsi148" gradientUnits="userSpaceOnUse" x1="1153" y1="0" x2="1503" y2="0"><stop offset="0.000" stop-color="#0018ff"/><stop offset="0.154" stop-color="#040aff"/><stop offset="0.326" stop-color="#3e00ff"/><stop offset="0.863" stop-color="#ff00fc"/><stop offset="1.000" stop-color="#ff00d0"/></linearGradient><linearGradient id="hsi149" gradientUnits="userSpaceOnUse" x1="1153" y1="0" x2="1503" y2="0"><stop offset="0.000" stop-color="#0017ff"/><stop offset="0.154" stop-color="#0409ff"/><stop offset="0.326" stop-color="#3d00ff"/><stop offset="0.869" stop-color="#ff00fc"/><stop offset="1.000" stop-color="#ff00d2"/></linearGradient><linearGradient id="hsi150" gradientUnits="userSpaceOnUse" x1="1153" y1="0" x2="1503" y2="0"><stop offset="0.000" stop-color="#0017ff"/><stop offset="0.154" stop-color="#0309ff"/><stop offset="0.326" stop-color="#3c00ff"/><stop offset="0.874" stop-color="#ff00fc"/><stop offset="1.000" stop-color="#ff00d4"/></linearGradient><linearGradient id="hsi151" gradientUnits="userSpaceOnUse" x1="1153" y1="0" x2="1503" y2="0"><stop offset="0.000" stop-color="#0016ff"/><stop offset="0.154" stop-color="#0308ff"/><stop offset="0.326" stop-color="#3b00ff"/><stop offset="0.880" stop-color="#ff00fc"/><stop offset="1.000" stop-color="#ff00d6"/></linearGradient><linearGradient id="hsi152" gradientUnits="userSpaceOnUse" x1="1153" y1="0" x2="1503" y2="0"><stop offset="0.000" stop-color="#0015ff"/><stop offset="0.160" stop-color="#0407ff"/><stop offset="0.337" stop-color="#3e00ff"/><stop offset="0.886" stop-color="#ff00fc"/><stop offset="1.000" stop-color="#ff00d8"/></linearGradient><linearGradient id="hsi153" gradientUnits="userSpaceOnUse" x1="1153" y1="0" x2="1503" y2="0"><stop offset="0.000" stop-color="#0015ff"/><stop offset="0.160" stop-color="#0406ff"/><stop offset="0.349" stop-color="#4200ff"/><stop offset="0.891" stop-color="#ff00fc"/><stop offset="1.000" stop-color="#ff00d9"/></linearGradient><linearGradient id="hsi154" gradientUnits="userSpaceOnUse" x1="1153" y1="0" x2="1503" y2="0"><stop offset="0.000" stop-color="#0014ff"/><stop offset="0.160" stop-color="#0406ff"/><stop offset="0.371" stop-color="#4800ff"/><stop offset="0.897" stop-color="#ff00fc"/><stop offset="1.000" stop-color="#ff00db"/></linearGradient><linearGradient id="hsi155" gradientUnits="userSpaceOnUse" x1="1153" y1="0" x2="1503" y2="0"><stop offset="0.000" stop-color="#0013ff"/><stop offset="0.160" stop-color="#0305ff"/><stop offset="0.411" stop-color="#5500ff"/><stop offset="0.903" stop-color="#ff00fc"/><stop offset="1.000" stop-color="#ff00dd"/></linearGradient><linearGradient id="hsi156" gradientUnits="userSpaceOnUse" x1="1153" y1="0" x2="1503" y2="0"><stop offset="0.000" stop-color="#0013ff"/><stop offset="0.160" stop-color="#0305ff"/><stop offset="0.509" stop-color="#7400ff"/><stop offset="0.909" stop-color="#ff00fc"/><stop offset="1.000" stop-color="#ff00df"/></linearGradient><linearGradient id="hsi157" gradientUnits="userSpaceOnUse" x1="1153" y1="0" x2="1503" y2="0"><stop offset="0.000" stop-color="#0012ff"/><stop offset="0.160" stop-color="#0304ff"/><stop offset="0.817" stop-color="#de00ff"/><stop offset="0.920" stop-color="#ff00fa"/><stop offset="1.000" stop-color="#ff00e1"/></linearGradient><linearGradient id="hsi158" gradientUnits="userSpaceOnUse" x1="1153" y1="0" x2="1503" y2="0"><stop offset="0.000" stop-color="#0012ff"/><stop offset="0.166" stop-color="#0403ff"/><stop offset="0.829" stop-color="#e000ff"/><stop offset="0.926" stop-color="#ff00fb"/><stop offset="1.000" stop-color="#ff00e3"/></linearGradient><linearGradient id="hsi159" gradientUnits="userSpaceOnUse" x1="1153" y1="0" x2="1503" y2="0"><stop offset="0.000" stop-color="#0011ff"/><stop offset="0.166" stop-color="#0403ff"/><stop offset="0.829" stop-color="#df00ff"/><stop offset="0.931" stop-color="#ff00fb"/><stop offset="1.000" stop-color="#ff00e4"/></linearGradient><linearGradient id="hsi160" gradientUnits="userSpaceOnUse" x1="1153" y1="0" x2="1503" y2="0"><stop offset="0.000" stop-color="#0010ff"/><stop offset="0.166" stop-color="#0402ff"/><stop offset="0.834" stop-color="#df00ff"/><stop offset="0.937" stop-color="#ff00fb"/><stop offset="1.000" stop-color="#ff00e6"/></linearGradient><linearGradient id="hsi161" gradientUnits="userSpaceOnUse" x1="1153" y1="0" x2="1503" y2="0"><stop offset="0.000" stop-color="#0010ff"/><stop offset="0.166" stop-color="#0302ff"/><stop offset="0.840" stop-color="#df00ff"/><stop offset="0.943" stop-color="#ff00fb"/><stop offset="1.000" stop-color="#ff00e8"/></linearGradient><linearGradient id="hsi162" gradientUnits="userSpaceOnUse" x1="1153" y1="0" x2="1503" y2="0"><stop offset="0.000" stop-color="#000fff"/><stop offset="0.166" stop-color="#0301ff"/><stop offset="0.846" stop-color="#df00ff"/><stop offset="0.949" stop-color="#ff00fb"/><stop offset="1.000" stop-color="#ff00ea"/></linearGradient><linearGradient id="hsi163" gradientUnits="userSpaceOnUse" x1="1153" y1="0" x2="1503" y2="0"><stop offset="0.000" stop-color="#000fff"/><stop offset="0.166" stop-color="#0301ff"/><stop offset="0.846" stop-color="#dd00ff"/><stop offset="0.954" stop-color="#ff00fb"/><stop offset="1.000" stop-color="#ff00ec"/></linearGradient><linearGradient id="hsi164" gradientUnits="userSpaceOnUse" x1="1153" y1="0" x2="1503" y2="0"><stop offset="0.000" stop-color="#000eff"/><stop offset="0.171" stop-color="#0400ff"/><stop offset="0.857" stop-color="#e000ff"/><stop offset="0.960" stop-color="#ff00fb"/><stop offset="1.000" stop-color="#ff00ee"/></linearGradient><linearGradient id="hsi165" gradientUnits="userSpaceOnUse" x1="1153" y1="0" x2="1503" y2="0"><stop offset="0.000" stop-color="#000eff"/><stop offset="0.171" stop-color="#0400ff"/><stop offset="0.863" stop-color="#e000ff"/><stop offset="0.966" stop-color="#ff00fb"/><stop offset="1.000" stop-color="#ff00f0"/></linearGradient><linearGradient id="hsi166" gradientUnits="userSpaceOnUse" x1="1153" y1="0" x2="1503" y2="0"><stop offset="0.000" stop-color="#000dff"/><stop offset="0.171" stop-color="#0400ff"/><stop offset="0.869" stop-color="#e000ff"/><stop offset="0.971" stop-color="#ff00fb"/><stop offset="1.000" stop-color="#ff00f2"/></linearGradient><linearGradient id="insUp" x1="0" y1="0" x2="1" y2="1"><stop offset="0" stop-color="#609800"/><stop offset="0.5" stop-color="#989800"/><stop offset="1" stop-color="#986800"/></linearGradient><linearGradient id="insLo" x1="0" y1="0" x2="1" y2="1"><stop offset="0" stop-color="#a8ff00"/><stop offset="0.5" stop-color="#ffff10"/><stop offset="1" stop-color="#ffa800"/></linearGradient><linearGradient id="rbR" x1="0" y1="0" x2="0" y2="1"><stop offset="0" stop-color="#ff5858"/><stop offset="1" stop-color="#ff4040"/></linearGradient><linearGradient id="rbG" x1="0" y1="0" x2="0" y2="1"><stop offset="0" stop-color="#58aa58"/><stop offset="1" stop-color="#40a040"/></linearGradient><linearGradient id="rbB" x1="0" y1="0" x2="0" y2="1"><stop offset="0" stop-color="#5858ff"/><stop offset="1" stop-color="#4848ff"/></linearGradient><linearGradient id="tbbg" x1="0" y1="0" x2="0" y2="1"><stop offset="0" stop-color="#4a4a4a"/><stop offset="0.3" stop-color="#3a3a3a"/><stop offset="1" stop-color="#262626"/></linearGradient><linearGradient id="btnG" x1="0" y1="0" x2="0" y2="1"><stop offset="0" stop-color="#a8a8a8"/><stop offset="0.5" stop-color="#858585"/><stop offset="1" stop-color="#5a5a5a"/></linearGradient><linearGradient id="btnSel" x1="0" y1="0" x2="0" y2="1"><stop offset="0" stop-color="#1c1c1c"/><stop offset="1" stop-color="#333333"/></linearGradient><linearGradient id="circG" x1="0" y1="0" x2="0" y2="1"><stop offset="0" stop-color="#686868"/><stop offset="1" stop-color="#ababab"/></linearGradient><linearGradient id="btnD" x1="0" y1="0" x2="0" y2="1"><stop offset="0" stop-color="#7a7a7a"/><stop offset="1" stop-color="#4e4e4e"/></linearGradient><linearGradient id="rshadow" x1="0" y1="0" x2="1" y2="0"><stop offset="0" stop-color="#000" stop-opacity="0"/><stop offset="1" stop-color="#000" stop-opacity="0.45"/></linearGradient></defs>
<rect x="0" y="0" width="1672" height="1008" fill="#333333"/>
<rect x="0" y="0" width="1672" height="40" fill="#242424"/>
<rect x="0" y="40" width="1672" height="1.5" fill="#2c2c2c"/>
<path d="M3.5,40 V9 Q3.5,2.5 10,2.5 H111 Q117.5,2.5 117.5,9 V40" fill="url(#tabg)" stroke="#8a8a8a" stroke-width="1.2"/>
<line x1="77" y1="3" x2="77" y2="40" stroke="#8a8a8a" stroke-width="1.2"/>
<circle cx="95.5" cy="24" r="11.5" fill="url(#plusg)"/>
<path d="M91.5,24.5 H99.5 M95.5,20.5 V28.5" stroke="#8c8c8c" stroke-width="1.1"/>
<text x="11" y="27.5" font-size="14" fill="#e8e8e8" textLength="58" lengthAdjust="spacingAndGlyphs">History 1</text>
<path d="M1058,39 V5 Q1058,2 1061,2 H1232 Q1236,2 1236,6 V39 Z" fill="url(#wg)"/>
<rect x="1058" y="3" width="7" height="36" fill="#22cc22" rx="1"/>
<line x1="1191.5" y1="5" x2="1191.5" y2="39" stroke="#3a3a3a" stroke-width="1.5"/>
<text x="1069" y="16.5" font-size="13" fill="#ececec" textLength="82" lengthAdjust="spacingAndGlyphs">X-Rite i1Pro 3</text>
<text x="1069" y="35" font-size="13" fill="#ececec" textLength="69" lengthAdjust="spacingAndGlyphs">Direct View</text>
<circle cx="1167.5" cy="21" r="12" fill="url(#ddg)"/>
<path d="M1161.5,19 L1173.5,19 L1167.5,25 Z" fill="#ffffff"/>
<circle cx="1217.5" cy="21" r="16" fill="#0000e0" stroke="#e0e0ff" stroke-width="1.5"/>
<text x="1217.5" y="25.5" font-size="12" fill="#ffffff" text-anchor="middle" textLength="19" lengthAdjust="spacingAndGlyphs">623</text>
<path d="M1244,39 V6 Q1244,2 1248,2 H1402 Q1406,2 1406,6 V39 Z" fill="url(#wg)"/>
<rect x="1244" y="3" width="7" height="36" fill="url(#wbar)" rx="1"/>
<text x="1255" y="16.5" font-size="13" fill="#ececec" textLength="80" lengthAdjust="spacingAndGlyphs">Mobile Forge</text>
<circle cx="1386" cy="21" r="12" fill="url(#ddg)"/>
<path d="M1380,19 L1392,19 L1386,25 Z" fill="#ffffff"/>
<path d="M1414,39 V6 Q1414,2 1418,2 H1589 Q1593,2 1593,6 V39 Z" fill="url(#wg)"/>
<rect x="1414" y="3" width="7" height="36" fill="#e6e600" rx="1"/>
<text x="1425" y="16.5" font-size="13" fill="#ececec" textLength="132" lengthAdjust="spacingAndGlyphs">Direct Display Control</text>
<circle cx="1573" cy="21" r="12" fill="url(#ddg)"/>
<path d="M1567,19 L1579,19 L1573,25 Z" fill="#ffffff"/>
<rect x="1597.5" y="2.5" width="41" height="34" rx="4" fill="url(#btg)" stroke="#9a9a9a" stroke-width="1"/>
<circle cx="1618" cy="19.5" r="12" fill="url(#ddg)"/>
<g transform="translate(1618,19.5)"><rect x="-1.7" y="-8" width="3.4" height="4" transform="rotate(0)" fill="#d0d0d0"/><rect x="-1.7" y="-8" width="3.4" height="4" transform="rotate(45)" fill="#d0d0d0"/><rect x="-1.7" y="-8" width="3.4" height="4" transform="rotate(90)" fill="#d0d0d0"/><rect x="-1.7" y="-8" width="3.4" height="4" transform="rotate(135)" fill="#d0d0d0"/><rect x="-1.7" y="-8" width="3.4" height="4" transform="rotate(180)" fill="#d0d0d0"/><rect x="-1.7" y="-8" width="3.4" height="4" transform="rotate(225)" fill="#d0d0d0"/><rect x="-1.7" y="-8" width="3.4" height="4" transform="rotate(270)" fill="#d0d0d0"/><rect x="-1.7" y="-8" width="3.4" height="4" transform="rotate(315)" fill="#d0d0d0"/><circle r="5.2" fill="none" stroke="#d0d0d0" stroke-width="2.6"/></g>
<path d="M1640.5,36.5 V6.5 Q1640.5,2.5 1644.5,2.5 H1672 V36.5 Z" fill="url(#btg)" stroke="#9a9a9a" stroke-width="1"/>
<circle cx="1656" cy="19.5" r="12" fill="url(#ddg)"/>
<path d="M1658,13.5 V25.5 L1651,19.5 Z" fill="#ffffff"/>
<text x="9.5" y="127" font-size="39" fill="#f0f0f0" textLength="336.5" lengthAdjust="spacingAndGlyphs" stroke="#f0f0f0" stroke-width="0.9">Saturation Sweeps</text>
<rect x="47" y="217.5" width="312" height="387.0" fill="#232323"/>
<line x1="87.4" y1="217.5" x2="87.4" y2="604.5" stroke="#8f8f8f" stroke-width="1.6"/>
<line x1="130.4" y1="217.5" x2="130.4" y2="604.5" stroke="#8f8f8f" stroke-width="1.6"/>
<line x1="170.6" y1="217.5" x2="170.6" y2="604.5" stroke="#8f8f8f" stroke-width="1.6"/>
<line x1="213.2" y1="217.5" x2="213.2" y2="604.5" stroke="#8f8f8f" stroke-width="1.6"/>
<line x1="253.5" y1="217.5" x2="253.5" y2="604.5" stroke="#8f8f8f" stroke-width="1.6"/>
<line x1="296.4" y1="217.5" x2="296.4" y2="604.5" stroke="#8f8f8f" stroke-width="1.6"/>
<line x1="337.4" y1="217.5" x2="337.4" y2="604.5" stroke="#8f8f8f" stroke-width="1.6"/>
<rect x="47" y="217.5" width="312" height="387.0" fill="none" stroke="#8f8f8f" stroke-width="1.8"/>
<text x="184.5" y="213" font-size="14" fill="#d4d4d4" text-anchor="middle" textLength="79" lengthAdjust="spacingAndGlyphs">DeltaE 2000</text>
<line x1="41" y1="217.7" x2="47" y2="217.7" stroke="#d8d8d8" stroke-width="1.5"/>
<line x1="41" y1="283.4" x2="47" y2="283.4" stroke="#d8d8d8" stroke-width="1.5"/>
<line x1="41" y1="347.5" x2="47" y2="347.5" stroke="#d8d8d8" stroke-width="1.5"/>
<line x1="41" y1="411.3" x2="47" y2="411.3" stroke="#d8d8d8" stroke-width="1.5"/>
<line x1="41" y1="475.4" x2="47" y2="475.4" stroke="#d8d8d8" stroke-width="1.5"/>
<line x1="41" y1="540.5" x2="47" y2="540.5" stroke="#d8d8d8" stroke-width="1.5"/>
<line x1="41" y1="604.4" x2="47" y2="604.4" stroke="#d8d8d8" stroke-width="1.5"/>
<line x1="47" y1="604.5" x2="47" y2="610.5" stroke="#d8d8d8" stroke-width="1.5"/>
<text x="47" y="626" font-size="14" fill="#d4d4d4" text-anchor="middle">0</text>
<line x1="87.4" y1="604.5" x2="87.4" y2="610.5" stroke="#d8d8d8" stroke-width="1.5"/>
<text x="87.4" y="626" font-size="14" fill="#d4d4d4" text-anchor="middle">2</text>
<line x1="130.4" y1="604.5" x2="130.4" y2="610.5" stroke="#d8d8d8" stroke-width="1.5"/>
<text x="130.4" y="626" font-size="14" fill="#d4d4d4" text-anchor="middle">4</text>
<line x1="170.6" y1="604.5" x2="170.6" y2="610.5" stroke="#d8d8d8" stroke-width="1.5"/>
<text x="170.6" y="626" font-size="14" fill="#d4d4d4" text-anchor="middle">6</text>
<line x1="213.2" y1="604.5" x2="213.2" y2="610.5" stroke="#d8d8d8" stroke-width="1.5"/>
<text x="213.2" y="626" font-size="14" fill="#d4d4d4" text-anchor="middle">8</text>
<line x1="253.5" y1="604.5" x2="253.5" y2="610.5" stroke="#d8d8d8" stroke-width="1.5"/>
<text x="253.5" y="626" font-size="14" fill="#d4d4d4" text-anchor="middle">10</text>
<line x1="296.4" y1="604.5" x2="296.4" y2="610.5" stroke="#d8d8d8" stroke-width="1.5"/>
<text x="296.4" y="626" font-size="14" fill="#d4d4d4" text-anchor="middle">12</text>
<line x1="337.4" y1="604.5" x2="337.4" y2="610.5" stroke="#d8d8d8" stroke-width="1.5"/>
<text x="337.4" y="626" font-size="14" fill="#d4d4d4" text-anchor="middle">14</text>
<text x="45" y="256.2" font-size="14" fill="#d4d4d4" text-anchor="end">100%</text>
<text x="45" y="321.9" font-size="14" fill="#d4d4d4" text-anchor="end">80%</text>
<text x="45" y="386.0" font-size="14" fill="#d4d4d4" text-anchor="end">60%</text>
<text x="45" y="449.8" font-size="14" fill="#d4d4d4" text-anchor="end">40%</text>
<text x="45" y="513.9" font-size="14" fill="#d4d4d4" text-anchor="end">20%</text>
<text x="46" y="579" font-size="14" fill="#d4d4d4" text-anchor="end">100</text>
<rect x="47" y="223.1" width="36.5" height="6.4" fill="#000"/>
<rect x="47.5" y="224.2" width="34.9" height="4.4" fill="url(#db00)"/>
<rect x="47" y="230.0" width="6.6" height="6.4" fill="#000"/>
<rect x="47.5" y="231.1" width="5.0" height="4.4" fill="url(#db01)"/>
<rect x="47" y="236.9" width="9.7" height="6.4" fill="#000"/>
<rect x="47.5" y="238.0" width="8.1" height="4.4" fill="url(#db02)"/>
<rect x="47" y="243.8" width="44.5" height="6.4" fill="#000"/>
<rect x="47.5" y="244.9" width="42.9" height="4.4" fill="url(#db03)"/>
<rect x="47" y="250.7" width="22.2" height="6.4" fill="#000"/>
<rect x="47.5" y="251.8" width="20.6" height="4.4" fill="url(#db04)"/>
<rect x="47" y="257.6" width="4.3" height="6.4" fill="#000"/>
<rect x="47.5" y="258.7" width="2.7" height="4.4" fill="url(#db05)"/>
<rect x="47" y="288.8" width="16.8" height="6.4" fill="#000"/>
<rect x="47.5" y="289.9" width="15.2" height="4.4" fill="url(#db10)"/>
<rect x="47" y="295.7" width="6.6" height="6.4" fill="#000"/>
<rect x="47.5" y="296.8" width="5.0" height="4.4" fill="url(#db11)"/>
<rect x="47" y="302.6" width="28.9" height="6.4" fill="#000"/>
<rect x="47.5" y="303.7" width="27.3" height="4.4" fill="url(#db12)"/>
<rect x="47" y="309.5" width="49.0" height="6.4" fill="#000"/>
<rect x="47.5" y="310.6" width="47.4" height="4.4" fill="url(#db13)"/>
<rect x="47" y="316.4" width="24.4" height="6.4" fill="#000"/>
<rect x="47.5" y="317.5" width="22.8" height="4.4" fill="url(#db14)"/>
<rect x="47" y="323.3" width="9.7" height="6.4" fill="#000"/>
<rect x="47.5" y="324.4" width="8.1" height="4.4" fill="url(#db15)"/>
<rect x="47" y="352.9" width="7.9" height="6.4" fill="#000"/>
<rect x="47.5" y="354.0" width="6.3" height="4.4" fill="url(#db20)"/>
<rect x="47" y="359.8" width="15.5" height="6.4" fill="#000"/>
<rect x="47.5" y="360.9" width="13.9" height="4.4" fill="url(#db21)"/>
<rect x="47" y="366.7" width="24.4" height="6.4" fill="#000"/>
<rect x="47.5" y="367.8" width="22.8" height="4.4" fill="url(#db22)"/>
<rect x="47" y="373.6" width="50.3" height="6.4" fill="#000"/>
<rect x="47.5" y="374.7" width="48.7" height="4.4" fill="url(#db23)"/>
<rect x="47" y="380.5" width="27.6" height="6.4" fill="#000"/>
<rect x="47.5" y="381.6" width="26.0" height="4.4" fill="url(#db24)"/>
<rect x="47" y="387.4" width="15.5" height="6.4" fill="#000"/>
<rect x="47.5" y="388.5" width="13.9" height="4.4" fill="url(#db25)"/>
<rect x="47" y="416.7" width="20.0" height="6.4" fill="#000"/>
<rect x="47.5" y="417.8" width="18.4" height="4.4" fill="url(#db30)"/>
<rect x="47" y="423.6" width="24.4" height="6.4" fill="#000"/>
<rect x="47.5" y="424.7" width="22.8" height="4.4" fill="url(#db31)"/>
<rect x="47" y="430.5" width="27.6" height="6.4" fill="#000"/>
<rect x="47.5" y="431.6" width="26.0" height="4.4" fill="url(#db32)"/>
<rect x="47" y="437.4" width="53.4" height="6.4" fill="#000"/>
<rect x="47.5" y="438.5" width="51.8" height="4.4" fill="url(#db33)"/>
<rect x="47" y="444.3" width="32.5" height="6.4" fill="#000"/>
<rect x="47.5" y="445.4" width="30.9" height="4.4" fill="url(#db34)"/>
<rect x="47" y="451.2" width="25.3" height="6.4" fill="#000"/>
<rect x="47.5" y="452.3" width="23.7" height="4.4" fill="url(#db35)"/>
<rect x="47" y="480.8" width="30.2" height="6.4" fill="#000"/>
<rect x="47.5" y="481.9" width="28.6" height="4.4" fill="url(#db40)"/>
<rect x="47" y="487.7" width="34.7" height="6.4" fill="#000"/>
<rect x="47.5" y="488.8" width="33.1" height="4.4" fill="url(#db41)"/>
<rect x="47" y="494.6" width="32.5" height="6.4" fill="#000"/>
<rect x="47.5" y="495.7" width="30.9" height="4.4" fill="url(#db42)"/>
<rect x="47" y="501.5" width="58.8" height="6.4" fill="#000"/>
<rect x="47.5" y="502.6" width="57.2" height="4.4" fill="url(#db43)"/>
<rect x="47" y="508.4" width="40.5" height="6.4" fill="#000"/>
<rect x="47.5" y="509.5" width="38.9" height="4.4" fill="url(#db44)"/>
<rect x="47" y="515.3" width="37.8" height="6.4" fill="#000"/>
<rect x="47.5" y="516.4" width="36.2" height="4.4" fill="url(#db45)"/>
<rect x="47" y="586" width="74.5" height="7" fill="#000"/>
<rect x="47.5" y="587.2" width="72.5" height="4.6" fill="url(#dbw)"/>
<rect x="412" y="164.3" width="144" height="282.09999999999997" fill="#232323"/>
<line x1="412" y1="211.4" x2="556" y2="211.4" stroke="#8f8f8f" stroke-width="1.6"/>
<line x1="412" y1="258.8" x2="556" y2="258.8" stroke="#8f8f8f" stroke-width="1.6"/>
<line x1="412" y1="306.4" x2="556" y2="306.4" stroke="#8f8f8f" stroke-width="1.6"/>
<line x1="412" y1="352.4" x2="556" y2="352.4" stroke="#8f8f8f" stroke-width="1.6"/>
<line x1="412" y1="400.4" x2="556" y2="400.4" stroke="#8f8f8f" stroke-width="1.6"/>
<rect x="412" y="164.3" width="144" height="282.09999999999997" fill="none" stroke="#8f8f8f" stroke-width="1.8"/>
<line x1="406" y1="164.3" x2="412" y2="164.3" stroke="#d8d8d8" stroke-width="1.5"/>
<text x="404" y="169.3" font-size="14" fill="#d4d4d4" text-anchor="end">15</text>
<line x1="406" y1="211.4" x2="412" y2="211.4" stroke="#d8d8d8" stroke-width="1.5"/>
<text x="404" y="216.4" font-size="14" fill="#d4d4d4" text-anchor="end">10</text>
<line x1="406" y1="258.8" x2="412" y2="258.8" stroke="#d8d8d8" stroke-width="1.5"/>
<text x="404" y="263.8" font-size="14" fill="#d4d4d4" text-anchor="end">5</text>
<line x1="406" y1="306.4" x2="412" y2="306.4" stroke="#d8d8d8" stroke-width="1.5"/>
<text x="404" y="311.4" font-size="14" fill="#d4d4d4" text-anchor="end">0</text>
<line x1="406" y1="352.4" x2="412" y2="352.4" stroke="#d8d8d8" stroke-width="1.5"/>
<text x="404" y="357.4" font-size="14" fill="#d4d4d4" text-anchor="end">-5</text>
<line x1="406" y1="400.4" x2="412" y2="400.4" stroke="#d8d8d8" stroke-width="1.5"/>
<text x="404" y="405.4" font-size="14" fill="#d4d4d4" text-anchor="end">-10</text>
<line x1="406" y1="446.4" x2="412" y2="446.4" stroke="#d8d8d8" stroke-width="1.5"/>
<text x="404" y="451.4" font-size="14" fill="#d4d4d4" text-anchor="end">-15</text>
<line x1="412" y1="446.4" x2="412" y2="452.4" stroke="#d8d8d8" stroke-width="1.5"/>
<line x1="556" y1="446.4" x2="556" y2="452.4" stroke="#d8d8d8" stroke-width="1.5"/>
<text x="471.0" y="159" font-size="14" fill="#d4d4d4" text-anchor="middle" textLength="45.5" lengthAdjust="spacingAndGlyphs">Delta L</text>
<text x="484.0" y="463" font-size="14" fill="#d4d4d4" text-anchor="middle">100%</text>
<rect x="426" y="304" width="116" height="4.8" fill="#000"/>
<rect x="427.5" y="305.4" width="113" height="2" fill="#c8c040"/>
<rect x="609" y="164.3" width="144" height="282.09999999999997" fill="#232323"/>
<line x1="609" y1="211.4" x2="753" y2="211.4" stroke="#8f8f8f" stroke-width="1.6"/>
<line x1="609" y1="258.8" x2="753" y2="258.8" stroke="#8f8f8f" stroke-width="1.6"/>
<line x1="609" y1="306.4" x2="753" y2="306.4" stroke="#8f8f8f" stroke-width="1.6"/>
<line x1="609" y1="352.4" x2="753" y2="352.4" stroke="#8f8f8f" stroke-width="1.6"/>
<line x1="609" y1="400.4" x2="753" y2="400.4" stroke="#8f8f8f" stroke-width="1.6"/>
<rect x="609" y="164.3" width="144" height="282.09999999999997" fill="none" stroke="#8f8f8f" stroke-width="1.8"/>
<line x1="603" y1="164.3" x2="609" y2="164.3" stroke="#d8d8d8" stroke-width="1.5"/>
<text x="601" y="169.3" font-size="14" fill="#d4d4d4" text-anchor="end">15</text>
<line x1="603" y1="211.4" x2="609" y2="211.4" stroke="#d8d8d8" stroke-width="1.5"/>
<text x="601" y="216.4" font-size="14" fill="#d4d4d4" text-anchor="end">10</text>
<line x1="603" y1="258.8" x2="609" y2="258.8" stroke="#d8d8d8" stroke-width="1.5"/>
<text x="601" y="263.8" font-size="14" fill="#d4d4d4" text-anchor="end">5</text>
<line x1="603" y1="306.4" x2="609" y2="306.4" stroke="#d8d8d8" stroke-width="1.5"/>
<text x="601" y="311.4" font-size="14" fill="#d4d4d4" text-anchor="end">0</text>
<line x1="603" y1="352.4" x2="609" y2="352.4" stroke="#d8d8d8" stroke-width="1.5"/>
<text x="601" y="357.4" font-size="14" fill="#d4d4d4" text-anchor="end">-5</text>
<line x1="603" y1="400.4" x2="609" y2="400.4" stroke="#d8d8d8" stroke-width="1.5"/>
<text x="601" y="405.4" font-size="14" fill="#d4d4d4" text-anchor="end">-10</text>
<line x1="603" y1="446.4" x2="609" y2="446.4" stroke="#d8d8d8" stroke-width="1.5"/>
<text x="601" y="451.4" font-size="14" fill="#d4d4d4" text-anchor="end">-15</text>
<line x1="609" y1="446.4" x2="609" y2="452.4" stroke="#d8d8d8" stroke-width="1.5"/>
<line x1="753" y1="446.4" x2="753" y2="452.4" stroke="#d8d8d8" stroke-width="1.5"/>
<text x="668.0" y="159" font-size="14" fill="#d4d4d4" text-anchor="middle" textLength="47.5" lengthAdjust="spacingAndGlyphs">Delta C</text>
<text x="681.0" y="463" font-size="14" fill="#d4d4d4" text-anchor="middle">100%</text>
<rect x="623.5" y="300" width="116" height="5.6" fill="#000"/>
<rect x="625" y="301.4" width="113" height="2.8" fill="#d4cc38"/>
<rect x="806.5" y="164.3" width="144.5" height="282.09999999999997" fill="#232323"/>
<line x1="806.5" y1="211.4" x2="951" y2="211.4" stroke="#8f8f8f" stroke-width="1.6"/>
<line x1="806.5" y1="258.8" x2="951" y2="258.8" stroke="#8f8f8f" stroke-width="1.6"/>
<line x1="806.5" y1="306.4" x2="951" y2="306.4" stroke="#8f8f8f" stroke-width="1.6"/>
<line x1="806.5" y1="352.4" x2="951" y2="352.4" stroke="#8f8f8f" stroke-width="1.6"/>
<line x1="806.5" y1="400.4" x2="951" y2="400.4" stroke="#8f8f8f" stroke-width="1.6"/>
<rect x="806.5" y="164.3" width="144.5" height="282.09999999999997" fill="none" stroke="#8f8f8f" stroke-width="1.8"/>
<line x1="800.5" y1="164.3" x2="806.5" y2="164.3" stroke="#d8d8d8" stroke-width="1.5"/>
<text x="798.5" y="169.3" font-size="14" fill="#d4d4d4" text-anchor="end">15</text>
<line x1="800.5" y1="211.4" x2="806.5" y2="211.4" stroke="#d8d8d8" stroke-width="1.5"/>
<text x="798.5" y="216.4" font-size="14" fill="#d4d4d4" text-anchor="end">10</text>
<line x1="800.5" y1="258.8" x2="806.5" y2="258.8" stroke="#d8d8d8" stroke-width="1.5"/>
<text x="798.5" y="263.8" font-size="14" fill="#d4d4d4" text-anchor="end">5</text>
<line x1="800.5" y1="306.4" x2="806.5" y2="306.4" stroke="#d8d8d8" stroke-width="1.5"/>
<text x="798.5" y="311.4" font-size="14" fill="#d4d4d4" text-anchor="end">0</text>
<line x1="800.5" y1="352.4" x2="806.5" y2="352.4" stroke="#d8d8d8" stroke-width="1.5"/>
<text x="798.5" y="357.4" font-size="14" fill="#d4d4d4" text-anchor="end">-5</text>
<line x1="800.5" y1="400.4" x2="806.5" y2="400.4" stroke="#d8d8d8" stroke-width="1.5"/>
<text x="798.5" y="405.4" font-size="14" fill="#d4d4d4" text-anchor="end">-10</text>
<line x1="800.5" y1="446.4" x2="806.5" y2="446.4" stroke="#d8d8d8" stroke-width="1.5"/>
<text x="798.5" y="451.4" font-size="14" fill="#d4d4d4" text-anchor="end">-15</text>
<line x1="806.5" y1="446.4" x2="806.5" y2="452.4" stroke="#d8d8d8" stroke-width="1.5"/>
<line x1="951" y1="446.4" x2="951" y2="452.4" stroke="#d8d8d8" stroke-width="1.5"/>
<text x="865.75" y="159" font-size="14" fill="#d4d4d4" text-anchor="middle" textLength="48.5" lengthAdjust="spacingAndGlyphs">Delta H</text>
<text x="878.75" y="463" font-size="14" fill="#d4d4d4" text-anchor="middle">100%</text>
<rect x="821.0" y="302.9" width="115" height="3" fill="#000"/>
<rect x="379" y="472.5" width="591.5" height="163" fill="#000000"/>
<rect x="399.0" y="480.5" width="99.5" height="65.5" fill="#bfc0a6"/>
<rect x="399.0" y="546" width="99.5" height="65.5" fill="#c1c2a4"/>
<rect x="399.0" y="480.5" width="99.5" height="131" fill="none" stroke="#ffffff" stroke-width="1.2"/>
<text x="449.0" y="627" font-size="12" fill="#ffffff" text-anchor="middle">20%</text>
<rect x="514.9" y="480.5" width="99.5" height="65.5" fill="#c0c08c"/>
<rect x="514.9" y="546" width="99.5" height="65.5" fill="#c2c28a"/>
<rect x="514.9" y="480.5" width="99.5" height="131" fill="none" stroke="#ffffff" stroke-width="1.2"/>
<text x="564.9" y="627" font-size="12" fill="#ffffff" text-anchor="middle">40%</text>
<rect x="630.8" y="480.5" width="99.5" height="65.5" fill="#c0c070"/>
<rect x="630.8" y="546" width="99.5" height="65.5" fill="#c2c06e"/>
<rect x="630.8" y="480.5" width="99.5" height="131" fill="none" stroke="#ffffff" stroke-width="1.2"/>
<text x="680.8" y="627" font-size="12" fill="#ffffff" text-anchor="middle">60%</text>
<rect x="746.7" y="480.5" width="99.5" height="65.5" fill="#c0c050"/>
<rect x="746.7" y="546" width="99.5" height="65.5" fill="#c2c04e"/>
<rect x="746.7" y="480.5" width="99.5" height="131" fill="none" stroke="#ffffff" stroke-width="1.2"/>
<text x="796.7" y="627" font-size="12" fill="#ffffff" text-anchor="middle">80%</text>
<rect x="862.6" y="480.5" width="99.5" height="65.5" fill="#c0c000"/>
<rect x="862.6" y="546" width="99.5" height="65.5" fill="#c2c000"/>
<rect x="862.6" y="480.5" width="99.5" height="131" fill="none" stroke="#ffffff" stroke-width="1.2"/>
<text x="912.6" y="627" font-size="12" fill="#ffffff" text-anchor="middle">100%</text>
<text x="0" y="0" font-size="12" fill="#ffffff" text-anchor="middle" transform="translate(392,509) rotate(-90)">Actual</text>
<text x="0" y="0" font-size="12" fill="#ffffff" text-anchor="middle" transform="translate(392,583) rotate(-90)">Target</text>
<rect x="977.5" y="91" width="694.5" height="558" fill="#1b1b1b"/>
<rect x="984" y="98" width="681" height="544.5" fill="#333333"/>
<rect x="1668" y="91" width="4" height="558" fill="#101010"/>
<rect x="1021.5" y="121.5" width="640.5" height="492.0" fill="#232323"/>
<clipPath id="plotclip"><rect x="1021.5" y="121.5" width="640.5" height="492.0"/></clipPath>
<g clip-path="url(#plotclip)"><g clip-path="url(#hsclip)"><rect x="1021" y="122" width="641" height="2.3" fill="url(#hso0)"/><rect x="1021" y="124" width="641" height="2.3" fill="url(#hso1)"/><rect x="1021" y="126" width="641" height="2.3" fill="url(#hso2)"/><rect x="1021" y="128" width="641" height="2.3" fill="url(#hso3)"/><rect x="1021" y="130" width="641" height="2.3" fill="url(#hso4)"/><rect x="1021" y="132" width="641" height="2.3" fill="url(#hso5)"/><rect x="1021" y="134" width="641" height="2.3" fill="url(#hso6)"/><rect x="1021" y="136" width="641" height="2.3" fill="url(#hso7)"/><rect x="1021" y="138" width="641" height="2.3" fill="url(#hso8)"/><rect x="1021" y="140" width="641" height="2.3" fill="url(#hso9)"/><rect x="1021" y="142" width="641" height="2.3" fill="url(#hso10)"/><rect x="1021" y="144" width="641" height="2.3" fill="url(#hso11)"/><rect x="1021" y="146" width="641" height="2.3" fill="url(#hso12)"/><rect x="1021" y="148" width="641" height="2.3" fill="url(#hso13)"/><rect x="1021" y="150" width="641" height="2.3" fill="url(#hso14)"/><rect x="1021" y="152" width="641" height="2.3" fill="url(#hso15)"/><rect x="1021" y="154" width="641" height="2.3" fill="url(#hso16)"/><rect x="1021" y="156" width="641" height="2.3" fill="url(#hso17)"/><rect x="1021" y="158" width="641" height="2.3" fill="url(#hso18)"/><rect x="1021" y="160" width="641" height="2.3" fill="url(#hso19)"/><rect x="1021" y="162" width="641" height="2.3" fill="url(#hso20)"/><rect x="1021" y="164" width="641" height="2.3" fill="url(#hso21)"/><rect x="1021" y="166" width="641" height="2.3" fill="url(#hso22)"/><rect x="1021" y="168" width="641" height="2.3" fill="url(#hso23)"/><rect x="1021" y="170" width="641" height="2.3" fill="url(#hso24)"/><rect x="1021" y="172" width="641" height="2.3" fill="url(#hso25)"/><rect x="1021" y="174" width="641" height="2.3" fill="url(#hso26)"/><rect x="1021" y="176" width="641" height="2.3" fill="url(#hso27)"/><rect x="1021" y="178" width="641" height="2.3" fill="url(#hso28)"/><rect x="1021" y="180" width="641" height="2.3" fill="url(#hso29)"/><rect x="1021" y="182" width="641" height="2.3" fill="url(#hso30)"/><rect x="1021" y="184" width="641" height="2.3" fill="url(#hso31)"/><rect x="1021" y="186" width="641" height="2.3" fill="url(#hso32)"/><rect x="1021" y="188" width="641" height="2.3" fill="url(#hso33)"/><rect x="1021" y="190" width="641" height="2.3" fill="url(#hso34)"/><rect x="1021" y="192" width="641" height="2.3" fill="url(#hso35)"/><rect x="1021" y="194" width="641" height="2.3" fill="url(#hso36)"/><rect x="1021" y="196" width="641" height="2.3" fill="url(#hso37)"/><rect x="1021" y="198" width="641" height="2.3" fill="url(#hso38)"/><rect x="1021" y="200" width="641" height="2.3" fill="url(#hso39)"/><rect x="1021" y="202" width="641" height="2.3" fill="url(#hso40)"/><rect x="1021" y="204" width="641" height="2.3" fill="url(#hso41)"/><rect x="1021" y="206" width="641" height="2.3" fill="url(#hso42)"/><rect x="1021" y="208" width="641" height="2.3" fill="url(#hso43)"/><rect x="1021" y="210" width="641" height="2.3" fill="url(#hso44)"/><rect x="1021" y="212" width="641" height="2.3" fill="url(#hso45)"/><rect x="1021" y="214" width="641" height="2.3" fill="url(#hso46)"/><rect x="1021" y="216" width="641" height="2.3" fill="url(#hso47)"/><rect x="1021" y="218" width="641" height="2.3" fill="url(#hso48)"/><rect x="1021" y="220" width="641" height="2.3" fill="url(#hso49)"/><rect x="1021" y="222" width="641" height="2.3" fill="url(#hso50)"/><rect x="1021" y="224" width="641" height="2.3" fill="url(#hso51)"/><rect x="1021" y="226" width="641" height="2.3" fill="url(#hso52)"/><rect x="1021" y="228" width="641" height="2.3" fill="url(#hso53)"/><rect x="1021" y="230" width="641" height="2.3" fill="url(#hso54)"/><rect x="1021" y="232" width="641" height="2.3" fill="url(#hso55)"/><rect x="1021" y="234" width="641" height="2.3" fill="url(#hso56)"/><rect x="1021" y="236" width="641" height="2.3" fill="url(#hso57)"/><rect x="1021" y="238" width="641" height="2.3" fill="url(#hso58)"/><rect x="1021" y="240" width="641" height="2.3" fill="url(#hso59)"/><rect x="1021" y="242" width="641" height="2.3" fill="url(#hso60)"/><rect x="1021" y="244" width="641" height="2.3" fill="url(#hso61)"/><rect x="1021" y="246" width="641" height="2.3" fill="url(#hso62)"/><rect x="1021" y="248" width="641" height="2.3" fill="url(#hso63)"/><rect x="1021" y="250" width="641" height="2.3" fill="url(#hso64)"/><rect x="1021" y="252" width="641" height="2.3" fill="url(#hso65)"/><rect x="1021" y="254" width="641" height="2.3" fill="url(#hso66)"/><rect x="1021" y="256" width="641" height="2.3" fill="url(#hso67)"/><rect x="1021" y="258" width="641" height="2.3" fill="url(#hso68)"/><rect x="1021" y="260" width="641" height="2.3" fill="url(#hso69)"/><rect x="1021" y="262" width="641" height="2.3" fill="url(#hso70)"/><rect x="1021" y="264" width="641" height="2.3" fill="url(#hso71)"/><rect x="1021" y="266" width="641" height="2.3" fill="url(#hso72)"/><rect x="1021" y="268" width="641" height="2.3" fill="url(#hso73)"/><rect x="1021" y="270" width="641" height="2.3" fill="url(#hso74)"/><rect x="1021" y="272" width="641" height="2.3" fill="url(#hso75)"/><rect x="1021" y="274" width="641" height="2.3" fill="url(#hso76)"/><rect x="1021" y="276" width="641" height="2.3" fill="url(#hso77)"/><rect x="1021" y="278" width="641" height="2.3" fill="url(#hso78)"/><rect x="1021" y="280" width="641" height="2.3" fill="url(#hso79)"/><rect x="1021" y="282" width="641" height="2.3" fill="url(#hso80)"/><rect x="1021" y="284" width="641" height="2.3" fill="url(#hso81)"/><rect x="1021" y="286" width="641" height="2.3" fill="url(#hso82)"/><rect x="1021" y="288" width="641" height="2.3" fill="url(#hso83)"/><rect x="1021" y="290" width="641" height="2.3" fill="url(#hso84)"/><rect x="1021" y="292" width="641" height="2.3" fill="url(#hso85)"/><rect x="1021" y="294" width="641" height="2.3" fill="url(#hso86)"/><rect x="1021" y="296" width="641" height="2.3" fill="url(#hso87)"/><rect x="1021" y="298" width="641" height="2.3" fill="url(#hso88)"/><rect x="1021" y="300" width="641" height="2.3" fill="url(#hso89)"/><rect x="1021" y="302" width="641" height="2.3" fill="url(#hso90)"/><rect x="1021" y="304" width="641" height="2.3" fill="url(#hso91)"/><rect x="1021" y="306" width="641" height="2.3" fill="url(#hso92)"/><rect x="1021" y="308" width="641" height="2.3" fill="url(#hso93)"/><rect x="1021" y="310" width="641" height="2.3" fill="url(#hso94)"/><rect x="1021" y="312" width="641" height="2.3" fill="url(#hso95)"/><rect x="1021" y="314" width="641" height="2.3" fill="url(#hso96)"/><rect x="1021" y="316" width="641" height="2.3" fill="url(#hso97)"/><rect x="1021" y="318" width="641" height="2.3" fill="url(#hso98)"/><rect x="1021" y="320" width="641" height="2.3" fill="url(#hso99)"/><rect x="1021" y="322" width="641" height="2.3" fill="url(#hso100)"/><rect x="1021" y="324" width="641" height="2.3" fill="url(#hso101)"/><rect x="1021" y="326" width="641" height="2.3" fill="url(#hso102)"/><rect x="1021" y="328" width="641" height="2.3" fill="url(#hso103)"/><rect x="1021" y="330" width="641" height="2.3" fill="url(#hso104)"/><rect x="1021" y="332" width="641" height="2.3" fill="url(#hso105)"/><rect x="1021" y="334" width="641" height="2.3" fill="url(#hso106)"/><rect x="1021" y="336" width="641" height="2.3" fill="url(#hso107)"/><rect x="1021" y="338" width="641" height="2.3" fill="url(#hso108)"/><rect x="1021" y="340" width="641" height="2.3" fill="url(#hso109)"/><rect x="1021" y="342" width="641" height="2.3" fill="url(#hso110)"/><rect x="1021" y="344" width="641" height="2.3" fill="url(#hso111)"/><rect x="1021" y="346" width="641" height="2.3" fill="url(#hso112)"/><rect x="1021" y="348" width="641" height="2.3" fill="url(#hso113)"/><rect x="1021" y="350" width="641" height="2.3" fill="url(#hso114)"/><rect x="1021" y="352" width="641" height="2.3" fill="url(#hso115)"/><rect x="1021" y="354" width="641" height="2.3" fill="url(#hso116)"/><rect x="1021" y="356" width="641" height="2.3" fill="url(#hso117)"/><rect x="1021" y="358" width="641" height="2.3" fill="url(#hso118)"/><rect x="1021" y="360" width="641" height="2.3" fill="url(#hso119)"/><rect x="1021" y="362" width="641" height="2.3" fill="url(#hso120)"/><rect x="1021" y="364" width="641" height="2.3" fill="url(#hso121)"/><rect x="1021" y="366" width="641" height="2.3" fill="url(#hso122)"/><rect x="1021" y="368" width="641" height="2.3" fill="url(#hso123)"/><rect x="1021" y="370" width="641" height="2.3" fill="url(#hso124)"/><rect x="1021" y="372" width="641" height="2.3" fill="url(#hso125)"/><rect x="1021" y="374" width="641" height="2.3" fill="url(#hso126)"/><rect x="1021" y="376" width="641" height="2.3" fill="url(#hso127)"/><rect x="1021" y="378" width="641" height="2.3" fill="url(#hso128)"/><rect x="1021" y="380" width="641" height="2.3" fill="url(#hso129)"/><rect x="1021" y="382" width="641" height="2.3" fill="url(#hso130)"/><rect x="1021" y="384" width="641" height="2.3" fill="url(#hso131)"/><rect x="1021" y="386" width="641" height="2.3" fill="url(#hso132)"/><rect x="1021" y="388" width="641" height="2.3" fill="url(#hso133)"/><rect x="1021" y="390" width="641" height="2.3" fill="url(#hso134)"/><rect x="1021" y="392" width="641" height="2.3" fill="url(#hso135)"/><rect x="1021" y="394" width="641" height="2.3" fill="url(#hso136)"/><rect x="1021" y="396" width="641" height="2.3" fill="url(#hso137)"/><rect x="1021" y="398" width="641" height="2.3" fill="url(#hso138)"/><rect x="1021" y="400" width="641" height="2.3" fill="url(#hso139)"/><rect x="1021" y="402" width="641" height="2.3" fill="url(#hso140)"/><rect x="1021" y="404" width="641" height="2.3" fill="url(#hso141)"/><rect x="1021" y="406" width="641" height="2.3" fill="url(#hso142)"/><rect x="1021" y="408" width="641" height="2.3" fill="url(#hso143)"/><rect x="1021" y="410" width="641" height="2.3" fill="url(#hso144)"/><rect x="1021" y="412" width="641" height="2.3" fill="url(#hso145)"/><rect x="1021" y="414" width="641" height="2.3" fill="url(#hso146)"/><rect x="1021" y="416" width="641" height="2.3" fill="url(#hso147)"/><rect x="1021" y="418" width="641" height="2.3" fill="url(#hso148)"/><rect x="1021" y="420" width="641" height="2.3" fill="url(#hso149)"/><rect x="1021" y="422" width="641" height="2.3" fill="url(#hso150)"/><rect x="1021" y="424" width="641" height="2.3" fill="url(#hso151)"/><rect x="1021" y="426" width="641" height="2.3" fill="url(#hso152)"/><rect x="1021" y="428" width="641" height="2.3" fill="url(#hso153)"/><rect x="1021" y="430" width="641" height="2.3" fill="url(#hso154)"/><rect x="1021" y="432" width="641" height="2.3" fill="url(#hso155)"/><rect x="1021" y="434" width="641" height="2.3" fill="url(#hso156)"/><rect x="1021" y="436" width="641" height="2.3" fill="url(#hso157)"/><rect x="1021" y="438" width="641" height="2.3" fill="url(#hso158)"/><rect x="1021" y="440" width="641" height="2.3" fill="url(#hso159)"/><rect x="1021" y="442" width="641" height="2.3" fill="url(#hso160)"/><rect x="1021" y="444" width="641" height="2.3" fill="url(#hso161)"/><rect x="1021" y="446" width="641" height="2.3" fill="url(#hso162)"/><rect x="1021" y="448" width="641" height="2.3" fill="url(#hso163)"/><rect x="1021" y="450" width="641" height="2.3" fill="url(#hso164)"/><rect x="1021" y="452" width="641" height="2.3" fill="url(#hso165)"/><rect x="1021" y="454" width="641" height="2.3" fill="url(#hso166)"/><rect x="1021" y="456" width="641" height="2.3" fill="url(#hso167)"/><rect x="1021" y="458" width="641" height="2.3" fill="url(#hso168)"/><rect x="1021" y="460" width="641" height="2.3" fill="url(#hso169)"/><rect x="1021" y="462" width="641" height="2.3" fill="url(#hso170)"/><rect x="1021" y="464" width="641" height="2.3" fill="url(#hso171)"/><rect x="1021" y="466" width="641" height="2.3" fill="url(#hso172)"/><rect x="1021" y="468" width="641" height="2.3" fill="url(#hso173)"/><rect x="1021" y="470" width="641" height="2.3" fill="url(#hso174)"/><rect x="1021" y="472" width="641" height="2.3" fill="url(#hso175)"/><rect x="1021" y="474" width="641" height="2.3" fill="url(#hso176)"/><rect x="1021" y="476" width="641" height="2.3" fill="url(#hso177)"/><rect x="1021" y="478" width="641" height="2.3" fill="url(#hso178)"/><rect x="1021" y="480" width="641" height="2.3" fill="url(#hso179)"/><rect x="1021" y="482" width="641" height="2.3" fill="url(#hso180)"/><rect x="1021" y="484" width="641" height="2.3" fill="url(#hso181)"/><rect x="1021" y="486" width="641" height="2.3" fill="url(#hso182)"/><rect x="1021" y="488" width="641" height="2.3" fill="url(#hso183)"/><rect x="1021" y="490" width="641" height="2.3" fill="url(#hso184)"/><rect x="1021" y="492" width="641" height="2.3" fill="url(#hso185)"/><rect x="1021" y="494" width="641" height="2.3" fill="url(#hso186)"/><rect x="1021" y="496" width="641" height="2.3" fill="url(#hso187)"/><rect x="1021" y="498" width="641" height="2.3" fill="url(#hso188)"/><rect x="1021" y="500" width="641" height="2.3" fill="url(#hso189)"/><rect x="1021" y="502" width="641" height="2.3" fill="url(#hso190)"/><rect x="1021" y="504" width="641" height="2.3" fill="url(#hso191)"/><rect x="1021" y="506" width="641" height="2.3" fill="url(#hso192)"/><rect x="1021" y="508" width="641" height="2.3" fill="url(#hso193)"/><rect x="1021" y="510" width="641" height="2.3" fill="url(#hso194)"/><rect x="1021" y="512" width="641" height="2.3" fill="url(#hso195)"/><rect x="1021" y="514" width="641" height="2.3" fill="url(#hso196)"/><rect x="1021" y="516" width="641" height="2.3" fill="url(#hso197)"/><rect x="1021" y="518" width="641" height="2.3" fill="url(#hso198)"/><rect x="1021" y="520" width="641" height="2.3" fill="url(#hso199)"/><rect x="1021" y="522" width="641" height="2.3" fill="url(#hso200)"/><rect x="1021" y="524" width="641" height="2.3" fill="url(#hso201)"/><rect x="1021" y="526" width="641" height="2.3" fill="url(#hso202)"/><rect x="1021" y="528" width="641" height="2.3" fill="url(#hso203)"/><rect x="1021" y="530" width="641" height="2.3" fill="url(#hso204)"/><rect x="1021" y="532" width="641" height="2.3" fill="url(#hso205)"/><rect x="1021" y="534" width="641" height="2.3" fill="url(#hso206)"/><rect x="1021" y="536" width="641" height="2.3" fill="url(#hso207)"/><rect x="1021" y="538" width="641" height="2.3" fill="url(#hso208)"/><rect x="1021" y="540" width="641" height="2.3" fill="url(#hso209)"/><rect x="1021" y="542" width="641" height="2.3" fill="url(#hso210)"/><rect x="1021" y="544" width="641" height="2.3" fill="url(#hso211)"/><rect x="1021" y="546" width="641" height="2.3" fill="url(#hso212)"/><rect x="1021" y="548" width="641" height="2.3" fill="url(#hso213)"/><rect x="1021" y="550" width="641" height="2.3" fill="url(#hso214)"/><rect x="1021" y="552" width="641" height="2.3" fill="url(#hso215)"/><rect x="1021" y="554" width="641" height="2.3" fill="url(#hso216)"/><rect x="1021" y="556" width="641" height="2.3" fill="url(#hso217)"/><rect x="1021" y="558" width="641" height="2.3" fill="url(#hso218)"/><rect x="1021" y="560" width="641" height="2.3" fill="url(#hso219)"/><rect x="1021" y="562" width="641" height="2.3" fill="url(#hso220)"/><rect x="1021" y="564" width="641" height="2.3" fill="url(#hso221)"/><rect x="1021" y="566" width="641" height="2.3" fill="url(#hso222)"/><rect x="1021" y="568" width="641" height="2.3" fill="url(#hso223)"/><rect x="1021" y="570" width="641" height="2.3" fill="url(#hso224)"/><rect x="1021" y="572" width="641" height="2.3" fill="url(#hso225)"/><rect x="1021" y="574" width="641" height="2.3" fill="url(#hso226)"/><rect x="1021" y="576" width="641" height="2.3" fill="url(#hso227)"/><rect x="1021" y="578" width="641" height="2.3" fill="url(#hso228)"/><rect x="1021" y="580" width="641" height="2.3" fill="url(#hso229)"/><rect x="1021" y="582" width="641" height="2.3" fill="url(#hso230)"/><rect x="1021" y="584" width="641" height="2.3" fill="url(#hso231)"/><rect x="1021" y="586" width="641" height="2.3" fill="url(#hso232)"/><rect x="1021" y="588" width="641" height="2.3" fill="url(#hso233)"/><rect x="1021" y="590" width="641" height="2.3" fill="url(#hso234)"/><rect x="1021" y="592" width="641" height="2.3" fill="url(#hso235)"/><rect x="1021" y="594" width="641" height="2.3" fill="url(#hso236)"/><rect x="1021" y="596" width="641" height="2.3" fill="url(#hso237)"/><rect x="1021" y="598" width="641" height="2.3" fill="url(#hso238)"/><rect x="1021" y="600" width="641" height="2.3" fill="url(#hso239)"/><rect x="1021" y="602" width="641" height="2.3" fill="url(#hso240)"/><rect x="1021" y="604" width="641" height="2.3" fill="url(#hso241)"/><rect x="1021" y="606" width="641" height="2.3" fill="url(#hso242)"/><rect x="1021" y="608" width="641" height="2.3" fill="url(#hso243)"/><rect x="1021" y="610" width="641" height="2.3" fill="url(#hso244)"/><rect x="1021" y="612" width="641" height="2.3" fill="url(#hso245)"/></g><g clip-path="url(#hstclip)"><rect x="1153" y="152" width="350" height="2.3" fill="url(#hsi0)"/><rect x="1153" y="154" width="350" height="2.3" fill="url(#hsi1)"/><rect x="1153" y="156" width="350" height="2.3" fill="url(#hsi2)"/><rect x="1153" y="158" width="350" height="2.3" fill="url(#hsi3)"/><rect x="1153" y="160" width="350" height="2.3" fill="url(#hsi4)"/><rect x="1153" y="162" width="350" height="2.3" fill="url(#hsi5)"/><rect x="1153" y="164" width="350" height="2.3" fill="url(#hsi6)"/><rect x="1153" y="166" width="350" height="2.3" fill="url(#hsi7)"/><rect x="1153" y="168" width="350" height="2.3" fill="url(#hsi8)"/><rect x="1153" y="170" width="350" height="2.3" fill="url(#hsi9)"/><rect x="1153" y="172" width="350" height="2.3" fill="url(#hsi10)"/><rect x="1153" y="174" width="350" height="2.3" fill="url(#hsi11)"/><rect x="1153" y="176" width="350" height="2.3" fill="url(#hsi12)"/><rect x="1153" y="178" width="350" height="2.3" fill="url(#hsi13)"/><rect x="1153" y="180" width="350" height="2.3" fill="url(#hsi14)"/><rect x="1153" y="182" width="350" height="2.3" fill="url(#hsi15)"/><rect x="1153" y="184" width="350" height="2.3" fill="url(#hsi16)"/><rect x="1153" y="186" width="350" height="2.3" fill="url(#hsi17)"/><rect x="1153" y="188" width="350" height="2.3" fill="url(#hsi18)"/><rect x="1153" y="190" width="350" height="2.3" fill="url(#hsi19)"/><rect x="1153" y="192" width="350" height="2.3" fill="url(#hsi20)"/><rect x="1153" y="194" width="350" height="2.3" fill="url(#hsi21)"/><rect x="1153" y="196" width="350" height="2.3" fill="url(#hsi22)"/><rect x="1153" y="198" width="350" height="2.3" fill="url(#hsi23)"/><rect x="1153" y="200" width="350" height="2.3" fill="url(#hsi24)"/><rect x="1153" y="202" width="350" height="2.3" fill="url(#hsi25)"/><rect x="1153" y="204" width="350" height="2.3" fill="url(#hsi26)"/><rect x="1153" y="206" width="350" height="2.3" fill="url(#hsi27)"/><rect x="1153" y="208" width="350" height="2.3" fill="url(#hsi28)"/><rect x="1153" y="210" width="350" height="2.3" fill="url(#hsi29)"/><rect x="1153" y="212" width="350" height="2.3" fill="url(#hsi30)"/><rect x="1153" y="214" width="350" height="2.3" fill="url(#hsi31)"/><rect x="1153" y="216" width="350" height="2.3" fill="url(#hsi32)"/><rect x="1153" y="218" width="350" height="2.3" fill="url(#hsi33)"/><rect x="1153" y="220" width="350" height="2.3" fill="url(#hsi34)"/><rect x="1153" y="222" width="350" height="2.3" fill="url(#hsi35)"/><rect x="1153" y="224" width="350" height="2.3" fill="url(#hsi36)"/><rect x="1153" y="226" width="350" height="2.3" fill="url(#hsi37)"/><rect x="1153" y="228" width="350" height="2.3" fill="url(#hsi38)"/><rect x="1153" y="230" width="350" height="2.3" fill="url(#hsi39)"/><rect x="1153" y="232" width="350" height="2.3" fill="url(#hsi40)"/><rect x="1153" y="234" width="350" height="2.3" fill="url(#hsi41)"/><rect x="1153" y="236" width="350" height="2.3" fill="url(#hsi42)"/><rect x="1153" y="238" width="350" height="2.3" fill="url(#hsi43)"/><rect x="1153" y="240" width="350" height="2.3" fill="url(#hsi44)"/><rect x="1153" y="242" width="350" height="2.3" fill="url(#hsi45)"/><rect x="1153" y="244" width="350" height="2.3" fill="url(#hsi46)"/><rect x="1153" y="246" width="350" height="2.3" fill="url(#hsi47)"/><rect x="1153" y="248" width="350" height="2.3" fill="url(#hsi48)"/><rect x="1153" y="250" width="350" height="2.3" fill="url(#hsi49)"/><rect x="1153" y="252" width="350" height="2.3" fill="url(#hsi50)"/><rect x="1153" y="254" width="350" height="2.3" fill="url(#hsi51)"/><rect x="1153" y="256" width="350" height="2.3" fill="url(#hsi52)"/><rect x="1153" y="258" width="350" height="2.3" fill="url(#hsi53)"/><rect x="1153" y="260" width="350" height="2.3" fill="url(#hsi54)"/><rect x="1153" y="262" width="350" height="2.3" fill="url(#hsi55)"/><rect x="1153" y="264" width="350" height="2.3" fill="url(#hsi56)"/><rect x="1153" y="266" width="350" height="2.3" fill="url(#hsi57)"/><rect x="1153" y="268" width="350" height="2.3" fill="url(#hsi58)"/><rect x="1153" y="270" width="350" height="2.3" fill="url(#hsi59)"/><rect x="1153" y="272" width="350" height="2.3" fill="url(#hsi60)"/><rect x="1153" y="274" width="350" height="2.3" fill="url(#hsi61)"/><rect x="1153" y="276" width="350" height="2.3" fill="url(#hsi62)"/><rect x="1153" y="278" width="350" height="2.3" fill="url(#hsi63)"/><rect x="1153" y="280" width="350" height="2.3" fill="url(#hsi64)"/><rect x="1153" y="282" width="350" height="2.3" fill="url(#hsi65)"/><rect x="1153" y="284" width="350" height="2.3" fill="url(#hsi66)"/><rect x="1153" y="286" width="350" height="2.3" fill="url(#hsi67)"/><rect x="1153" y="288" width="350" height="2.3" fill="url(#hsi68)"/><rect x="1153" y="290" width="350" height="2.3" fill="url(#hsi69)"/><rect x="1153" y="292" width="350" height="2.3" fill="url(#hsi70)"/><rect x="1153" y="294" width="350" height="2.3" fill="url(#hsi71)"/><rect x="1153" y="296" width="350" height="2.3" fill="url(#hsi72)"/><rect x="1153" y="298" width="350" height="2.3" fill="url(#hsi73)"/><rect x="1153" y="300" width="350" height="2.3" fill="url(#hsi74)"/><rect x="1153" y="302" width="350" height="2.3" fill="url(#hsi75)"/><rect x="1153" y="304" width="350" height="2.3" fill="url(#hsi76)"/><rect x="1153" y="306" width="350" height="2.3" fill="url(#hsi77)"/><rect x="1153" y="308" width="350" height="2.3" fill="url(#hsi78)"/><rect x="1153" y="310" width="350" height="2.3" fill="url(#hsi79)"/><rect x="1153" y="312" width="350" height="2.3" fill="url(#hsi80)"/><rect x="1153" y="314" width="350" height="2.3" fill="url(#hsi81)"/><rect x="1153" y="316" width="350" height="2.3" fill="url(#hsi82)"/><rect x="1153" y="318" width="350" height="2.3" fill="url(#hsi83)"/><rect x="1153" y="320" width="350" height="2.3" fill="url(#hsi84)"/><rect x="1153" y="322" width="350" height="2.3" fill="url(#hsi85)"/><rect x="1153" y="324" width="350" height="2.3" fill="url(#hsi86)"/><rect x="1153" y="326" width="350" height="2.3" fill="url(#hsi87)"/><rect x="1153" y="328" width="350" height="2.3" fill="url(#hsi88)"/><rect x="1153" y="330" width="350" height="2.3" fill="url(#hsi89)"/><rect x="1153" y="332" width="350" height="2.3" fill="url(#hsi90)"/><rect x="1153" y="334" width="350" height="2.3" fill="url(#hsi91)"/><rect x="1153" y="336" width="350" height="2.3" fill="url(#hsi92)"/><rect x="1153" y="338" width="350" height="2.3" fill="url(#hsi93)"/><rect x="1153" y="340" width="350" height="2.3" fill="url(#hsi94)"/><rect x="1153" y="342" width="350" height="2.3" fill="url(#hsi95)"/><rect x="1153" y="344" width="350" height="2.3" fill="url(#hsi96)"/><rect x="1153" y="346" width="350" height="2.3" fill="url(#hsi97)"/><rect x="1153" y="348" width="350" height="2.3" fill="url(#hsi98)"/><rect x="1153" y="350" width="350" height="2.3" fill="url(#hsi99)"/><rect x="1153" y="352" width="350" height="2.3" fill="url(#hsi100)"/><rect x="1153" y="354" width="350" height="2.3" fill="url(#hsi101)"/><rect x="1153" y="356" width="350" height="2.3" fill="url(#hsi102)"/><rect x="1153" y="358" width="350" height="2.3" fill="url(#hsi103)"/><rect x="1153" y="360" width="350" height="2.3" fill="url(#hsi104)"/><rect x="1153" y="362" width="350" height="2.3" fill="url(#hsi105)"/><rect x="1153" y="364" width="350" height="2.3" fill="url(#hsi106)"/><rect x="1153" y="366" width="350" height="2.3" fill="url(#hsi107)"/><rect x="1153" y="368" width="350" height="2.3" fill="url(#hsi108)"/><rect x="1153" y="370" width="350" height="2.3" fill="url(#hsi109)"/><rect x="1153" y="372" width="350" height="2.3" fill="url(#hsi110)"/><rect x="1153" y="374" width="350" height="2.3" fill="url(#hsi111)"/><rect x="1153" y="376" width="350" height="2.3" fill="url(#hsi112)"/><rect x="1153" y="378" width="350" height="2.3" fill="url(#hsi113)"/><rect x="1153" y="380" width="350" height="2.3" fill="url(#hsi114)"/><rect x="1153" y="382" width="350" height="2.3" fill="url(#hsi115)"/><rect x="1153" y="384" width="350" height="2.3" fill="url(#hsi116)"/><rect x="1153" y="386" width="350" height="2.3" fill="url(#hsi117)"/><rect x="1153" y="388" width="350" height="2.3" fill="url(#hsi118)"/><rect x="1153" y="390" width="350" height="2.3" fill="url(#hsi119)"/><rect x="1153" y="392" width="350" height="2.3" fill="url(#hsi120)"/><rect x="1153" y="394" width="350" height="2.3" fill="url(#hsi121)"/><rect x="1153" y="396" width="350" height="2.3" fill="url(#hsi122)"/><rect x="1153" y="398" width="350" height="2.3" fill="url(#hsi123)"/><rect x="1153" y="400" width="350" height="2.3" fill="url(#hsi124)"/><rect x="1153" y="402" width="350" height="2.3" fill="url(#hsi125)"/><rect x="1153" y="404" width="350" height="2.3" fill="url(#hsi126)"/><rect x="1153" y="406" width="350" height="2.3" fill="url(#hsi127)"/><rect x="1153" y="408" width="350" height="2.3" fill="url(#hsi128)"/><rect x="1153" y="410" width="350" height="2.3" fill="url(#hsi129)"/><rect x="1153" y="412" width="350" height="2.3" fill="url(#hsi130)"/><rect x="1153" y="414" width="350" height="2.3" fill="url(#hsi131)"/><rect x="1153" y="416" width="350" height="2.3" fill="url(#hsi132)"/><rect x="1153" y="418" width="350" height="2.3" fill="url(#hsi133)"/><rect x="1153" y="420" width="350" height="2.3" fill="url(#hsi134)"/><rect x="1153" y="422" width="350" height="2.3" fill="url(#hsi135)"/><rect x="1153" y="424" width="350" height="2.3" fill="url(#hsi136)"/><rect x="1153" y="426" width="350" height="2.3" fill="url(#hsi137)"/><rect x="1153" y="428" width="350" height="2.3" fill="url(#hsi138)"/><rect x="1153" y="430" width="350" height="2.3" fill="url(#hsi139)"/><rect x="1153" y="432" width="350" height="2.3" fill="url(#hsi140)"/><rect x="1153" y="434" width="350" height="2.3" fill="url(#hsi141)"/><rect x="1153" y="436" width="350" height="2.3" fill="url(#hsi142)"/><rect x="1153" y="438" width="350" height="2.3" fill="url(#hsi143)"/><rect x="1153" y="440" width="350" height="2.3" fill="url(#hsi144)"/><rect x="1153" y="442" width="350" height="2.3" fill="url(#hsi145)"/><rect x="1153" y="444" width="350" height="2.3" fill="url(#hsi146)"/><rect x="1153" y="446" width="350" height="2.3" fill="url(#hsi147)"/><rect x="1153" y="448" width="350" height="2.3" fill="url(#hsi148)"/><rect x="1153" y="450" width="350" height="2.3" fill="url(#hsi149)"/><rect x="1153" y="452" width="350" height="2.3" fill="url(#hsi150)"/><rect x="1153" y="454" width="350" height="2.3" fill="url(#hsi151)"/><rect x="1153" y="456" width="350" height="2.3" fill="url(#hsi152)"/><rect x="1153" y="458" width="350" height="2.3" fill="url(#hsi153)"/><rect x="1153" y="460" width="350" height="2.3" fill="url(#hsi154)"/><rect x="1153" y="462" width="350" height="2.3" fill="url(#hsi155)"/><rect x="1153" y="464" width="350" height="2.3" fill="url(#hsi156)"/><rect x="1153" y="466" width="350" height="2.3" fill="url(#hsi157)"/><rect x="1153" y="468" width="350" height="2.3" fill="url(#hsi158)"/><rect x="1153" y="470" width="350" height="2.3" fill="url(#hsi159)"/><rect x="1153" y="472" width="350" height="2.3" fill="url(#hsi160)"/><rect x="1153" y="474" width="350" height="2.3" fill="url(#hsi161)"/><rect x="1153" y="476" width="350" height="2.3" fill="url(#hsi162)"/><rect x="1153" y="478" width="350" height="2.3" fill="url(#hsi163)"/><rect x="1153" y="480" width="350" height="2.3" fill="url(#hsi164)"/><rect x="1153" y="482" width="350" height="2.3" fill="url(#hsi165)"/><rect x="1153" y="484" width="350" height="2.3" fill="url(#hsi166)"/></g></g>
<rect x="1021.5" y="121.5" width="640.5" height="492.0" fill="none" stroke="#8f8f8f" stroke-width="1.8"/>
<text x="1324.5" y="116" font-size="14" fill="#d4d4d4" text-anchor="middle" textLength="85" lengthAdjust="spacingAndGlyphs">CIE 1976 u'v'</text>
<line x1="1015.5" y1="613.5" x2="1021.5" y2="613.5" stroke="#d8d8d8" stroke-width="1.5"/>
<text x="1014.0" y="621.0" font-size="14" fill="#d4d4d4" text-anchor="end">0</text>
<line x1="1021.8" y1="613.5" x2="1021.8" y2="619.5" stroke="#d8d8d8" stroke-width="1.5"/>
<text x="1021.8" y="635" font-size="14" fill="#d4d4d4" text-anchor="middle">0</text>
<line x1="1015.5" y1="572.6" x2="1021.5" y2="572.6" stroke="#d8d8d8" stroke-width="1.5"/>
<text x="1014.0" y="579.9" font-size="14" fill="#d4d4d4" text-anchor="end">0,05</text>
<line x1="1075.0349999999999" y1="613.5" x2="1075.0349999999999" y2="619.5" stroke="#d8d8d8" stroke-width="1.5"/>
<text x="1075.0349999999999" y="635" font-size="14" fill="#d4d4d4" text-anchor="middle">0,05</text>
<line x1="1015.5" y1="531.7" x2="1021.5" y2="531.7" stroke="#d8d8d8" stroke-width="1.5"/>
<text x="1014.0" y="538.8" font-size="14" fill="#d4d4d4" text-anchor="end">0,1</text>
<line x1="1128.27" y1="613.5" x2="1128.27" y2="619.5" stroke="#d8d8d8" stroke-width="1.5"/>
<text x="1128.27" y="635" font-size="14" fill="#d4d4d4" text-anchor="middle">0,1</text>
<line x1="1015.5" y1="490.79999999999995" x2="1021.5" y2="490.79999999999995" stroke="#d8d8d8" stroke-width="1.5"/>
<text x="1014.0" y="497.7" font-size="14" fill="#d4d4d4" text-anchor="end">0,15</text>
<line x1="1181.505" y1="613.5" x2="1181.505" y2="619.5" stroke="#d8d8d8" stroke-width="1.5"/>
<text x="1181.505" y="635" font-size="14" fill="#d4d4d4" text-anchor="middle">0,15</text>
<line x1="1015.5" y1="449.9" x2="1021.5" y2="449.9" stroke="#d8d8d8" stroke-width="1.5"/>
<text x="1014.0" y="456.6" font-size="14" fill="#d4d4d4" text-anchor="end">0,2</text>
<line x1="1234.74" y1="613.5" x2="1234.74" y2="619.5" stroke="#d8d8d8" stroke-width="1.5"/>
<text x="1234.74" y="635" font-size="14" fill="#d4d4d4" text-anchor="middle">0,2</text>
<line x1="1015.5" y1="409.0" x2="1021.5" y2="409.0" stroke="#d8d8d8" stroke-width="1.5"/>
<text x="1014.0" y="415.5" font-size="14" fill="#d4d4d4" text-anchor="end">0,25</text>
<line x1="1287.975" y1="613.5" x2="1287.975" y2="619.5" stroke="#d8d8d8" stroke-width="1.5"/>
<text x="1287.975" y="635" font-size="14" fill="#d4d4d4" text-anchor="middle">0,25</text>
<line x1="1015.5" y1="368.09999999999997" x2="1021.5" y2="368.09999999999997" stroke="#d8d8d8" stroke-width="1.5"/>
<text x="1014.0" y="374.4" font-size="14" fill="#d4d4d4" text-anchor="end">0,3</text>
<line x1="1341.21" y1="613.5" x2="1341.21" y2="619.5" stroke="#d8d8d8" stroke-width="1.5"/>
<text x="1341.21" y="635" font-size="14" fill="#d4d4d4" text-anchor="middle">0,3</text>
<line x1="1015.5" y1="327.2" x2="1021.5" y2="327.2" stroke="#d8d8d8" stroke-width="1.5"/>
<text x="1014.0" y="333.29999999999995" font-size="14" fill="#d4d4d4" text-anchor="end">0,35</text>
<line x1="1394.445" y1="613.5" x2="1394.445" y2="619.5" stroke="#d8d8d8" stroke-width="1.5"/>
<text x="1394.445" y="635" font-size="14" fill="#d4d4d4" text-anchor="middle">0,35</text>
<line x1="1015.5" y1="286.29999999999995" x2="1021.5" y2="286.29999999999995" stroke="#d8d8d8" stroke-width="1.5"/>
<text x="1014.0" y="292.2" font-size="14" fill="#d4d4d4" text-anchor="end">0,4</text>
<line x1="1447.68" y1="613.5" x2="1447.68" y2="619.5" stroke="#d8d8d8" stroke-width="1.5"/>
<text x="1447.68" y="635" font-size="14" fill="#d4d4d4" text-anchor="middle">0,4</text>
<line x1="1015.5" y1="245.39999999999998" x2="1021.5" y2="245.39999999999998" stroke="#d8d8d8" stroke-width="1.5"/>
<text x="1014.0" y="251.09999999999997" font-size="14" fill="#d4d4d4" text-anchor="end">0,45</text>
<line x1="1500.915" y1="613.5" x2="1500.915" y2="619.5" stroke="#d8d8d8" stroke-width="1.5"/>
<text x="1500.915" y="635" font-size="14" fill="#d4d4d4" text-anchor="middle">0,45</text>
<line x1="1015.5" y1="204.5" x2="1021.5" y2="204.5" stroke="#d8d8d8" stroke-width="1.5"/>
<text x="1014.0" y="210.0" font-size="14" fill="#d4d4d4" text-anchor="end">0,5</text>
<line x1="1554.15" y1="613.5" x2="1554.15" y2="619.5" stroke="#d8d8d8" stroke-width="1.5"/>
<text x="1554.15" y="635" font-size="14" fill="#d4d4d4" text-anchor="middle">0,5</text>
<line x1="1015.5" y1="163.59999999999997" x2="1021.5" y2="163.59999999999997" stroke="#d8d8d8" stroke-width="1.5"/>
<text x="1014.0" y="168.89999999999998" font-size="14" fill="#d4d4d4" text-anchor="end">0,55</text>
<line x1="1607.385" y1="613.5" x2="1607.385" y2="619.5" stroke="#d8d8d8" stroke-width="1.5"/>
<text x="1607.385" y="635" font-size="14" fill="#d4d4d4" text-anchor="middle">0,55</text>
<rect x="1147.3" y="144.3" width="14" height="14" fill="none" stroke="#ffffff" stroke-width="1.6" stroke-opacity="0.85"/><rect x="1159.5" y="156.2" width="14" height="14" fill="none" stroke="#ffffff" stroke-width="1.6" stroke-opacity="0.85"/><rect x="1171.4" y="168.6" width="14" height="14" fill="none" stroke="#ffffff" stroke-width="1.6" stroke-opacity="0.85"/><rect x="1186.2" y="183.3" width="14" height="14" fill="none" stroke="#ffffff" stroke-width="1.6" stroke-opacity="0.85"/><rect x="1204.4" y="200.4" width="14" height="14" fill="none" stroke="#ffffff" stroke-width="1.6" stroke-opacity="0.85"/><rect x="1231.3" y="152.2" width="14" height="14" fill="none" stroke="#ffffff" stroke-width="1.6" stroke-opacity="0.85"/><rect x="1230.4" y="164.0" width="14" height="14" fill="none" stroke="#ffffff" stroke-width="1.6" stroke-opacity="0.85"/><rect x="1229.8" y="176.4" width="14" height="14" fill="none" stroke="#ffffff" stroke-width="1.6" stroke-opacity="0.85"/><rect x="1228.7" y="189.5" width="14" height="14" fill="none" stroke="#ffffff" stroke-width="1.6" stroke-opacity="0.85"/><rect x="1227.2" y="204.0" width="14" height="14" fill="none" stroke="#ffffff" stroke-width="1.6" stroke-opacity="0.85"/><rect x="1161.0" y="232.4" width="14" height="14" fill="none" stroke="#ffffff" stroke-width="1.6" stroke-opacity="0.85"/><rect x="1174.3" y="230.0" width="14" height="14" fill="none" stroke="#ffffff" stroke-width="1.6" stroke-opacity="0.85"/><rect x="1186.2" y="228.0" width="14" height="14" fill="none" stroke="#ffffff" stroke-width="1.6" stroke-opacity="0.85"/><rect x="1200.4" y="226.4" width="14" height="14" fill="none" stroke="#ffffff" stroke-width="1.6" stroke-opacity="0.85"/><rect x="1212.3" y="224.2" width="14" height="14" fill="none" stroke="#ffffff" stroke-width="1.6" stroke-opacity="0.85"/><rect x="1273.3" y="213.5" width="14" height="14" fill="none" stroke="#ffffff" stroke-width="1.6" stroke-opacity="0.85"/><rect x="1326.5" y="204.2" width="14" height="14" fill="none" stroke="#ffffff" stroke-width="1.6" stroke-opacity="0.85"/><rect x="1375.5" y="197.2" width="14" height="14" fill="none" stroke="#ffffff" stroke-width="1.6" stroke-opacity="0.85"/><rect x="1430.4" y="187.1" width="14" height="14" fill="none" stroke="#ffffff" stroke-width="1.6" stroke-opacity="0.85"/><rect x="1494.5" y="176.8" width="14" height="14" fill="none" stroke="#ffffff" stroke-width="1.6" stroke-opacity="0.85"/><rect x="1242.5" y="238.3" width="14" height="14" fill="none" stroke="#ffffff" stroke-width="1.6" stroke-opacity="0.85"/><rect x="1261.4" y="257.2" width="14" height="14" fill="none" stroke="#ffffff" stroke-width="1.6" stroke-opacity="0.85"/><rect x="1280.2" y="277.0" width="14" height="14" fill="none" stroke="#ffffff" stroke-width="1.6" stroke-opacity="0.85"/><rect x="1306.4" y="303.2" width="14" height="14" fill="none" stroke="#ffffff" stroke-width="1.6" stroke-opacity="0.85"/><rect x="1339.3" y="334.2" width="14" height="14" fill="none" stroke="#ffffff" stroke-width="1.6" stroke-opacity="0.85"/><rect x="1222.1" y="251.2" width="14" height="14" fill="none" stroke="#ffffff" stroke-width="1.6" stroke-opacity="0.85"/><rect x="1219.3" y="288.3" width="14" height="14" fill="none" stroke="#ffffff" stroke-width="1.6" stroke-opacity="0.85"/><rect x="1215.5" y="333.2" width="14" height="14" fill="none" stroke="#ffffff" stroke-width="1.6" stroke-opacity="0.85"/><rect x="1209.4" y="390.3" width="14" height="14" fill="none" stroke="#ffffff" stroke-width="1.6" stroke-opacity="0.85"/><rect x="1201.4" y="476.4" width="14" height="14" fill="none" stroke="#ffffff" stroke-width="1.6" stroke-opacity="0.85"/>
<ellipse cx="1153.8" cy="151.3" rx="4.9" ry="4.3" fill="#10a010" stroke="#000" stroke-width="1.1"/><ellipse cx="1166.5" cy="163.3" rx="4.9" ry="4.3" fill="#50a050" stroke="#000" stroke-width="1.1"/><ellipse cx="1178.4" cy="176.9" rx="4.9" ry="4.3" fill="#70a870" stroke="#000" stroke-width="1.1"/><ellipse cx="1191.8" cy="193.2" rx="4.9" ry="4.3" fill="#88b088" stroke="#000" stroke-width="1.1"/><ellipse cx="1209.9" cy="210.8" rx="4.9" ry="4.3" fill="#a0b8a0" stroke="#000" stroke-width="1.1"/><ellipse cx="1238.3" cy="159.3" rx="4.9" ry="4.3" fill="#b8b820" stroke="#000" stroke-width="1.1"/><ellipse cx="1236.8" cy="172" rx="4.9" ry="4.3" fill="#b8b860" stroke="#000" stroke-width="1.1"/><ellipse cx="1236" cy="183.9" rx="4.9" ry="4.3" fill="#b8b878" stroke="#000" stroke-width="1.1"/><ellipse cx="1234.5" cy="198.75" rx="4.9" ry="4.3" fill="#b8b890" stroke="#000" stroke-width="1.1"/><ellipse cx="1233" cy="215.3" rx="4.9" ry="4.3" fill="#b8b8a0" stroke="#000" stroke-width="1.1"/><ellipse cx="1168" cy="243.8" rx="4.9" ry="4.3" fill="#30b0b0" stroke="#000" stroke-width="1.1"/><ellipse cx="1181.3" cy="242.3" rx="4.9" ry="4.3" fill="#60b0b0" stroke="#000" stroke-width="1.1"/><ellipse cx="1191.8" cy="239.8" rx="4.9" ry="4.3" fill="#88b4b4" stroke="#000" stroke-width="1.1"/><ellipse cx="1205.9" cy="236.4" rx="4.9" ry="4.3" fill="#98b8b8" stroke="#000" stroke-width="1.1"/><ellipse cx="1217.8" cy="235.7" rx="4.9" ry="4.3" fill="#a8b8b8" stroke="#000" stroke-width="1.1"/><ellipse cx="1277.9" cy="223.5" rx="4.9" ry="4.3" fill="#b89090" stroke="#000" stroke-width="1.1"/><ellipse cx="1332.5" cy="214" rx="4.9" ry="4.3" fill="#b87070" stroke="#000" stroke-width="1.1"/><ellipse cx="1382.9" cy="204.6" rx="4.9" ry="4.3" fill="#b85050" stroke="#000" stroke-width="1.1"/><ellipse cx="1442.4" cy="193.7" rx="4.9" ry="4.3" fill="#c04040" stroke="#000" stroke-width="1.1"/><ellipse cx="1508" cy="182.4" rx="4.9" ry="4.3" fill="#d02020" stroke="#000" stroke-width="1.1"/><ellipse cx="1246.5" cy="249.3" rx="4.9" ry="4.3" fill="#b8a0b8" stroke="#000" stroke-width="1.1"/><ellipse cx="1265.8" cy="269.7" rx="4.9" ry="4.3" fill="#b890b8" stroke="#000" stroke-width="1.1"/><ellipse cx="1283.3" cy="289" rx="4.9" ry="4.3" fill="#b878b8" stroke="#000" stroke-width="1.1"/><ellipse cx="1310.4" cy="317.3" rx="4.9" ry="4.3" fill="#b858b8" stroke="#000" stroke-width="1.1"/><ellipse cx="1341.8" cy="349.9" rx="4.9" ry="4.3" fill="#b020b0" stroke="#000" stroke-width="1.1"/><ellipse cx="1227.3" cy="264.2" rx="4.9" ry="4.3" fill="#a0a0c0" stroke="#000" stroke-width="1.1"/><ellipse cx="1223.3" cy="302.3" rx="4.9" ry="4.3" fill="#8888c0" stroke="#000" stroke-width="1.1"/><ellipse cx="1219.5" cy="348.2" rx="4.9" ry="4.3" fill="#7070c0" stroke="#000" stroke-width="1.1"/><ellipse cx="1212.3" cy="409.8" rx="4.9" ry="4.3" fill="#5858c0" stroke="#000" stroke-width="1.1"/><ellipse cx="1206" cy="485.2" rx="4.9" ry="4.3" fill="#2020d0" stroke="#000" stroke-width="1.1"/>
<rect x="1224.6" y="221.5" width="14" height="14" fill="none" stroke="#000" stroke-width="2"/>
<ellipse cx="1230.4" cy="232.7" rx="4.9" ry="4.3" fill="#ffffff" stroke="#000" stroke-width="1.1"/>
<rect x="1443.5" y="461.5" width="211.0" height="143.0" fill="url(#insUp)"/>
<path d="M1443.5,477 L1654.5,590 L1654.5,604.5 L1443.5,604.5 Z" fill="url(#insLo)"/>
<rect x="1443.5" y="461.5" width="211.0" height="143.0" fill="none" stroke="#8a8a8a" stroke-width="1.5"/>
<rect x="1541.4" y="525.4" width="14" height="14" fill="none" stroke="#ffffff" stroke-width="1.8"/>
<circle cx="1548.4" cy="529" r="4" fill="#b0b000" stroke="#000" stroke-width="1.3"/>
<text x="54" y="681" font-size="27" fill="#f2f2f2" textLength="231.5" lengthAdjust="spacingAndGlyphs" stroke="#f2f2f2" stroke-width="0.5">Avg dE2000: 1,41</text>
<text x="48" y="721.5" font-size="27" fill="#f2f2f2" textLength="243.5" lengthAdjust="spacingAndGlyphs" stroke="#f2f2f2" stroke-width="0.5">Max dE2000: 3,64</text>
<text x="17" y="769.5" font-size="27" fill="#f2f2f2" textLength="222" lengthAdjust="spacingAndGlyphs" stroke="#f2f2f2" stroke-width="0.5">Current Reading</text>
<text x="18.6" y="804.5" font-size="25" fill="#f2f2f2" textLength="101" lengthAdjust="spacingAndGlyphs" stroke="#f2f2f2" stroke-width="0.5">x: 0,4192</text>
<text x="174.7" y="804.5" font-size="25" fill="#f2f2f2" textLength="102.7" lengthAdjust="spacingAndGlyphs" stroke="#f2f2f2" stroke-width="0.5">y: 0,5065</text>
<text x="18.6" y="845" font-size="25" fill="#f2f2f2" textLength="82" lengthAdjust="spacingAndGlyphs" stroke="#f2f2f2" stroke-width="0.5">fL: 82,1</text>
<text x="18.6" y="879.5" font-size="25" fill="#f2f2f2" textLength="145" lengthAdjust="spacingAndGlyphs" stroke="#f2f2f2" stroke-width="0.5">cd/m²: 281,3</text>
<rect x="360.5" y="688" width="250.0" height="180" fill="#232323"/>
<line x1="360.5" y1="706.0" x2="610.5" y2="706.0" stroke="#8f8f8f" stroke-width="1.6"/>
<line x1="353.5" y1="706.0" x2="360.5" y2="706.0" stroke="#d8d8d8" stroke-width="1.5"/>
<text x="353.5" y="711.0" font-size="14" fill="#d4d4d4" text-anchor="end">104</text>
<line x1="360.5" y1="742.0" x2="610.5" y2="742.0" stroke="#8f8f8f" stroke-width="1.6"/>
<line x1="353.5" y1="742.0" x2="360.5" y2="742.0" stroke="#d8d8d8" stroke-width="1.5"/>
<text x="353.5" y="747.0" font-size="14" fill="#d4d4d4" text-anchor="end">102</text>
<line x1="360.5" y1="778.0" x2="610.5" y2="778.0" stroke="#8f8f8f" stroke-width="1.6"/>
<line x1="353.5" y1="778.0" x2="360.5" y2="778.0" stroke="#d8d8d8" stroke-width="1.5"/>
<text x="353.5" y="783.0" font-size="14" fill="#d4d4d4" text-anchor="end">100</text>
<line x1="360.5" y1="814.0" x2="610.5" y2="814.0" stroke="#8f8f8f" stroke-width="1.6"/>
<line x1="353.5" y1="814.0" x2="360.5" y2="814.0" stroke="#d8d8d8" stroke-width="1.5"/>
<text x="353.5" y="819.0" font-size="14" fill="#d4d4d4" text-anchor="end">98</text>
<line x1="360.5" y1="850.0" x2="610.5" y2="850.0" stroke="#8f8f8f" stroke-width="1.6"/>
<line x1="353.5" y1="850.0" x2="360.5" y2="850.0" stroke="#d8d8d8" stroke-width="1.5"/>
<text x="353.5" y="855.0" font-size="14" fill="#d4d4d4" text-anchor="end">96</text>
<rect x="384.5" y="784.3" width="66.5" height="83.70000000000005" fill="#000"/>
<rect x="386.0" y="786.0999999999999" width="63.5" height="81.90000000000005" fill="url(#rbR)"/>
<rect x="451" y="780.8" width="66.5" height="87.20000000000005" fill="#000"/>
<rect x="452.5" y="782.5999999999999" width="63.5" height="85.40000000000005" fill="url(#rbG)"/>
<rect x="517.5" y="800.6" width="66.5" height="67.39999999999998" fill="#000"/>
<rect x="519.0" y="802.4" width="63.5" height="65.59999999999998" fill="url(#rbB)"/>
<rect x="360.5" y="688" width="250.0" height="180" fill="none" stroke="#8f8f8f" stroke-width="1.8"/>
<line x1="360.5" y1="868" x2="360.5" y2="874" stroke="#d8d8d8" stroke-width="1.5"/>
<line x1="610.5" y1="868" x2="610.5" y2="874" stroke="#d8d8d8" stroke-width="1.5"/>
<text x="470.3" y="682.5" font-size="13" fill="#d4d4d4" text-anchor="middle" textLength="82.5" lengthAdjust="spacingAndGlyphs">RGB Balance</text>
<text x="486" y="884.5" font-size="14" fill="#d4d4d4" text-anchor="middle">100%</text>
<rect x="631" y="656" width="729.5" height="236" fill="#000000"/>
<rect x="632" y="657" width="726.5999999999999" height="15" fill="#333333"/>
<rect x="632" y="672" width="726.5999999999999" height="13.7" fill="#141414"/>
<rect x="632" y="685.7" width="726.5999999999999" height="26.0" fill="#434343"/>
<rect x="632" y="711.5" width="726.5999999999999" height="26.0" fill="#8a8a8a"/>
<rect x="632" y="737.2" width="726.5999999999999" height="26.0" fill="#434343"/>
<rect x="632" y="763.0" width="726.5999999999999" height="26.0" fill="#8a8a8a"/>
<rect x="632" y="788.7" width="726.5999999999999" height="26.0" fill="#434343"/>
<rect x="632" y="814.5" width="726.5999999999999" height="26.0" fill="#8a8a8a"/>
<rect x="632" y="840.2" width="726.5999999999999" height="26.0" fill="#434343"/>
<rect x="632" y="866.0" width="726.5999999999999" height="26.0" fill="#8a8a8a"/>
<text x="650.5" y="704.4" font-size="15" fill="#f4f4f4" font-weight="bold" textLength="86.3" lengthAdjust="spacingAndGlyphs">x: CIE31</text>
<text x="833" y="704.4" font-size="15" fill="#f4f4f4" textLength="67.5" lengthAdjust="spacingAndGlyphs">0,3291</text>
<text x="939.5" y="704.4" font-size="15" fill="#f4f4f4" textLength="67.5" lengthAdjust="spacingAndGlyphs">0,3515</text>
<text x="1046" y="704.4" font-size="15" fill="#f4f4f4" textLength="67.5" lengthAdjust="spacingAndGlyphs">0,3736</text>
<text x="1152.2" y="704.4" font-size="15" fill="#f4f4f4" textLength="67.5" lengthAdjust="spacingAndGlyphs">0,3943</text>
<text x="1258.6" y="704.4" font-size="15" fill="#f4f4f4" textLength="67.5" lengthAdjust="spacingAndGlyphs">0,4192</text>
<text x="650.5" y="730.2" font-size="15" fill="#f4f4f4" font-weight="bold" textLength="86.3" lengthAdjust="spacingAndGlyphs">y: CIE31</text>
<text x="833" y="730.2" font-size="15" fill="#f4f4f4" textLength="67.5" lengthAdjust="spacingAndGlyphs">0,3580</text>
<text x="939.5" y="730.2" font-size="15" fill="#f4f4f4" textLength="67.5" lengthAdjust="spacingAndGlyphs">0,3950</text>
<text x="1046" y="730.2" font-size="15" fill="#f4f4f4" textLength="67.5" lengthAdjust="spacingAndGlyphs">0,4318</text>
<text x="1152.2" y="730.2" font-size="15" fill="#f4f4f4" textLength="67.5" lengthAdjust="spacingAndGlyphs">0,4659</text>
<text x="1258.6" y="730.2" font-size="15" fill="#f4f4f4" textLength="67.5" lengthAdjust="spacingAndGlyphs">0,5065</text>
<text x="650.5" y="755.9" font-size="15" fill="#f4f4f4" font-weight="bold" textLength="14.5" lengthAdjust="spacingAndGlyphs">Y</text>
<text x="833" y="755.9" font-size="15" fill="#f4f4f4" textLength="93" lengthAdjust="spacingAndGlyphs">296,3925</text>
<text x="939.5" y="755.9" font-size="15" fill="#f4f4f4" textLength="93" lengthAdjust="spacingAndGlyphs">291,8564</text>
<text x="1046" y="755.9" font-size="15" fill="#f4f4f4" textLength="93" lengthAdjust="spacingAndGlyphs">288,1789</text>
<text x="1152.2" y="755.9" font-size="15" fill="#f4f4f4" textLength="93" lengthAdjust="spacingAndGlyphs">285,8084</text>
<text x="1258.6" y="755.9" font-size="15" fill="#f4f4f4" textLength="93" lengthAdjust="spacingAndGlyphs">281,2968</text>
<text x="650.5" y="781.7" font-size="15" fill="#f4f4f4" font-weight="bold" textLength="157" lengthAdjust="spacingAndGlyphs">Target x:CIE31</text>
<text x="833" y="781.7" font-size="15" fill="#f4f4f4" textLength="67.5" lengthAdjust="spacingAndGlyphs">0,3344</text>
<text x="939.5" y="781.7" font-size="15" fill="#f4f4f4" textLength="67.5" lengthAdjust="spacingAndGlyphs">0,3564</text>
<text x="1046" y="781.7" font-size="15" fill="#f4f4f4" textLength="67.5" lengthAdjust="spacingAndGlyphs">0,3773</text>
<text x="1152.2" y="781.7" font-size="15" fill="#f4f4f4" textLength="67.5" lengthAdjust="spacingAndGlyphs">0,3969</text>
<text x="1258.6" y="781.7" font-size="15" fill="#f4f4f4" textLength="67.5" lengthAdjust="spacingAndGlyphs">0,4193</text>
<text x="650.5" y="807.4" font-size="15" fill="#f4f4f4" font-weight="bold" textLength="157" lengthAdjust="spacingAndGlyphs">Target y:CIE31</text>
<text x="833" y="807.4" font-size="15" fill="#f4f4f4" textLength="67.5" lengthAdjust="spacingAndGlyphs">0,3648</text>
<text x="939.5" y="807.4" font-size="15" fill="#f4f4f4" textLength="67.5" lengthAdjust="spacingAndGlyphs">0,4013</text>
<text x="1046" y="807.4" font-size="15" fill="#f4f4f4" textLength="67.5" lengthAdjust="spacingAndGlyphs">0,4358</text>
<text x="1152.2" y="807.4" font-size="15" fill="#f4f4f4" textLength="67.5" lengthAdjust="spacingAndGlyphs">0,4682</text>
<text x="1258.6" y="807.4" font-size="15" fill="#f4f4f4" textLength="67.5" lengthAdjust="spacingAndGlyphs">0,5053</text>
<text x="650.5" y="833.2" font-size="15" fill="#f4f4f4" font-weight="bold" textLength="92" lengthAdjust="spacingAndGlyphs">Target Y</text>
<text x="833" y="833.2" font-size="15" fill="#f4f4f4" textLength="93" lengthAdjust="spacingAndGlyphs">299,0220</text>
<text x="939.5" y="833.2" font-size="15" fill="#f4f4f4" textLength="93" lengthAdjust="spacingAndGlyphs">293,7732</text>
<text x="1046" y="833.2" font-size="15" fill="#f4f4f4" textLength="93" lengthAdjust="spacingAndGlyphs">289,7404</text>
<text x="1152.2" y="833.2" font-size="15" fill="#f4f4f4" textLength="93" lengthAdjust="spacingAndGlyphs">286,5754</text>
<text x="1258.6" y="833.2" font-size="15" fill="#f4f4f4" textLength="93" lengthAdjust="spacingAndGlyphs">283,5155</text>
<text x="650.5" y="858.9" font-size="15" fill="#f4f4f4" font-weight="bold" textLength="90.5" lengthAdjust="spacingAndGlyphs">ΔE 2000</text>
<text x="833" y="858.9" font-size="15" fill="#f4f4f4" textLength="67.5" lengthAdjust="spacingAndGlyphs">1,8560</text>
<text x="939.5" y="858.9" font-size="15" fill="#f4f4f4" textLength="67.5" lengthAdjust="spacingAndGlyphs">1,2606</text>
<text x="1046" y="858.9" font-size="15" fill="#f4f4f4" textLength="67.5" lengthAdjust="spacingAndGlyphs">0,7722</text>
<text x="1152.2" y="858.9" font-size="15" fill="#f4f4f4" textLength="67.5" lengthAdjust="spacingAndGlyphs">0,4860</text>
<text x="1258.6" y="858.9" font-size="15" fill="#f4f4f4" textLength="67.5" lengthAdjust="spacingAndGlyphs">0,2262</text>
<text x="650.5" y="884.7" font-size="15" fill="#f4f4f4" font-weight="bold" textLength="72.5" lengthAdjust="spacingAndGlyphs">ΔE ITP</text>
<text x="833" y="884.7" font-size="15" fill="#f4f4f4" textLength="67.5" lengthAdjust="spacingAndGlyphs">3,5107</text>
<text x="939.5" y="884.7" font-size="15" fill="#f4f4f4" textLength="67.5" lengthAdjust="spacingAndGlyphs">3,4298</text>
<text x="1046" y="884.7" font-size="15" fill="#f4f4f4" textLength="67.5" lengthAdjust="spacingAndGlyphs">2,6494</text>
<text x="1152.2" y="884.7" font-size="15" fill="#f4f4f4" textLength="67.5" lengthAdjust="spacingAndGlyphs">1,9107</text>
<text x="1258.6" y="884.7" font-size="15" fill="#f4f4f4" textLength="67.5" lengthAdjust="spacingAndGlyphs">0,9602</text>
<text x="880" y="677" font-size="15" fill="#f4f4f4" text-anchor="middle" font-weight="bold" textLength="39.5" lengthAdjust="spacingAndGlyphs">20%</text>
<text x="986" y="677" font-size="15" fill="#f4f4f4" text-anchor="middle" font-weight="bold" textLength="39.5" lengthAdjust="spacingAndGlyphs">40%</text>
<text x="1092.5" y="677" font-size="15" fill="#f4f4f4" text-anchor="middle" font-weight="bold" textLength="39.5" lengthAdjust="spacingAndGlyphs">60%</text>
<text x="1198.6" y="677" font-size="15" fill="#f4f4f4" text-anchor="middle" font-weight="bold" textLength="39.5" lengthAdjust="spacingAndGlyphs">80%</text>
<text x="1305.4" y="677" font-size="15" fill="#f4f4f4" text-anchor="middle" font-weight="bold" textLength="49" lengthAdjust="spacingAndGlyphs">100%</text>
<rect x="0" y="931" width="1672" height="77" fill="#2a2a2a"/>
<rect x="0" y="931" width="1672" height="77" fill="url(#tbbg)"/>
<rect x="4" y="931" width="56.5" height="82" rx="5" fill="url(#btnG)"/>
<circle cx="32" cy="942.5" r="9.5" fill="url(#circG)"/>
<path d="M27,945.5 L37,945.5 L32,939.5 Z" fill="#2a2a2a"/>
<rect x="10" y="964" width="44" height="37.5" rx="5" fill="#ffff00" stroke="#c8c800" stroke-width="1"/>
<rect x="68" y="931.5" width="187" height="82" rx="5" fill="url(#btnG)"/>
<rect x="75" y="938" width="173.5" height="45" rx="5" fill="#c2c2a4" stroke="#8a8a60" stroke-width="0.8"/>
<text x="161.5" y="1002" font-size="13" fill="#262626" text-anchor="middle" font-weight="bold">20%</text>
<rect x="258" y="931.5" width="187" height="82" rx="5" fill="url(#btnG)"/>
<rect x="265" y="938" width="173.5" height="45" rx="5" fill="#c2c28a" stroke="#8a8a60" stroke-width="0.8"/>
<text x="351.5" y="1002" font-size="13" fill="#262626" text-anchor="middle" font-weight="bold">40%</text>
<rect x="448" y="931.5" width="187" height="82" rx="5" fill="url(#btnG)"/>
<rect x="455" y="938" width="173.5" height="45" rx="5" fill="#c2c06e" stroke="#8a8a60" stroke-width="0.8"/>
<text x="541.5" y="1002" font-size="13" fill="#262626" text-anchor="middle" font-weight="bold">60%</text>
<rect x="638" y="931.5" width="187" height="82" rx="5" fill="url(#btnG)"/>
<rect x="645" y="938" width="173.5" height="45" rx="5" fill="#c2c04e" stroke="#8a8a60" stroke-width="0.8"/>
<text x="731.5" y="1002" font-size="13" fill="#262626" text-anchor="middle" font-weight="bold">80%</text>
<rect x="828" y="931.5" width="187" height="82" rx="5" fill="url(#btnSel)"/>
<rect x="834" y="937.5" width="175" height="45.5" rx="5" fill="#c0c000"/>
<text x="921.5" y="1002" font-size="13" fill="#ffffff" text-anchor="middle" font-weight="bold">100%</text>
<rect x="1269" y="931" width="60.5" height="82" rx="5" fill="url(#btnG)"/>
<line x1="1269" y1="954.5" x2="1329.5" y2="954.5" stroke="#333" stroke-width="1.5"/>
<circle cx="1299" cy="942.5" r="9.5" fill="url(#circG)"/>
<path d="M1294,945.5 L1304,945.5 L1299,939.5 Z" fill="#2a2a2a"/>
<rect x="1281" y="963" width="37" height="37" rx="5" fill="#a8a8a8" stroke="#222" stroke-width="2.6"/>
<path d="M1282.5,981.5 H1316.5 V994 Q1316.5,998.7 1312,998.7 H1287 Q1282.5,998.7 1282.5,994 Z" fill="#8c8c8c"/>
<rect x="1291" y="973" width="17" height="17" fill="#000"/>
<rect x="1329.5" y="931" width="342.5" height="77" fill="#2a2a2a"/>
<rect x="1330.5" y="931" width="57.5" height="38.5" fill="url(#btnG)"/>
<circle cx="1359.25" cy="950" r="12" fill="url(#circG)" opacity="0.9"/>
<rect x="1389" y="931" width="55" height="38.5" fill="url(#btnG)"/>
<circle cx="1416.5" cy="950" r="12" fill="url(#circG)" opacity="0.9"/>
<rect x="1444.5" y="931" width="56.0" height="38.5" fill="url(#btnD)"/>
<circle cx="1472.5" cy="950" r="12" fill="url(#circG)" opacity="0.7"/>
<rect x="1502" y="931" width="55.5" height="38.5" fill="url(#btnG)"/>
<circle cx="1529.75" cy="950" r="12" fill="url(#circG)" opacity="0.9"/>
<rect x="1558.5" y="931" width="55.0" height="38.5" fill="url(#btnG)"/>
<circle cx="1586.0" cy="950" r="12" fill="url(#circG)" opacity="0.9"/>
<rect x="1614.5" y="931" width="53.5" height="38.5" fill="url(#btnG)"/>
<circle cx="1641.25" cy="950" r="12" fill="url(#circG)" opacity="0.9"/>
<rect x="1330.5" y="970.5" width="170.0" height="37.5" fill="url(#btnG)"/>
<rect x="1502" y="970.5" width="166" height="37.5" fill="url(#btnG)"/>
<rect x="1668" y="931" width="4" height="77" fill="#1a1a1a"/>
<rect x="1354" y="945.3" width="10" height="10" fill="#2e2e2e"/>
<path d="M1413,945.3 L1413,957 L1423,951.2 Z" fill="#262626"/>
<path d="M1468.8,945.3 H1465.5 V957 H1468.8 M1477,945.3 H1480.3 V957 H1477" fill="none" stroke="#262626" stroke-width="2.2"/>
<circle cx="1471" cy="950.8" r="1.1" fill="#262626"/><circle cx="1475" cy="950.8" r="1.1" fill="#262626"/>
<path d="M1529.4,949.9 C1526.9,945.6999999999999 1521.4,945.6999999999999 1521.4,949.9 C1521.4,954.1 1526.9,954.1 1529.4,949.9 C1531.9,945.6999999999999 1537.4,945.6999999999999 1537.4,949.9 C1537.4,954.1 1531.9,954.1 1529.4,949.9 Z" fill="none" stroke="#2a2a2a" stroke-width="2.1"/>
<path d="M1580,952 A5.6,5.6 0 0 1 1589.5,946.2 M1591,949.5 A5.6,5.6 0 0 1 1581.5,955.2" fill="none" stroke="#2a2a2a" stroke-width="2.6"/>
<path d="M1586.5,943.5 L1591.8,945.5 L1589.8,950.5 Z M1584.5,958 L1579.2,956 L1581.2,951 Z" fill="#2a2a2a"/>
<circle cx="1369" cy="988.8" r="12" fill="url(#circG)" opacity="0.9"/>
<path d="M1368,983.5 L1363,989.3 L1368,995 M1374,983.5 L1369,989.3 L1374,995" fill="none" stroke="#303030" stroke-width="1.9"/>
<circle cx="1635.8" cy="988.7" r="12" fill="url(#circG)" opacity="0.9"/>
<path d="M1631,983.5 L1636,989.3 L1631,995 M1637,983.5 L1642,989.3 L1637,995" fill="none" stroke="#303030" stroke-width="1.9"/>
<text x="1402" y="999" font-size="28" fill="#2e2e2e" textLength="64" lengthAdjust="spacingAndGlyphs" stroke="#2e2e2e" stroke-width="1.1">Back</text>
<text x="1535.5" y="999" font-size="28" fill="#2e2e2e" textLength="65" lengthAdjust="spacingAndGlyphs" stroke="#2e2e2e" stroke-width="1.1">Next</text>
<rect x="0" y="40" width="3" height="968" fill="#4e4e4e"/>
<rect x="1663" y="649" width="9" height="282" fill="url(#rshadow)"/>
<rect x="1663" y="41" width="9" height="50" fill="url(#rshadow)"/>
</svg>
</body></html>
